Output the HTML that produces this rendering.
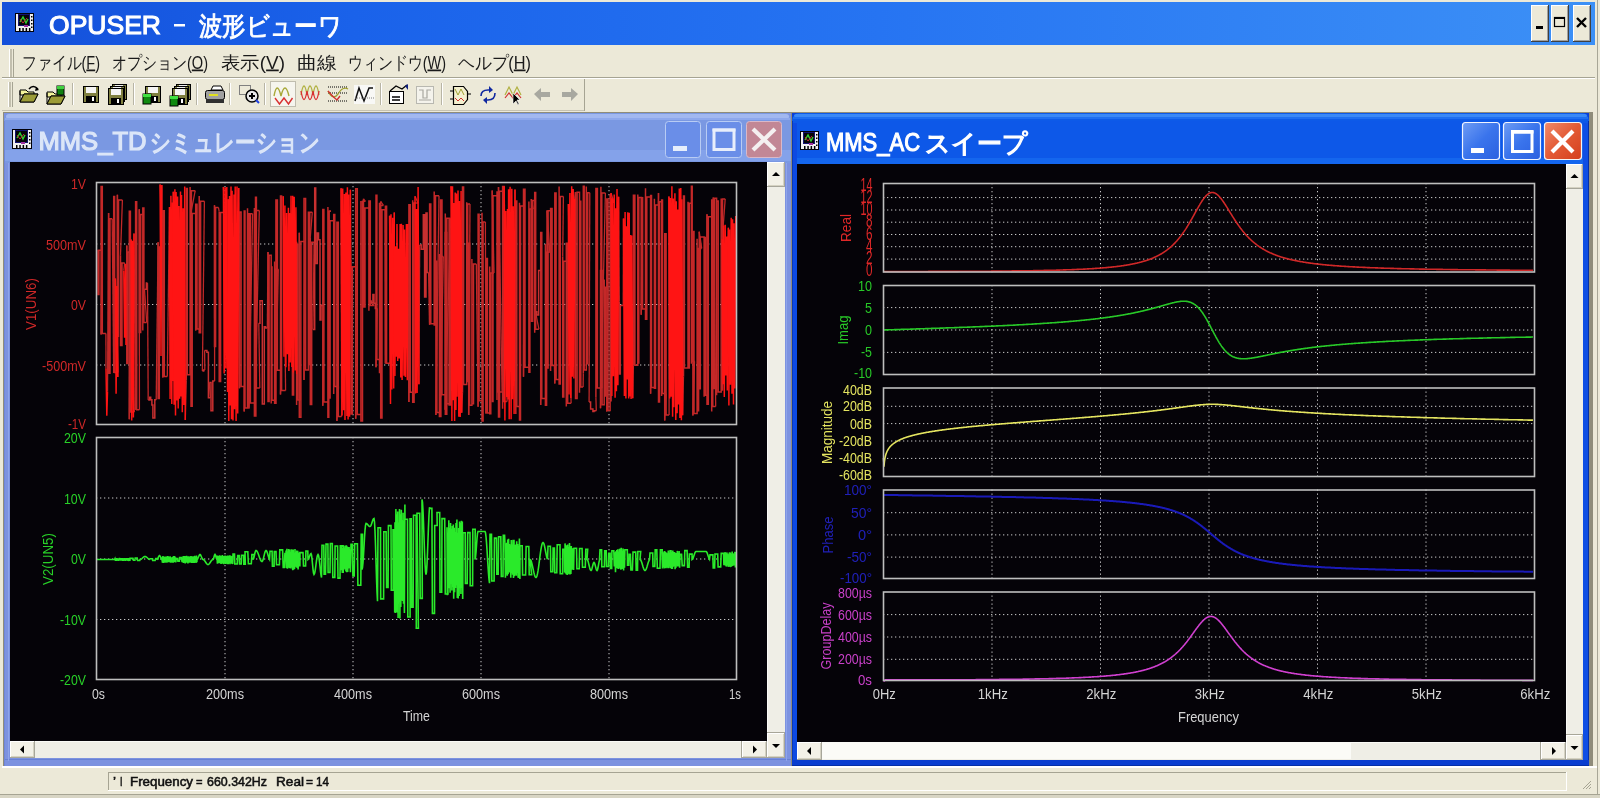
<!DOCTYPE html><html><head><meta charset="utf-8"><style>html,body{margin:0;padding:0;width:1600px;height:798px;overflow:hidden;background:#ECE9D8}svg{display:block;filter:blur(0.35px)}</style></head><body><svg width="1600" height="798" viewBox="0 0 1600 798" shape-rendering="auto"><defs>
<linearGradient id="gMain" x1="0" x2="1" y1="0" y2="0">
 <stop offset="0" stop-color="#1450DA"/><stop offset="0.22" stop-color="#1A62EA"/><stop offset="0.55" stop-color="#2674F2"/><stop offset="1" stop-color="#3C90F6"/>
</linearGradient>
<linearGradient id="gAct" x1="0" x2="0" y1="0" y2="1">
 <stop offset="0" stop-color="#3A84F6"/><stop offset="0.12" stop-color="#0A5CEC"/><stop offset="0.55" stop-color="#0058EE"/><stop offset="0.9" stop-color="#0A5FEA"/><stop offset="1" stop-color="#0845C8"/>
</linearGradient>
<linearGradient id="gInact" x1="0" x2="0" y1="0" y2="1">
 <stop offset="0" stop-color="#A8BDF0"/><stop offset="0.12" stop-color="#8DA6E8"/><stop offset="0.6" stop-color="#7C9AE4"/><stop offset="1" stop-color="#7593E0"/>
</linearGradient>
<linearGradient id="gClose" x1="0" x2="1" y1="0" y2="1">
 <stop offset="0" stop-color="#F08A6A"/><stop offset="0.5" stop-color="#E35A34"/><stop offset="1" stop-color="#D43F1E"/>
</linearGradient>
<linearGradient id="gBlueBtn" x1="0" x2="1" y1="0" y2="1">
 <stop offset="0" stop-color="#6E9CF4"/><stop offset="0.5" stop-color="#3A74EC"/><stop offset="1" stop-color="#2A60E0"/>
</linearGradient>
</defs><rect x="0" y="0" width="1600" height="798" fill="#ECE9D8" /><rect x="1597" y="0" width="1" height="798" fill="#A8A696" /><rect x="2" y="2" width="1593" height="43" fill="url(#gMain)" /><rect x="15" y="13" width="19" height="19" fill="#000008" /><rect x="16" y="14" width="2" height="17" fill="#F0F0F0" /><rect x="30" y="14" width="3" height="17" fill="#F0F0F0" /><rect x="16" y="26" width="17" height="5" fill="#F0F0F0" /><rect x="19.0" y="28" width="1.5" height="3" fill="#000" /><rect x="22.3" y="28" width="1.5" height="3" fill="#000" /><rect x="25.6" y="28" width="1.5" height="3" fill="#000" /><rect x="28.9" y="28" width="1.5" height="3" fill="#000" /><rect x="31" y="16.0" width="1.5" height="1.5" fill="#000" /><rect x="31" y="19.5" width="1.5" height="1.5" fill="#000" /><rect x="31" y="23.0" width="1.5" height="1.5" fill="#000" /><rect x="31" y="26.5" width="1.5" height="1.5" fill="#000" /><rect x="18" y="14" width="12" height="12" fill="#141470" /><rect x="19" y="15" width="10" height="10" fill="#050508" /><path d="M20,22 L23,17 L26,23 L28,19" stroke="#30D030" stroke-width="1.4" fill="none"/><path d="M20,19 L23,23 L27,18" stroke="#C03030" stroke-width="1" fill="none"/><rect x="24" y="25" width="4" height="2" fill="#A030A0" /><text x="49" y="34" font-family="'Liberation Sans',sans-serif" font-size="25" fill="#FFFFFF" text-anchor="start" font-weight="normal" textLength="112" lengthAdjust="spacingAndGlyphs" stroke="#FFFFFF" stroke-width="1.0">OPUSER</text><rect x="174" y="24" width="11" height="2.5" fill="#FFFFFF" /><text x="199" y="35" font-family="'Liberation Sans',sans-serif" font-size="26" fill="#FFFFFF" text-anchor="start" font-weight="normal" textLength="143" lengthAdjust="spacingAndGlyphs" stroke="#FFFFFF" stroke-width="0.9">波形ビューワ</text><rect x="1531" y="5" width="18" height="37" fill="#404040" /><rect x="1531" y="5" width="17" height="36" fill="#FFFFFF" /><rect x="1532" y="6" width="16" height="35" fill="#A0A0A0" /><rect x="1532" y="6" width="15" height="34" fill="#ECE9D8" /><rect x="1536" y="26" width="7" height="3" fill="#000" /><rect x="1551" y="5" width="18" height="37" fill="#404040" /><rect x="1551" y="5" width="17" height="36" fill="#FFFFFF" /><rect x="1552" y="6" width="16" height="35" fill="#A0A0A0" /><rect x="1552" y="6" width="15" height="34" fill="#ECE9D8" /><rect x="1554.5" y="17.5" width="10" height="9" fill="none" stroke="#000" stroke-width="1.2"/><rect x="1554" y="17" width="11" height="2" fill="#000" /><rect x="1573" y="5" width="18" height="37" fill="#404040" /><rect x="1573" y="5" width="17" height="36" fill="#FFFFFF" /><rect x="1574" y="6" width="16" height="35" fill="#A0A0A0" /><rect x="1574" y="6" width="15" height="34" fill="#ECE9D8" /><path d="M1577,18 L1586,27 M1586,18 L1577,27" stroke="#000" stroke-width="2.4"/><rect x="2" y="45" width="1593" height="33" fill="#ECE9D8" /><rect x="2" y="77" width="1593" height="1" fill="#A6A493" /><rect x="2" y="78" width="1593" height="1" fill="#FFFFFF" /><rect x="9" y="49" width="1" height="28" fill="#FFFFFF" /><rect x="10" y="49" width="2" height="28" fill="#C2BFAE" /><rect x="13" y="49" width="1" height="28" fill="#A6A493" /><text x="22" y="68.5" font-family="'Liberation Sans',sans-serif" font-size="17.5" fill="#1A1A1A" text-anchor="start" font-weight="normal" textLength="78" lengthAdjust="spacingAndGlyphs" >ファイル(<tspan text-decoration="underline">F</tspan>)</text><text x="112" y="68.5" font-family="'Liberation Sans',sans-serif" font-size="17.5" fill="#1A1A1A" text-anchor="start" font-weight="normal" textLength="96" lengthAdjust="spacingAndGlyphs" >オプション(<tspan text-decoration="underline">O</tspan>)</text><text x="221" y="68.5" font-family="'Liberation Sans',sans-serif" font-size="17.5" fill="#1A1A1A" text-anchor="start" font-weight="normal" textLength="64" lengthAdjust="spacingAndGlyphs" >表示(<tspan text-decoration="underline">V</tspan>)</text><text x="297" y="68.5" font-family="'Liberation Sans',sans-serif" font-size="17.5" fill="#1A1A1A" text-anchor="start" font-weight="normal" textLength="40" lengthAdjust="spacingAndGlyphs" >曲線</text><text x="348" y="68.5" font-family="'Liberation Sans',sans-serif" font-size="17.5" fill="#1A1A1A" text-anchor="start" font-weight="normal" textLength="98" lengthAdjust="spacingAndGlyphs" >ウィンドウ(<tspan text-decoration="underline">W</tspan>)</text><text x="458" y="68.5" font-family="'Liberation Sans',sans-serif" font-size="17.5" fill="#1A1A1A" text-anchor="start" font-weight="normal" textLength="73" lengthAdjust="spacingAndGlyphs" >ヘルプ(<tspan text-decoration="underline">H</tspan>)</text><rect x="2" y="110" width="582" height="1" fill="#C5C2B2" /><rect x="584" y="79" width="1" height="32" fill="#A6A493" /><rect x="8" y="82" width="1" height="25" fill="#FFFFFF" /><rect x="9" y="82" width="2" height="25" fill="#C2BFAE" /><rect x="12" y="82" width="1" height="25" fill="#A6A493" /><rect x="72" y="83" width="1" height="22" fill="#B8B5A5" /><rect x="73" y="83" width="1" height="22" fill="#FFFFFF" /><rect x="133" y="83" width="1" height="22" fill="#B8B5A5" /><rect x="134" y="83" width="1" height="22" fill="#FFFFFF" /><rect x="196" y="83" width="1" height="22" fill="#B8B5A5" /><rect x="197" y="83" width="1" height="22" fill="#FFFFFF" /><rect x="229" y="83" width="1" height="22" fill="#B8B5A5" /><rect x="230" y="83" width="1" height="22" fill="#FFFFFF" /><rect x="264" y="83" width="1" height="22" fill="#B8B5A5" /><rect x="265" y="83" width="1" height="22" fill="#FFFFFF" /><rect x="380" y="83" width="1" height="22" fill="#B8B5A5" /><rect x="381" y="83" width="1" height="22" fill="#FFFFFF" /><rect x="441" y="83" width="1" height="22" fill="#B8B5A5" /><rect x="442" y="83" width="1" height="22" fill="#FFFFFF" /><path d="M20,90 h6 l2,2 h6 v3 h-14 z" fill="#F4F49C" stroke="#000" stroke-width="1"/><path d="M20,91 v11 h14 l4,-8 h-14 l-4,8" fill="#E8E890" stroke="#000" stroke-width="1"/><path d="M24,94 h14 l-4,8 h-14 z" fill="#9C9C38" stroke="#000" stroke-width="1"/><path d="M29,89 q4,-5 9,0" stroke="#000" stroke-width="1.5" fill="none"/><path d="M36,87 l3,3 l-4,1 z" fill="#000"/><path d="M47,92 h6 l2,2 h6 v3 h-14 z" fill="#F4F49C" stroke="#000" stroke-width="1"/><path d="M47,93 v11 h14 l4,-8 h-14 l-4,8" fill="#E8E890" stroke="#000" stroke-width="1"/><path d="M51,96 h14 l-4,8 h-14 z" fill="#9C9C38" stroke="#000" stroke-width="1"/><rect x="57" y="86" width="7" height="9" fill="#108010" stroke="#000" stroke-width="1"/><rect x="57" y="86" width="7" height="3" fill="#40D040"/><rect x="83.5" y="86.5" width="15" height="16" fill="#808040" stroke="#000"/><rect x="86" y="87" width="10" height="6" fill="#F4F4F4" /><rect x="86" y="96" width="10" height="6" fill="#000" /><rect x="92" y="97" width="2" height="4" fill="#FFF" /><rect x="112.5" y="84.5" width="14" height="15" fill="#808040" stroke="#000"/><rect x="115" y="85" width="8" height="5" fill="#F0F0F0" /><rect x="110.5" y="86.5" width="14" height="15" fill="#808040" stroke="#000"/><rect x="113" y="87" width="8" height="5" fill="#F0F0F0" /><rect x="108.5" y="88.5" width="15" height="16" fill="#808040" stroke="#000"/><rect x="111" y="89" width="10" height="6" fill="#F4F4F4" /><rect x="111" y="98" width="10" height="6" fill="#000" /><rect x="117" y="99" width="2" height="4" fill="#FFF" /><rect x="145.5" y="86.5" width="15" height="16" fill="#808040" stroke="#000"/><rect x="148" y="87" width="10" height="6" fill="#F4F4F4" /><rect x="148" y="96" width="10" height="6" fill="#000" /><rect x="154" y="97" width="2" height="4" fill="#FFF" /><rect x="143" y="94" width="8" height="10" fill="#108A10" stroke="#000"/><rect x="143" y="94" width="8" height="3" fill="#40E040"/><rect x="176.5" y="84.5" width="14" height="15" fill="#808040" stroke="#000"/><rect x="179" y="85" width="8" height="5" fill="#F0F0F0" /><rect x="174.5" y="86.5" width="14" height="15" fill="#808040" stroke="#000"/><rect x="177" y="87" width="8" height="5" fill="#F0F0F0" /><rect x="172.5" y="88.5" width="15" height="16" fill="#808040" stroke="#000"/><rect x="175" y="89" width="10" height="6" fill="#F4F4F4" /><rect x="175" y="98" width="10" height="6" fill="#000" /><rect x="181" y="99" width="2" height="4" fill="#FFF" /><rect x="170" y="96" width="8" height="10" fill="#108A10" stroke="#000"/><rect x="170" y="96" width="8" height="3" fill="#40E040"/><path d="M213,86 h8 l2,4 h-12 z" fill="#fff" stroke="#000"/><rect x="205.5" y="90.5" width="19" height="9" rx="2" fill="#A0A0A0" stroke="#000"/><rect x="206" y="99" width="18" height="4" fill="#303030"/><rect x="209" y="94" width="9" height="2" fill="#E0E020"/><rect x="239.5" y="85.5" width="11" height="9" fill="none" stroke="#808080"/><circle cx="252" cy="96" r="6" fill="#E8E8E8" stroke="#000" stroke-width="1.5"/><path d="M249,96 h6 M252,93 v6" stroke="#000" stroke-width="2"/><path d="M256,100 l3,3" stroke="#2040E0" stroke-width="2"/><rect x="270.5" y="81.5" width="25" height="25" fill="#F6F5EE" stroke="#C0BDAE"/><path d="M274,96 Q277,80 281,96 Q285,80 289,96" stroke="#A8A838" stroke-width="1.4" fill="none"/><path d="M275,98 l4.5,6 l4.5,-6 l4.5,6 l4,-6" stroke="#D83030" stroke-width="1.4" fill="none"/><path d="M301,95 Q304,77 307,95 Q310,77 313,95 Q316,77 319,95" stroke="#B0B040" stroke-width="1.3" fill="none"/><path d="M301,91 Q304,108 307,91 Q310,108 313,91 Q316,108 319,91" stroke="#D83030" stroke-width="1.3" fill="none"/><path d="M328,87 h20 M328,93 h20 M328,101 h20" stroke="#000" stroke-width="1" stroke-dasharray="1,1"/><path d="M328,91 q5,10 10,3 q5,-8 10,-5" stroke="#A0A030" stroke-width="1.3" fill="none"/><path d="M328,91 q5,6 9,9 l3,-4" stroke="#D03030" stroke-width="1.3" fill="none"/><rect x="354" y="85" width="21" height="19" fill="#F8F8F6"/><path d="M355,101 l4,-13 l5,13 l5,-13 l4,0" stroke="#101010" stroke-width="1.5" fill="none"/><path d="M355,98 h20" stroke="#808080" stroke-dasharray="1,1"/><rect x="389.5" y="91.5" width="14" height="12" fill="#fff" stroke="#000"/><path d="M392,97 h8 M392,100 h8" stroke="#000" stroke-width="1.4"/><path d="M390,91 l6,-5 l6,3 l5,-4" stroke="#000" stroke-width="1.3" fill="none"/><path d="M405,86 l3,-2 v6 z" fill="#102080"/><rect x="416.5" y="86.5" width="17" height="17" fill="#F4F3EC" stroke="#B8B8B0"/><path d="M419,90 h4 v8 h4 v-8 h4 M419,100 h12" stroke="#A8A8A0" stroke-width="1.2" fill="none"/><path d="M453.5,86.5 h10 l4,5 v8 l-4,5 h-10 z" fill="#F4F0D0" stroke="#000" stroke-width="1.2"/><path d="M450,91 h4 M450,99 h4 M467,94 h4" stroke="#000"/><path d="M455,89 l3,6 l3,-6 l3,6" stroke="#A0A030" fill="none"/><path d="M455,98 l3,3 l3,-3 l3,3" stroke="#D03030" fill="none"/><path d="M481,96 q0,-6 7,-6 h3" stroke="#1028A0" stroke-width="1.6" fill="none"/><path d="M489,86 l4,4 l-4,3 z" fill="#1028A0"/><path d="M495,93 q0,7 -7,7 h-3" stroke="#1028A0" stroke-width="1.6" fill="none"/><path d="M487,97 l-4,3 l4,4 z" fill="#1028A0"/><path d="M505,95 l4,-8 l4,8 l4,-8 l4,8" stroke="#B0B040" stroke-width="1.2" fill="none"/><path d="M505,98 l4,-5 l4,5 l4,-5 l4,5" stroke="#D03030" stroke-width="1.2" fill="none"/><path d="M513,93 v11 l3,-3 l2,4 l1,-1 l-2,-4 h3 z" fill="#000" stroke="#fff" stroke-width="0.6"/><path d="M534,94 l7,-6 v4 h9 v5 h-9 v4 z" fill="#A8A8A0"/><path d="M578,94 l-7,-6 v4 h-9 v5 h9 v4 z" fill="#A8A8A0"/><rect x="3" y="112" width="1590" height="654" fill="#8F8C7A" /><rect x="4" y="113" width="787" height="653" fill="#7C92E0" /><rect x="4" y="759" width="787" height="1" fill="#6880D4" /><rect x="786" y="163" width="1" height="598" fill="#8EA4EA" /><rect x="8" y="163" width="1" height="598" fill="#8EA4EA" /><rect x="4" y="113" width="787" height="50" rx="7" fill="#7A98E2"/><rect x="4" y="121" width="787" height="42" fill="#7A98E2" /><rect x="6" y="114" width="783" height="5" rx="3" fill="#A2B8F0"/><rect x="5" y="118" width="785" height="2" fill="#8EA8EC" /><rect x="4" y="150" width="787" height="11" fill="#84A2EA" /><rect x="4" y="121" width="1" height="645" fill="#6F86D8" /><rect x="12" y="129" width="20" height="20" fill="#000008" /><rect x="13" y="130" width="2" height="18" fill="#F0F0F0" /><rect x="28" y="130" width="3" height="18" fill="#F0F0F0" /><rect x="13" y="143" width="18" height="5" fill="#F0F0F0" /><rect x="16.0" y="145" width="1.5" height="3" fill="#000" /><rect x="19.3" y="145" width="1.5" height="3" fill="#000" /><rect x="22.6" y="145" width="1.5" height="3" fill="#000" /><rect x="25.9" y="145" width="1.5" height="3" fill="#000" /><rect x="29" y="132.0" width="1.5" height="1.5" fill="#000" /><rect x="29" y="135.5" width="1.5" height="1.5" fill="#000" /><rect x="29" y="139.0" width="1.5" height="1.5" fill="#000" /><rect x="29" y="142.5" width="1.5" height="1.5" fill="#000" /><rect x="15" y="130" width="13" height="13" fill="#141470" /><rect x="16" y="131" width="11" height="11" fill="#050508" /><path d="M17,138 L20,133 L23,139 L25,135" stroke="#30D030" stroke-width="1.4" fill="none"/><path d="M17,135 L20,139 L24,134" stroke="#C03030" stroke-width="1" fill="none"/><rect x="21" y="142" width="4" height="2" fill="#A030A0" /><text x="38.5" y="150" font-family="'Liberation Sans',sans-serif" font-size="25" fill="#DCE6F8" text-anchor="start" font-weight="normal" textLength="108" lengthAdjust="spacingAndGlyphs" stroke="#DCE6F8" stroke-width="1.2">MMS_TD</text><text x="150" y="151" font-family="'Liberation Sans',sans-serif" font-size="25" fill="#DCE6F8" text-anchor="start" font-weight="normal" textLength="170" lengthAdjust="spacingAndGlyphs" stroke="#DCE6F8" stroke-width="1.3">シミュレーション</text><rect x="665.5" y="121.5" width="35" height="36" rx="3" fill="#6A8EE8" stroke="#B8CCF4"/><rect x="706.5" y="121.5" width="35" height="36" rx="3" fill="#6A8EE8" stroke="#B8CCF4"/><rect x="673" y="146" width="14" height="5" fill="#E6EEFB" /><rect x="714" y="130" width="20" height="19.5" fill="none" stroke="#E8EEFB" stroke-width="3"/><rect x="712.5" y="128.5" width="23" height="3" fill="#E8EEFB" /><rect x="746.5" y="121.5" width="35" height="36" rx="3" fill="#C28795" stroke="#D9B8C8"/><path d="M753,129 L775,150 M775,129 L753,150" stroke="#F4F0F0" stroke-width="4.2"/><rect x="10" y="162" width="757" height="579" fill="#050308" /><rect x="767" y="162" width="18" height="596" fill="#EFEEE6" /><rect x="767" y="162" width="1" height="596" fill="#FAFAF6" /><rect x="767" y="162" width="18" height="25" fill="#A7A69A" /><rect x="767" y="162" width="17" height="24" fill="#FFFFFF" /><rect x="768" y="163" width="16" height="23" fill="#D5D2C2" /><rect x="768" y="163" width="15" height="22" fill="#F3F1E7" /><polygon points="772.0,176.0 780.0,176.0 776.0,172.0" fill="#000"/><rect x="767" y="732" width="18" height="1" fill="#A8A698" /><rect x="767" y="733" width="18" height="25" fill="#A7A69A" /><rect x="767" y="733" width="17" height="24" fill="#FFFFFF" /><rect x="768" y="734" width="16" height="23" fill="#D5D2C2" /><rect x="768" y="734" width="15" height="22" fill="#F3F1E7" /><polygon points="772.0,744.0 780.0,744.0 776.0,748.0" fill="#000"/><rect x="10" y="741" width="757" height="17" fill="#EFEEE6" /><rect x="10" y="741" width="757" height="1" fill="#FAFAF6" /><rect x="10" y="741" width="25" height="17" fill="#A7A69A" /><rect x="10" y="741" width="24" height="16" fill="#FFFFFF" /><rect x="11" y="742" width="23" height="15" fill="#D5D2C2" /><rect x="11" y="742" width="22" height="14" fill="#F3F1E7" /><polygon points="24.0,745.5 24.0,753.5 20.0,749.5" fill="#000"/><rect x="741" y="741" width="1" height="17" fill="#A8A698" /><rect x="742" y="741" width="25" height="17" fill="#A7A69A" /><rect x="742" y="741" width="24" height="16" fill="#FFFFFF" /><rect x="743" y="742" width="23" height="15" fill="#D5D2C2" /><rect x="743" y="742" width="22" height="14" fill="#F3F1E7" /><polygon points="753.0,745.5 753.0,753.5 757.0,749.5" fill="#000"/><rect x="792" y="113" width="797" height="653" fill="#0A3ED8" /><rect x="792" y="113" width="797" height="51" rx="7" fill="#0D5AE8"/><rect x="792" y="121" width="797" height="43" fill="#0D58E8" /><rect x="794" y="114" width="793" height="3.5" rx="2" fill="#3A88F6"/><rect x="793" y="117" width="795" height="2" fill="#1E6EF0" /><rect x="792" y="158" width="797" height="6" fill="#1466EE" /><rect x="1583" y="123" width="6" height="643" fill="#0E4EE4" /><rect x="1588" y="121" width="1" height="645" fill="#0630A8" /><rect x="792" y="123" width="5" height="643" fill="#0D4AE2" /><rect x="792" y="121" width="1" height="645" fill="#0838B8" /><rect x="792" y="760" width="797" height="6" fill="#0A3ED0" /><rect x="792" y="765" width="797" height="1" fill="#0630A8" /><rect x="800" y="131" width="19" height="19" fill="#000008" /><rect x="801" y="132" width="2" height="17" fill="#F0F0F0" /><rect x="815" y="132" width="3" height="17" fill="#F0F0F0" /><rect x="801" y="144" width="17" height="5" fill="#F0F0F0" /><rect x="804.0" y="146" width="1.5" height="3" fill="#000" /><rect x="807.3" y="146" width="1.5" height="3" fill="#000" /><rect x="810.6" y="146" width="1.5" height="3" fill="#000" /><rect x="813.9" y="146" width="1.5" height="3" fill="#000" /><rect x="816" y="134.0" width="1.5" height="1.5" fill="#000" /><rect x="816" y="137.5" width="1.5" height="1.5" fill="#000" /><rect x="816" y="141.0" width="1.5" height="1.5" fill="#000" /><rect x="816" y="144.5" width="1.5" height="1.5" fill="#000" /><rect x="803" y="132" width="12" height="12" fill="#141470" /><rect x="804" y="133" width="10" height="10" fill="#050508" /><path d="M805,140 L808,135 L811,141 L813,137" stroke="#30D030" stroke-width="1.4" fill="none"/><path d="M805,137 L808,141 L812,136" stroke="#C03030" stroke-width="1" fill="none"/><rect x="809" y="143" width="4" height="2" fill="#A030A0" /><text x="826" y="151" font-family="'Liberation Sans',sans-serif" font-size="25" fill="#FFFFFF" text-anchor="start" font-weight="normal" textLength="94" lengthAdjust="spacingAndGlyphs" stroke="#FFFFFF" stroke-width="1.1">MMS_AC</text><text x="925" y="152" font-family="'Liberation Sans',sans-serif" font-size="25" fill="#FFFFFF" text-anchor="start" font-weight="normal" textLength="103" lengthAdjust="spacingAndGlyphs" stroke="#FFFFFF" stroke-width="1.3">スイープ</text><rect x="1462.5" y="122.5" width="37" height="37" rx="3" fill="url(#gBlueBtn)" stroke="#F0F4FF" stroke-width="1.2"/><rect x="1503.5" y="122.5" width="37" height="37" rx="3" fill="url(#gBlueBtn)" stroke="#F0F4FF" stroke-width="1.2"/><rect x="1471" y="148" width="13" height="5" fill="#FFFFFF" /><rect x="1512.5" y="132" width="19.5" height="19.5" fill="none" stroke="#FFFFFF" stroke-width="3"/><rect x="1511" y="130" width="22.5" height="3.5" fill="#FFFFFF" /><rect x="1544.5" y="122.5" width="37" height="37" rx="3" fill="url(#gClose)" stroke="#F4F4F4" stroke-width="1.2"/><path d="M1552,131 L1573,152 M1573,131 L1552,152" stroke="#FFFFFF" stroke-width="4.2"/><rect x="797" y="164" width="769" height="578" fill="#050308" /><rect x="1566" y="164" width="17" height="596" fill="#EFEEE6" /><rect x="1566" y="164" width="1" height="596" fill="#FAFAF6" /><rect x="1566" y="164" width="17" height="25" fill="#A7A69A" /><rect x="1566" y="164" width="16" height="24" fill="#FFFFFF" /><rect x="1567" y="165" width="15" height="23" fill="#D5D2C2" /><rect x="1567" y="165" width="14" height="22" fill="#F3F1E7" /><polygon points="1570.5,178.0 1578.5,178.0 1574.5,174.0" fill="#000"/><rect x="1566" y="734" width="17" height="1" fill="#A8A698" /><rect x="1566" y="735" width="17" height="25" fill="#A7A69A" /><rect x="1566" y="735" width="16" height="24" fill="#FFFFFF" /><rect x="1567" y="736" width="15" height="23" fill="#D5D2C2" /><rect x="1567" y="736" width="14" height="22" fill="#F3F1E7" /><polygon points="1570.5,746.0 1578.5,746.0 1574.5,750.0" fill="#000"/><rect x="797" y="742" width="769" height="18" fill="#EFEEE6" /><rect x="797" y="742" width="769" height="1" fill="#FAFAF6" /><rect x="797" y="742" width="25" height="18" fill="#A7A69A" /><rect x="797" y="742" width="24" height="17" fill="#FFFFFF" /><rect x="798" y="743" width="23" height="16" fill="#D5D2C2" /><rect x="798" y="743" width="22" height="15" fill="#F3F1E7" /><polygon points="811.0,747.0 811.0,755.0 807.0,751.0" fill="#000"/><rect x="1540" y="742" width="1" height="18" fill="#A8A698" /><rect x="1541" y="742" width="25" height="18" fill="#A7A69A" /><rect x="1541" y="742" width="24" height="17" fill="#FFFFFF" /><rect x="1542" y="743" width="23" height="16" fill="#D5D2C2" /><rect x="1542" y="743" width="22" height="15" fill="#F3F1E7" /><polygon points="1552.0,747.0 1552.0,755.0 1556.0,751.0" fill="#000"/><rect x="822" y="743" width="529" height="16" fill="#FBFBF7" /><rect x="2" y="766" width="1595" height="30" fill="#ECE9D8" /><rect x="2" y="766" width="1595" height="2" fill="#FFFFFF" /><rect x="108" y="772" width="1458" height="1" fill="#A6A493" /><rect x="108" y="772" width="1" height="19" fill="#A6A493" /><rect x="108" y="790" width="1458" height="1" fill="#FFFFFF" /><rect x="1566" y="772" width="1" height="19" fill="#FFFFFF" /><text x="113" y="785.5" font-family="'Liberation Sans',sans-serif" font-size="12" fill="#101010" text-anchor="start" font-weight="normal" textLength="3" lengthAdjust="spacingAndGlyphs" stroke="#101010" stroke-width="0.5">’</text><text x="120" y="785.5" font-family="'Liberation Sans',sans-serif" font-size="12" fill="#101010" text-anchor="start" font-weight="normal" textLength="2.5" lengthAdjust="spacingAndGlyphs" stroke="#101010" stroke-width="0.5">I</text><text x="130" y="785.5" font-family="'Liberation Sans',sans-serif" font-size="12" fill="#101010" text-anchor="start" font-weight="normal" textLength="63" lengthAdjust="spacingAndGlyphs" stroke="#101010" stroke-width="0.5">Frequency</text><text x="196" y="785.5" font-family="'Liberation Sans',sans-serif" font-size="12" fill="#101010" text-anchor="start" font-weight="normal" textLength="6.5" lengthAdjust="spacingAndGlyphs" stroke="#101010" stroke-width="0.5">=</text><text x="207" y="785.5" font-family="'Liberation Sans',sans-serif" font-size="12" fill="#101010" text-anchor="start" font-weight="normal" textLength="60" lengthAdjust="spacingAndGlyphs" stroke="#101010" stroke-width="0.5">660.342Hz</text><text x="276" y="785.5" font-family="'Liberation Sans',sans-serif" font-size="12" fill="#101010" text-anchor="start" font-weight="normal" textLength="28" lengthAdjust="spacingAndGlyphs" stroke="#101010" stroke-width="0.5">Real</text><text x="306" y="785.5" font-family="'Liberation Sans',sans-serif" font-size="12" fill="#101010" text-anchor="start" font-weight="normal" textLength="7" lengthAdjust="spacingAndGlyphs" stroke="#101010" stroke-width="0.5">=</text><text x="316" y="785.5" font-family="'Liberation Sans',sans-serif" font-size="12" fill="#101010" text-anchor="start" font-weight="normal" textLength="13" lengthAdjust="spacingAndGlyphs" stroke="#101010" stroke-width="0.5">14</text><rect x="0" y="794" width="1600" height="1" fill="#A6A493" /><rect x="0" y="795" width="1600" height="3" fill="#D8D5C4" /><path d="M1583,789 l8,-8 M1586,789 l5,-5 M1589,789 l2,-2" stroke="#A6A493" stroke-width="1"/><line x1="96" y1="244" x2="737" y2="244" stroke="#C8C8C8" stroke-width="1" stroke-dasharray="1.3,2.7"/><line x1="96" y1="304.5" x2="737" y2="304.5" stroke="#C8C8C8" stroke-width="1" stroke-dasharray="1.3,2.7"/><line x1="96" y1="365" x2="737" y2="365" stroke="#C8C8C8" stroke-width="1" stroke-dasharray="1.3,2.7"/><line x1="225" y1="182" x2="225" y2="425" stroke="#C8C8C8" stroke-width="1" stroke-dasharray="1.3,2.7"/><line x1="353" y1="182" x2="353" y2="425" stroke="#C8C8C8" stroke-width="1" stroke-dasharray="1.3,2.7"/><line x1="481" y1="182" x2="481" y2="425" stroke="#C8C8C8" stroke-width="1" stroke-dasharray="1.3,2.7"/><line x1="609" y1="182" x2="609" y2="425" stroke="#C8C8C8" stroke-width="1" stroke-dasharray="1.3,2.7"/><line x1="96" y1="498" x2="737" y2="498" stroke="#C8C8C8" stroke-width="1" stroke-dasharray="1.3,2.7"/><line x1="96" y1="559" x2="737" y2="559" stroke="#C8C8C8" stroke-width="1" stroke-dasharray="1.3,2.7"/><line x1="96" y1="619.5" x2="737" y2="619.5" stroke="#C8C8C8" stroke-width="1" stroke-dasharray="1.3,2.7"/><line x1="225" y1="437" x2="225" y2="680" stroke="#C8C8C8" stroke-width="1" stroke-dasharray="1.3,2.7"/><line x1="353" y1="437" x2="353" y2="680" stroke="#C8C8C8" stroke-width="1" stroke-dasharray="1.3,2.7"/><line x1="481" y1="437" x2="481" y2="680" stroke="#C8C8C8" stroke-width="1" stroke-dasharray="1.3,2.7"/><line x1="609" y1="437" x2="609" y2="680" stroke="#C8C8C8" stroke-width="1" stroke-dasharray="1.3,2.7"/><g><polyline fill="none" stroke="#C42828" stroke-width="1.5" points="98.0,249.8 98.0,294.5 98.9,294.5 98.9,250.3 102.0,250.3"/><polyline fill="none" stroke="#C42828" stroke-width="1.5" points="101.1,334.5 101.1,186.4 102.3,186.4 102.3,333.6 105.9,333.6"/><polyline fill="none" stroke="#C42828" stroke-width="1.5" points="108.6,213.1 108.6,373.2 110.0,373.2 110.0,218.8 112.2,218.8"/><polyline fill="none" stroke="#C42828" stroke-width="1.5" points="113.7,373.1 113.7,196.6 114.6,196.6 114.6,372.5 118.0,372.5"/><polyline fill="none" stroke="#C42828" stroke-width="1.5" points="117.4,194.8 117.4,336.2 118.5,336.2 118.5,199.9 122.4,199.9"/><polyline fill="none" stroke="#C42828" stroke-width="1.5" points="120.5,255.3 120.5,345.5 122.0,345.5 122.0,262.9 124.7,262.9"/><polyline fill="none" stroke="#C42828" stroke-width="1.5" points="126.8,245.4 126.8,363.5 128.0,363.5 128.0,252.0 130.3,252.0"/><polyline fill="none" stroke="#C42828" stroke-width="1.5" points="129.3,419.2 129.3,211.3 130.4,211.3 130.4,411.9 134.3,411.9"/><polyline fill="none" stroke="#C42828" stroke-width="1.5" points="135.6,409.8 135.6,201.7 136.7,201.7 136.7,409.8 139.4,409.8"/><polyline fill="none" stroke="#C42828" stroke-width="1.5" points="139.3,209.3 139.3,332.5 140.7,332.5 140.7,214.4 142.8,214.4 142.8,330.4 142.8,207.9 143.9,207.9 143.9,322.4 146.7,322.4"/><polyline fill="none" stroke="#C42828" stroke-width="1.5" points="158.1,242.2 158.1,398.5 159.3,398.5 159.3,247.1 161.9,247.1"/><polyline fill="none" stroke="#C42828" stroke-width="1.5" points="162.8,377.4 162.8,210.7 164.3,210.7 164.3,376.5 167.3,376.5"/><polyline fill="none" stroke="#C42828" stroke-width="1.5" points="186.3,380.7 186.3,188.5 187.3,188.5 187.3,374.8 190.1,374.8 190.1,187.1 190.1,367.9 191.4,367.9 191.4,190.7 195.2,190.7"/><polyline fill="none" stroke="#C42828" stroke-width="1.5" points="191.0,212.3 191.0,406.3 192.2,406.3 192.2,213.6 195.9,213.6"/><polyline fill="none" stroke="#C42828" stroke-width="1.5" points="195.7,330.5 195.7,204.2 197.0,204.2 197.0,329.1 199.2,329.1 199.2,195.9 199.2,332.7 200.6,332.7 200.6,201.2 204.4,201.2"/><polyline fill="none" stroke="#C42828" stroke-width="1.5" points="214.5,205.3 214.5,346.4 215.6,346.4 215.6,207.4 218.4,207.4"/><polyline fill="none" stroke="#C42828" stroke-width="1.5" points="219.2,211.7 219.2,381.4 220.6,381.4 220.6,212.4 224.4,212.4"/><polyline fill="none" stroke="#C42828" stroke-width="1.5" points="239.5,388.2 239.5,212.0 241.1,212.0 241.1,386.4 244.3,386.4"/><polyline fill="none" stroke="#C42828" stroke-width="1.5" points="244.2,411.6 244.2,211.0 245.0,211.0 245.0,408.1 247.5,408.1 247.5,208.2 247.5,406.6 248.7,406.6 248.7,213.7 252.6,213.7"/><polyline fill="none" stroke="#C42828" stroke-width="1.5" points="248.9,408.5 248.9,214.7 250.4,214.7 250.4,403.1 254.4,403.1 254.4,208.1 254.4,416.1 255.9,416.1 255.9,210.4 259.3,210.4"/><polyline fill="none" stroke="#C42828" stroke-width="1.5" points="255.5,389.2 255.5,197.2 256.4,197.2 256.4,387.9 259.8,387.9"/><polyline fill="none" stroke="#C42828" stroke-width="1.5" points="268.0,252.0 268.0,401.5 269.1,401.5 269.1,255.3 271.2,255.3 271.2,403.6 271.2,266.9 272.0,266.9 272.0,400.2 274.6,400.2 274.6,261.6 274.6,403.2 276.0,403.2 276.0,269.3 278.3,269.3"/><polyline fill="none" stroke="#C42828" stroke-width="1.5" points="275.9,371.2 275.9,200.1 277.4,200.1 277.4,370.3 281.1,370.3"/><polyline fill="none" stroke="#C42828" stroke-width="1.5" points="280.5,394.5 280.5,195.9 281.6,195.9 281.6,390.6 285.6,390.6"/><polyline fill="none" stroke="#C42828" stroke-width="1.5" points="292.4,236.4 292.4,395.0 293.6,395.0 293.6,242.6 296.6,242.6 296.6,404.9 296.6,244.2 298.0,244.2 298.0,400.0 300.5,400.0"/><polyline fill="none" stroke="#C42828" stroke-width="1.5" points="299.3,232.7 299.3,417.2 300.9,417.2 300.9,241.6 304.8,241.6"/><polyline fill="none" stroke="#C42828" stroke-width="1.5" points="304.0,380.0 304.0,198.5 305.6,198.5 305.6,370.0 308.4,370.0 308.4,211.4 308.4,364.2 309.8,364.2 309.8,212.2 312.3,212.2"/><polyline fill="none" stroke="#C42828" stroke-width="1.5" points="310.3,237.2 310.3,404.6 311.7,404.6 311.7,242.3 314.1,242.3"/><polyline fill="none" stroke="#C42828" stroke-width="1.5" points="322.8,405.7 322.8,209.6 323.9,209.6 323.9,401.9 327.9,401.9 327.9,206.9 327.9,417.2 328.8,417.2 328.8,211.2 331.0,211.2"/><polyline fill="none" stroke="#C42828" stroke-width="1.5" points="329.1,211.0 329.1,398.1 330.1,398.1 330.1,220.7 333.7,220.7 333.7,394.1 333.7,214.4 334.8,214.4 334.8,386.5 338.5,386.5"/><polyline fill="none" stroke="#C42828" stroke-width="1.5" points="336.9,420.9 336.9,222.3 338.3,222.3 338.3,416.4 341.6,416.4"/><polyline fill="none" stroke="#C42828" stroke-width="1.5" points="351.0,259.8 351.0,414.1 352.4,414.1 352.4,266.7 356.1,266.7"/><polyline fill="none" stroke="#C42828" stroke-width="1.5" points="355.7,418.8 355.7,188.8 357.3,188.8 357.3,414.4 360.9,414.4 360.9,200.9 360.9,421.0 362.5,421.0 362.5,201.3 365.4,201.3"/><polyline fill="none" stroke="#C42828" stroke-width="1.5" points="363.5,198.8 363.5,307.1 365.0,307.1 365.0,208.1 368.9,208.1 368.9,310.8 368.9,201.0 370.3,201.0 370.3,305.6 374.2,305.6"/><polyline fill="none" stroke="#C42828" stroke-width="1.5" points="376.0,367.2 376.0,195.2 376.9,195.2 376.9,359.6 379.5,359.6 379.5,202.8 379.5,372.6 380.3,372.6 380.3,205.4 383.4,205.4"/><polyline fill="none" stroke="#C42828" stroke-width="1.5" points="380.7,201.4 380.7,417.9 382.0,417.9 382.0,209.8 385.0,209.8"/><polyline fill="none" stroke="#C42828" stroke-width="1.5" points="385.4,363.5 385.4,206.3 386.6,206.3 386.6,363.2 390.0,363.2"/><polyline fill="none" stroke="#C42828" stroke-width="1.5" points="408.9,401.9 408.9,204.7 410.2,204.7 410.2,392.3 412.7,392.3 412.7,200.3 412.7,402.2 414.1,402.2 414.1,203.1 418.0,203.1"/><polyline fill="none" stroke="#C42828" stroke-width="1.5" points="429.6,324.7 429.6,203.9 430.8,203.9 430.8,323.7 434.2,323.7 434.2,191.6 434.2,325.1 435.5,325.1 435.5,195.8 439.0,195.8"/><polyline fill="none" stroke="#C42828" stroke-width="1.5" points="435.9,415.1 435.9,261.3 436.9,261.3 436.9,412.4 439.4,412.4 439.4,254.1 439.4,416.5 440.9,416.5 440.9,256.5 443.3,256.5"/><polyline fill="none" stroke="#C42828" stroke-width="1.5" points="440.5,397.0 440.5,200.1 442.0,200.1 442.0,394.7 445.3,394.7 445.3,213.4 445.3,414.2 446.8,414.2 446.8,218.2 450.6,218.2"/><polyline fill="none" stroke="#C42828" stroke-width="1.5" points="445.2,409.7 445.2,232.4 446.7,232.4 446.7,403.7 449.1,403.7 449.1,217.9 449.1,405.1 450.5,405.1 450.5,219.7 453.8,219.7"/><polyline fill="none" stroke="#C42828" stroke-width="1.5" points="462.5,392.7 462.5,187.1 463.6,187.1 463.6,384.6 466.7,384.6 466.7,202.3 466.7,381.5 467.7,381.5 467.7,204.0 470.0,204.0"/><polyline fill="none" stroke="#C42828" stroke-width="1.5" points="468.7,414.9 468.7,243.3 469.7,243.3 469.7,405.2 471.9,405.2 471.9,259.1 471.9,403.7 473.5,403.7 473.5,263.9 476.3,263.9"/><polyline fill="none" stroke="#C42828" stroke-width="1.5" points="478.1,406.8 478.1,214.3 479.1,214.3 479.1,400.7 482.0,400.7 482.0,212.7 482.0,420.9 483.1,420.9 483.1,222.1 485.4,222.1"/><polyline fill="none" stroke="#C42828" stroke-width="1.5" points="485.9,413.5 485.9,258.4 487.4,258.4 487.4,413.1 489.7,413.1 489.7,266.6 489.7,413.7 490.8,413.7 490.8,272.9 494.0,272.9"/><polyline fill="none" stroke="#C42828" stroke-width="1.5" points="492.2,190.6 492.2,401.4 493.0,401.4 493.0,195.7 497.0,195.7 497.0,400.0 497.0,192.0 498.5,192.0 498.5,391.9 502.1,391.9"/><polyline fill="none" stroke="#C42828" stroke-width="1.5" points="498.5,186.9 498.5,417.1 499.6,417.1 499.6,191.2 502.6,191.2 502.6,408.8 502.6,186.4 504.1,186.4 504.1,401.5 507.1,401.5"/><polyline fill="none" stroke="#C42828" stroke-width="1.5" points="515.7,414.0 515.7,201.1 516.8,201.1 516.8,406.6 519.5,406.6 519.5,202.8 519.5,420.1 520.5,420.1 520.5,206.1 523.8,206.1"/><polyline fill="none" stroke="#C42828" stroke-width="1.5" points="523.5,376.8 523.5,189.2 525.0,189.2 525.0,367.2 528.9,367.2 528.9,201.5 528.9,372.2 529.9,372.2 529.9,209.0 533.2,209.0"/><polyline fill="none" stroke="#C42828" stroke-width="1.5" points="531.3,199.1 531.3,321.3 532.7,321.3 532.7,200.5 534.7,200.5 534.7,332.7 534.7,192.5 535.7,192.5 535.7,329.2 538.9,329.2"/><polyline fill="none" stroke="#C42828" stroke-width="1.5" points="540.7,405.1 540.7,232.4 541.8,232.4 541.8,398.5 545.4,398.5 545.4,244.1 545.4,405.2 546.6,405.2 546.6,252.3 549.8,252.3"/><polyline fill="none" stroke="#C42828" stroke-width="1.5" points="547.0,210.4 547.0,368.0 548.1,368.0 548.1,210.8 550.6,210.8 550.6,371.1 550.6,208.4 552.1,208.4 552.1,365.6 554.4,365.6"/><polyline fill="none" stroke="#C42828" stroke-width="1.5" points="554.8,383.6 554.8,193.0 556.1,193.0 556.1,379.5 559.1,379.5 559.1,186.6 559.1,384.0 560.3,384.0 560.3,196.5 563.4,196.5"/><polyline fill="none" stroke="#C42828" stroke-width="1.5" points="562.7,256.6 562.7,397.0 563.8,397.0 563.8,261.2 566.3,261.2 566.3,406.5 566.3,243.2 567.7,243.2 567.7,403.2 571.1,403.2"/><polyline fill="none" stroke="#C42828" stroke-width="1.5" points="575.5,192.1 575.5,398.5 577.1,398.5 577.1,192.2 579.5,192.2 579.5,392.8 579.5,201.2 580.8,201.2 580.8,386.9 583.1,386.9"/><polyline fill="none" stroke="#C42828" stroke-width="1.5" points="583.3,373.5 583.3,186.3 584.2,186.3 584.2,370.0 586.3,370.0 586.3,186.4 586.3,363.7 587.7,363.7 587.7,192.8 589.8,192.8"/><polyline fill="none" stroke="#C42828" stroke-width="1.5" points="595.9,397.5 595.9,188.5 597.4,188.5 597.4,388.0 600.9,388.0 600.9,186.7 600.9,387.4 601.8,387.4 601.8,193.0 605.4,193.0"/><polyline fill="none" stroke="#C42828" stroke-width="1.5" points="600.5,408.2 600.5,270.5 602.1,270.5 602.1,404.7 604.2,404.7 604.2,279.6 604.2,396.1 605.4,396.1 605.4,287.3 607.9,287.3"/><polyline fill="none" stroke="#C42828" stroke-width="1.5" points="606.8,411.6 606.8,198.9 608.0,198.9 608.0,410.6 610.1,410.6 610.1,193.9 610.1,400.8 611.1,400.8 611.1,202.2 614.0,202.2"/><polyline fill="none" stroke="#C42828" stroke-width="1.5" points="619.3,301.8 619.3,374.0 620.3,374.0 620.3,305.6 623.2,305.6"/><polyline fill="none" stroke="#C42828" stroke-width="1.5" points="633.4,365.4 633.4,195.2 634.9,195.2 634.9,365.3 637.8,365.3 637.8,194.4 637.8,362.9 638.8,362.9 638.8,197.4 642.3,197.4"/><polyline fill="none" stroke="#C42828" stroke-width="1.5" points="641.2,314.7 641.2,197.7 642.6,197.7 642.6,309.0 645.5,309.0 645.5,188.2 645.5,319.2 646.8,319.2 646.8,197.0 650.6,197.0"/><polyline fill="none" stroke="#C42828" stroke-width="1.5" points="650.6,393.7 650.6,195.5 651.5,195.5 651.5,387.4 654.4,387.4 654.4,198.7 654.4,388.3 655.5,388.3 655.5,205.0 658.4,205.0"/><polyline fill="none" stroke="#C42828" stroke-width="1.5" points="658.5,193.0 658.5,402.0 659.5,402.0 659.5,201.7 661.6,201.7 661.6,396.1 661.6,199.9 662.5,199.9 662.5,393.6 666.0,393.6"/><polyline fill="none" stroke="#C42828" stroke-width="1.5" points="664.7,420.5 664.7,233.7 666.1,233.7 666.1,415.1 669.1,415.1"/><polyline fill="none" stroke="#C42828" stroke-width="1.5" points="683.5,376.4 683.5,195.9 684.4,195.9 684.4,367.9 688.0,367.9 688.0,201.8 688.0,367.9 689.3,367.9 689.3,203.2 691.4,203.2 691.4,363.7 691.4,186.3 692.2,186.3 692.2,361.2 694.5,361.2"/><polyline fill="none" stroke="#C42828" stroke-width="1.5" points="692.9,415.6 692.9,231.5 694.0,231.5 694.0,413.5 697.1,413.5 697.1,238.7 697.1,410.8 698.6,410.8 698.6,248.4 701.7,248.4"/><polyline fill="none" stroke="#C42828" stroke-width="1.5" points="699.2,231.7 699.2,388.8 700.3,388.8 700.3,237.0 704.1,237.0 704.1,396.7 704.1,237.5 705.3,237.5 705.3,395.3 707.4,395.3"/><polyline fill="none" stroke="#C42828" stroke-width="1.5" points="707.0,214.3 707.0,404.3 708.3,404.3 708.3,216.8 711.7,216.8 711.7,411.5 711.7,199.9 712.8,199.9 712.8,406.6 715.7,406.6"/><polyline fill="none" stroke="#C42828" stroke-width="1.5" points="713.3,197.4 713.3,388.5 714.6,388.5 714.6,198.2 716.6,198.2 716.6,395.3 716.6,201.1 718.2,201.1 718.2,392.0 721.2,392.0 721.2,198.6 721.2,390.1 722.5,390.1 722.5,198.9 725.2,198.9"/><polyline fill="none" stroke="#C02828" stroke-width="1.3" points="102.0,250.3 101.1,334.5"/><polyline fill="none" stroke="#C02828" stroke-width="1.3" points="105.9,333.6 106.0,368.2"/><polyline fill="none" stroke="#C02828" stroke-width="1.3" points="107.5,391.7 108.6,213.1"/><polyline fill="none" stroke="#C02828" stroke-width="1.3" points="112.2,218.8 113.7,373.1"/><polyline fill="none" stroke="#C02828" stroke-width="1.3" points="118.0,372.5 115.4,278.5"/><polyline fill="none" stroke="#C02828" stroke-width="1.3" points="117.8,376.9 117.4,194.8"/><polyline fill="none" stroke="#C02828" stroke-width="1.3" points="122.4,199.9 120.5,255.3"/><polyline fill="none" stroke="#C02828" stroke-width="1.3" points="124.7,262.9 123.8,270.4"/><polyline fill="none" stroke="#C02828" stroke-width="1.3" points="126.1,344.9 126.8,245.4"/><polyline fill="none" stroke="#C02828" stroke-width="1.3" points="130.3,252.0 129.3,419.2"/><polyline fill="none" stroke="#C02828" stroke-width="1.3" points="134.3,411.9 131.0,239.4"/><polyline fill="none" stroke="#C02828" stroke-width="1.3" points="134.0,233.4 135.6,409.8"/><polyline fill="none" stroke="#C02828" stroke-width="1.3" points="139.4,409.8 139.3,209.3"/><polyline fill="none" stroke="#C02828" stroke-width="1.3" points="146.7,322.4 144.5,289.2"/><polyline fill="none" stroke="#C83030" stroke-width="1.5" points="144.5,289.2 146.4,289.2 146.4,283.1 147.5,283.1"/><polyline fill="none" stroke="#C02828" stroke-width="1.3" points="147.5,283.1 148.2,400.1"/><polyline fill="none" stroke="#C83030" stroke-width="1.5" points="148.2,400.1 149.7,400.1 149.7,397.3 150.7,397.3 150.7,399.8 151.9,399.8 151.9,405.1 152.9,405.1 152.9,417.9 154.8,417.9 154.8,399.8 156.2,399.8"/><polyline fill="none" stroke="#C02828" stroke-width="1.3" points="156.2,399.8 158.1,242.2"/><polyline fill="none" stroke="#C02828" stroke-width="1.3" points="161.9,247.1 160.1,184.5"/><polyline fill="none" stroke="#C02828" stroke-width="1.3" points="161.8,185.1 162.8,377.4"/><polyline fill="none" stroke="#C02828" stroke-width="1.3" points="167.3,376.5 169.5,206.9"/><polyline fill="none" stroke="#C02828" stroke-width="1.3" points="173.3,380.9 173.3,191.8"/><polyline fill="none" stroke="#C02828" stroke-width="1.3" points="185.3,420.1 186.3,380.7"/><polyline fill="none" stroke="#C02828" stroke-width="1.3" points="195.2,190.7 191.0,212.3"/><polyline fill="none" stroke="#C02828" stroke-width="1.3" points="195.9,213.6 195.7,330.5"/><polyline fill="none" stroke="#C02828" stroke-width="1.3" points="204.4,201.2 202.4,370.9"/><polyline fill="none" stroke="#C83030" stroke-width="1.5" points="202.4,370.9 203.7,370.9 203.7,370.1 204.8,370.1"/><polyline fill="none" stroke="#C02828" stroke-width="1.3" points="204.8,370.1 204.6,350.5"/><polyline fill="none" stroke="#C83030" stroke-width="1.5" points="204.6,350.5 206.9,350.5 206.9,352.2 208.4,352.2 208.4,397.8 210.3,397.8"/><polyline fill="none" stroke="#C02828" stroke-width="1.3" points="210.3,397.8 209.3,382.6"/><polyline fill="none" stroke="#C83030" stroke-width="1.5" points="209.3,382.6 211.0,382.6 211.0,410.8 212.8,410.8 212.8,381.0 214.6,381.0"/><polyline fill="none" stroke="#C02828" stroke-width="1.3" points="214.6,381.0 214.5,205.3"/><polyline fill="none" stroke="#C02828" stroke-width="1.3" points="218.4,207.4 219.2,211.7"/><polyline fill="none" stroke="#C02828" stroke-width="1.3" points="224.4,212.4 223.4,186.9"/><polyline fill="none" stroke="#C02828" stroke-width="1.3" points="227.6,391.9 228.1,199.3"/><polyline fill="none" stroke="#C02828" stroke-width="1.3" points="238.7,188.1 239.5,388.2"/><polyline fill="none" stroke="#C02828" stroke-width="1.3" points="244.3,386.4 244.2,411.6"/><polyline fill="none" stroke="#C02828" stroke-width="1.3" points="252.6,213.7 248.9,408.5"/><polyline fill="none" stroke="#C02828" stroke-width="1.3" points="259.3,210.4 255.5,389.2"/><polyline fill="none" stroke="#C02828" stroke-width="1.3" points="259.8,387.9 258.8,323.2"/><polyline fill="none" stroke="#C83030" stroke-width="1.5" points="258.8,323.2 260.0,323.2 260.0,300.7 262.3,300.7 262.3,404.1 264.3,404.1 264.3,326.7 265.6,326.7 265.6,328.1 267.3,328.1"/><polyline fill="none" stroke="#C02828" stroke-width="1.3" points="267.3,328.1 268.0,252.0"/><polyline fill="none" stroke="#C02828" stroke-width="1.3" points="278.3,269.3 275.9,371.2"/><polyline fill="none" stroke="#C02828" stroke-width="1.3" points="281.1,370.3 280.5,394.5"/><polyline fill="none" stroke="#C02828" stroke-width="1.3" points="285.6,390.6 283.2,196.2"/><polyline fill="none" stroke="#C02828" stroke-width="1.3" points="296.7,374.0 292.4,236.4"/><polyline fill="none" stroke="#C02828" stroke-width="1.3" points="300.5,400.0 299.3,232.7"/><polyline fill="none" stroke="#C02828" stroke-width="1.3" points="304.8,241.6 304.0,380.0"/><polyline fill="none" stroke="#C02828" stroke-width="1.3" points="312.3,212.2 310.3,237.2"/><polyline fill="none" stroke="#C02828" stroke-width="1.3" points="314.1,242.3 312.9,329.4"/><polyline fill="none" stroke="#C83030" stroke-width="1.5" points="312.9,329.4 314.7,329.4 314.7,188.0 315.7,188.0 315.7,263.6 317.3,263.6 317.3,232.9 318.5,232.9 318.5,239.7 320.0,239.7 320.0,320.1 321.0,320.1 321.0,305.6 323.3,305.6"/><polyline fill="none" stroke="#C02828" stroke-width="1.3" points="323.3,305.6 322.8,405.7"/><polyline fill="none" stroke="#C02828" stroke-width="1.3" points="331.0,211.2 329.1,211.0"/><polyline fill="none" stroke="#C02828" stroke-width="1.3" points="338.5,386.5 336.9,420.9"/><polyline fill="none" stroke="#C02828" stroke-width="1.3" points="341.6,416.4 341.1,188.3"/><polyline fill="none" stroke="#C02828" stroke-width="1.3" points="350.4,189.8 351.0,259.8"/><polyline fill="none" stroke="#C02828" stroke-width="1.3" points="356.1,266.7 355.7,418.8"/><polyline fill="none" stroke="#C02828" stroke-width="1.3" points="365.4,201.3 363.5,198.8"/><polyline fill="none" stroke="#C02828" stroke-width="1.3" points="374.2,305.6 369.3,301.0"/><polyline fill="none" stroke="#C83030" stroke-width="1.5" points="369.3,301.0 371.2,301.0 371.2,302.7 372.9,302.7 372.9,294.6 374.0,294.6 374.0,303.3 375.3,303.3 375.3,308.5 377.3,308.5"/><polyline fill="none" stroke="#C02828" stroke-width="1.3" points="377.3,308.5 376.0,367.2"/><polyline fill="none" stroke="#C02828" stroke-width="1.3" points="383.4,205.4 380.7,201.4"/><polyline fill="none" stroke="#C02828" stroke-width="1.3" points="385.0,209.8 385.4,363.5"/><polyline fill="none" stroke="#C02828" stroke-width="1.3" points="390.0,363.2 389.6,215.7"/><polyline fill="none" stroke="#C02828" stroke-width="1.3" points="394.3,212.5 394.3,246.5"/><polyline fill="none" stroke="#C02828" stroke-width="1.3" points="407.8,223.9 408.9,401.9"/><polyline fill="none" stroke="#C02828" stroke-width="1.3" points="418.0,203.1 415.0,196.3"/><polyline fill="none" stroke="#C02828" stroke-width="1.3" points="418.9,384.2 419.7,245.1"/><polyline fill="none" stroke="#C83030" stroke-width="1.5" points="419.7,245.1 421.2,245.1 421.2,249.2 423.3,249.2 423.3,214.7 424.6,214.7 424.6,297.0 426.0,297.0 426.0,213.0 427.1,213.0 427.1,272.5 428.6,272.5"/><polyline fill="none" stroke="#C02828" stroke-width="1.3" points="428.6,272.5 429.6,324.7"/><polyline fill="none" stroke="#C02828" stroke-width="1.3" points="439.0,195.8 435.9,415.1"/><polyline fill="none" stroke="#C02828" stroke-width="1.3" points="443.3,256.5 440.5,397.0"/><polyline fill="none" stroke="#C02828" stroke-width="1.3" points="450.6,218.2 445.2,409.7"/><polyline fill="none" stroke="#C02828" stroke-width="1.3" points="453.8,219.7 451.0,186.3"/><polyline fill="none" stroke="#C02828" stroke-width="1.3" points="461.7,412.7 462.5,392.7"/><polyline fill="none" stroke="#C02828" stroke-width="1.3" points="470.0,204.0 468.7,414.9"/><polyline fill="none" stroke="#C02828" stroke-width="1.3" points="476.3,263.9 478.1,406.8"/><polyline fill="none" stroke="#C02828" stroke-width="1.3" points="485.4,222.1 485.9,413.5"/><polyline fill="none" stroke="#C02828" stroke-width="1.3" points="494.0,272.9 492.2,190.6"/><polyline fill="none" stroke="#C02828" stroke-width="1.3" points="502.1,391.9 498.5,186.9"/><polyline fill="none" stroke="#C02828" stroke-width="1.3" points="507.1,401.5 504.2,186.3"/><polyline fill="none" stroke="#C02828" stroke-width="1.3" points="515.0,189.5 515.7,414.0"/><polyline fill="none" stroke="#C02828" stroke-width="1.3" points="523.8,206.1 523.5,376.8"/><polyline fill="none" stroke="#C02828" stroke-width="1.3" points="533.2,209.0 531.3,199.1"/><polyline fill="none" stroke="#C02828" stroke-width="1.3" points="538.9,329.2 535.5,311.8"/><polyline fill="none" stroke="#C83030" stroke-width="1.5" points="535.5,311.8 536.8,311.8 536.8,314.9 538.6,314.9 538.6,270.5 541.0,270.5"/><polyline fill="none" stroke="#C02828" stroke-width="1.3" points="541.0,270.5 540.7,405.1"/><polyline fill="none" stroke="#C02828" stroke-width="1.3" points="549.8,252.3 547.0,210.4"/><polyline fill="none" stroke="#C02828" stroke-width="1.3" points="554.4,365.6 554.8,383.6"/><polyline fill="none" stroke="#C02828" stroke-width="1.3" points="563.4,196.5 562.7,256.6"/><polyline fill="none" stroke="#C02828" stroke-width="1.3" points="571.1,403.2 568.4,204.1"/><polyline fill="none" stroke="#C02828" stroke-width="1.3" points="574.7,198.3 575.5,192.1"/><polyline fill="none" stroke="#C02828" stroke-width="1.3" points="583.1,386.9 583.3,373.5"/><polyline fill="none" stroke="#C02828" stroke-width="1.3" points="589.8,192.8 589.1,402.0"/><polyline fill="none" stroke="#C83030" stroke-width="1.5" points="589.1,402.0 590.6,402.0 590.6,409.1 592.9,409.1 592.9,411.4 594.0,411.4 594.0,410.7 596.3,410.7"/><polyline fill="none" stroke="#C02828" stroke-width="1.3" points="596.3,410.7 595.9,397.5"/><polyline fill="none" stroke="#C02828" stroke-width="1.3" points="605.4,193.0 600.5,408.2"/><polyline fill="none" stroke="#C02828" stroke-width="1.3" points="607.9,287.3 606.8,411.6"/><polyline fill="none" stroke="#C02828" stroke-width="1.3" points="614.0,202.2 611.0,193.1"/><polyline fill="none" stroke="#C02828" stroke-width="1.3" points="618.6,196.7 619.3,301.8"/><polyline fill="none" stroke="#C02828" stroke-width="1.3" points="623.2,305.6 623.5,218.4"/><polyline fill="none" stroke="#C02828" stroke-width="1.3" points="632.7,398.2 633.4,365.4"/><polyline fill="none" stroke="#C02828" stroke-width="1.3" points="642.3,197.4 641.2,314.7"/><polyline fill="none" stroke="#C02828" stroke-width="1.3" points="650.6,197.0 650.6,393.7"/><polyline fill="none" stroke="#C02828" stroke-width="1.3" points="658.4,205.0 658.5,193.0"/><polyline fill="none" stroke="#C02828" stroke-width="1.3" points="666.0,393.6 664.7,420.5"/><polyline fill="none" stroke="#C02828" stroke-width="1.3" points="669.1,415.1 668.9,196.5"/><polyline fill="none" stroke="#C02828" stroke-width="1.3" points="682.6,415.3 683.5,376.4"/><polyline fill="none" stroke="#C02828" stroke-width="1.3" points="694.5,361.2 692.9,415.6"/><polyline fill="none" stroke="#C02828" stroke-width="1.3" points="701.7,248.4 699.2,231.7"/><polyline fill="none" stroke="#C02828" stroke-width="1.3" points="707.4,395.3 707.0,214.3"/><polyline fill="none" stroke="#C02828" stroke-width="1.3" points="715.7,406.6 713.3,197.4"/><polyline fill="none" stroke="#C02828" stroke-width="1.3" points="725.2,198.9 722.2,239.3"/><polyline fill="none" stroke="#C02828" stroke-width="1.3" points="728.1,236.1 728.4,227.8"/><polyline fill="none" stroke="#FF1414" stroke-width="1.5" points="106.0,368.2 106.8,415.7 107.5,391.7"/><polyline fill="none" stroke="#FF1414" stroke-width="1.5" points="115.4,278.5 116.1,393.8 117.0,286.1 117.8,376.9"/><polyline fill="none" stroke="#FF1414" stroke-width="1.5" points="123.8,270.4 124.6,337.7 125.6,263.9 126.1,344.9"/><polyline fill="none" stroke="#FF1414" stroke-width="1.5" points="131.0,239.4 131.7,420.6 132.4,240.8 133.4,417.5 134.0,233.4"/><polyline fill="none" stroke="#FF1414" stroke-width="1.5" points="160.1,184.5 161.0,355.9 161.8,185.1"/><polyline fill="none" stroke="#FF1414" stroke-width="1.5" points="169.5,206.9 170.1,399.1 170.9,195.7 171.8,404.0 172.5,202.4 173.3,380.9"/><polyline fill="none" stroke="#FF1414" stroke-width="1.5" points="173.3,191.8 174.1,404.7 174.9,189.3 175.5,415.6 176.1,192.1 177.0,400.4 177.6,196.6 178.2,408.4 178.8,206.0 179.6,398.7 180.5,191.6 181.0,396.4 181.5,195.0 182.3,412.2 183.1,208.2 183.9,405.1 184.7,186.5 185.3,420.1"/><polyline fill="none" stroke="#FF1414" stroke-width="1.5" points="223.4,186.9 224.2,373.4 225.2,187.5 225.9,368.4 226.8,186.9 227.6,391.9"/><polyline fill="none" stroke="#FF1414" stroke-width="1.5" points="228.1,199.3 228.8,421.1 229.5,196.0 230.0,405.5 231.0,186.5 231.5,419.2 232.1,190.7 233.0,420.5 234.0,194.4 234.5,409.2 235.2,186.4 236.1,420.9 237.0,186.4 237.7,413.4 238.7,188.1"/><polyline fill="none" stroke="#FF1414" stroke-width="1.5" points="283.2,196.2 284.0,356.7 284.9,205.5 285.9,367.3 286.6,213.1 287.5,354.2 288.4,207.7 288.9,370.9 289.4,213.1 290.2,362.5 291.0,195.7 291.9,367.0 292.7,195.8 293.3,372.4 294.2,196.7 295.2,370.5 295.9,207.3 296.7,374.0"/><polyline fill="none" stroke="#FF1414" stroke-width="1.5" points="341.1,188.3 342.1,415.5 342.7,188.5 343.7,410.3 344.4,194.0 345.0,420.0 345.9,192.4 346.9,416.0 347.4,187.2 348.1,419.6 348.7,194.4 349.6,416.8 350.4,189.8"/><polyline fill="none" stroke="#FF1414" stroke-width="1.5" points="389.6,215.7 390.5,404.1 391.0,214.2 391.8,389.5 392.7,217.7 393.7,388.6 394.3,212.5"/><polyline fill="none" stroke="#FF1414" stroke-width="1.5" points="394.3,246.5 394.9,376.0 395.8,246.3 396.4,356.7 397.0,223.9 397.7,360.9 398.6,248.7 399.2,358.5 400.1,223.9 400.8,377.6 401.4,223.8 402.1,380.0 403.1,224.9 404.0,375.7 404.5,229.4 405.4,377.1 406.4,223.9 407.3,380.3 407.8,223.9"/><polyline fill="none" stroke="#FF1414" stroke-width="1.5" points="415.0,196.3 415.5,393.5 416.5,209.0 417.1,393.1 418.1,187.1 418.9,384.2"/><polyline fill="none" stroke="#FF1414" stroke-width="1.5" points="451.0,186.3 451.9,421.0 452.5,186.3 453.0,400.2 454.0,203.0 454.6,420.9 455.2,192.4 455.9,410.1 456.4,193.4 457.1,396.7 458.0,190.6 458.8,416.8 459.4,201.0 460.2,417.0 461.1,191.0 461.7,412.7"/><polyline fill="none" stroke="#FF1414" stroke-width="1.5" points="504.2,186.3 504.9,420.6 505.8,211.1 506.8,397.0 507.5,209.1 508.1,399.4 508.6,189.3 509.2,419.2 510.1,186.8 511.1,419.3 511.8,188.8 512.4,399.2 513.2,206.3 514.1,414.0 515.0,189.5"/><polyline fill="none" stroke="#FF1414" stroke-width="1.5" points="568.4,204.1 569.0,394.4 569.9,193.1 570.8,398.0 571.7,186.3 572.3,376.8 573.2,188.9 573.9,378.6 574.7,198.3"/><polyline fill="none" stroke="#FF1414" stroke-width="1.5" points="611.0,193.1 611.9,396.1 612.4,198.3 613.4,376.3 614.2,194.6 615.1,397.8 615.7,208.3 616.4,391.3 617.0,188.9 617.9,385.3 618.6,196.7"/><polyline fill="none" stroke="#FF1414" stroke-width="1.5" points="623.5,218.4 624.4,396.1 625.1,211.9 625.9,398.4 626.6,226.3 627.2,379.6 627.8,212.2 628.7,398.6 629.2,212.8 630.0,396.5 630.6,235.1 631.1,398.9 631.8,235.5 632.7,398.2"/><polyline fill="none" stroke="#FF1414" stroke-width="1.5" points="668.9,196.5 669.7,398.6 670.3,198.0 671.2,396.8 671.9,186.3 672.6,416.7 673.3,198.5 673.9,407.3 674.9,193.2 675.8,420.0 676.3,201.3 677.1,413.2 677.8,209.5 678.6,404.4 679.3,188.4 679.9,417.9 680.8,188.0 681.4,420.2 681.9,199.3 682.6,415.3"/><polyline fill="none" stroke="#FF1414" stroke-width="1.5" points="722.2,239.3 722.9,384.3 723.5,225.4 724.3,397.0 725.2,224.8 725.8,375.4 726.6,236.4 727.3,390.6 728.1,236.1"/><polyline fill="none" stroke="#FF1414" stroke-width="1.5" points="728.4,227.8 728.9,405.4 729.5,229.4 730.4,384.7 731.2,217.7 732.0,393.8 732.6,219.3 733.5,404.6 734.0,223.2 734.8,388.5 735.7,216.1"/></g><polyline fill="none" stroke="#2AEA2A" stroke-width="1.6" points="96.0,559.5 96.5,559.5 97.0,559.5 97.5,559.5 98.0,559.5 98.5,559.5 99.0,559.5 99.5,559.5 100.0,559.5 100.5,559.5 101.0,559.5 101.5,559.5 102.0,559.5 102.5,559.5 103.0,559.5 103.5,559.5 104.0,559.5 104.5,559.5 105.0,559.5 105.5,559.5 106.0,559.5 106.5,559.5 107.0,559.5 107.5,559.5 108.0,559.5 108.5,559.5 109.0,559.5 109.5,559.5 110.0,559.5 110.5,559.5 111.0,559.5 111.5,559.5 112.0,559.5 112.5,559.5 113.0,559.5 113.5,559.5 114.0,559.5 114.5,559.5 115.0,558.5 115.5,560.7 115.9,558.4 116.4,560.8 116.8,558.2 117.3,560.4 117.7,558.6 118.2,560.9 118.6,558.4 119.1,560.5 119.5,558.0 120.0,560.7 120.4,558.1 120.9,560.7 121.3,558.2 121.8,560.5 122.2,558.2 122.7,560.9 123.1,558.3 123.6,560.8 124.0,558.2 124.5,560.4 124.9,558.1 125.4,560.8 125.8,558.4 126.3,560.4 126.7,558.1 127.2,560.7 127.6,558.2 128.1,560.9 128.5,558.2 129.0,561.0 129.4,558.4 129.9,560.9 130.0,558.4 132.9,558.4 133.4,560.3 134.9,560.3 135.2,558.0 137.2,558.0 137.6,560.5 139.7,560.5 140.0,559.5 140.5,559.4 141.0,559.2 141.5,558.9 142.0,558.5 142.5,558.0 143.0,557.5 143.5,557.1 144.0,556.8 144.5,556.6 145.0,556.5 145.5,556.6 146.0,556.8 146.5,557.1 147.0,557.5 147.5,558.0 148.0,558.5 148.5,558.9 149.0,559.2 149.5,559.4 150.0,558.8 152.3,558.8 152.7,560.5 155.1,560.5 155.7,558.6 158.7,558.6 157.0,559.5 157.5,559.1 158.0,558.1 158.5,556.9 159.0,555.9 159.5,555.5 160.0,555.9 160.5,556.9 161.0,558.1 161.5,559.1 162.0,557.2 162.4,562.8 162.9,556.0 163.3,562.9 163.8,556.6 164.2,562.6 164.7,557.1 165.1,562.8 165.6,556.6 166.0,562.0 166.5,557.3 166.9,562.8 167.4,556.0 167.8,561.7 168.3,556.3 168.7,562.2 169.2,557.2 169.6,562.0 170.1,556.3 170.5,562.8 171.0,557.3 171.4,562.5 171.9,557.3 172.3,562.6 172.8,556.9 173.2,562.8 173.7,556.0 174.1,562.3 174.6,556.0 175.0,562.0 175.5,557.3 175.9,562.4 176.0,558.5 177.6,558.5 177.9,561.1 179.4,561.1 179.6,557.6 181.4,557.6 182.0,561.4 183.8,561.4 183.0,556.3 183.4,562.9 183.9,556.1 184.3,562.8 184.8,556.1 185.2,563.4 185.7,556.3 186.1,562.6 186.6,555.9 187.0,562.3 187.5,556.6 187.9,563.5 188.4,556.3 188.8,562.8 189.3,557.1 189.7,562.6 190.2,556.2 190.6,561.9 191.1,556.1 191.5,562.9 192.0,557.0 192.4,562.9 192.9,556.4 193.3,563.0 193.8,556.5 194.2,563.0 194.7,555.9 195.1,561.9 195.6,557.0 196.0,563.0 196.5,555.6 196.9,562.3 197.0,559.5 197.5,559.2 198.0,558.2 198.5,557.0 199.0,555.8 199.5,554.8 200.0,554.5 200.5,554.8 201.0,555.8 201.5,557.0 202.0,558.2 202.5,559.2 203.0,559.5 203.5,559.6 204.0,560.0 204.5,560.5 205.0,561.2 205.5,562.0 206.0,562.8 206.5,563.5 207.0,564.0 207.5,564.4 208.0,564.5 208.5,564.4 209.0,564.0 209.5,563.5 210.0,562.8 210.5,562.0 211.0,561.2 211.5,560.5 212.0,560.0 212.5,559.6 213.0,559.5 213.5,558.8 214.0,557.0 214.5,555.2 215.0,554.5 215.5,555.2 216.0,557.0 216.5,558.8 217.0,555.6 217.4,563.7 217.9,555.9 218.3,563.2 218.8,555.9 219.2,563.2 219.7,555.3 220.1,563.1 220.6,555.7 221.0,564.0 221.5,556.4 221.9,563.6 222.4,555.0 222.8,563.1 223.3,556.1 223.7,564.1 224.2,556.0 224.6,562.9 225.1,555.6 225.5,563.9 226.0,556.3 226.4,563.1 226.9,555.8 227.3,564.2 227.8,555.6 228.2,564.2 228.7,556.2 229.1,563.2 229.6,555.2 230.0,564.3 230.5,555.6 230.9,563.0 231.4,556.3 231.8,563.6 232.3,556.1 232.7,564.1 233.0,554.0 234.5,554.0 234.8,564.0 237.2,564.0 237.7,555.5 239.2,555.5 239.5,564.0 241.2,564.0 241.5,555.2 243.5,555.2 243.8,564.3 245.3,564.3 245.0,551.7 247.8,551.7 248.4,563.8 251.3,563.8 251.9,554.6 254.4,554.6 253.0,559.5 253.5,558.9 254.0,557.2 254.5,555.0 255.0,552.8 255.5,551.1 256.0,550.5 256.5,550.7 257.0,551.2 257.5,552.1 258.0,553.2 258.5,554.6 259.0,556.0 259.5,557.4 260.0,558.8 260.5,559.9 261.0,560.8 261.5,561.3 262.0,561.5 262.5,561.1 263.0,559.9 263.5,558.1 264.0,556.0 264.5,553.9 265.0,552.1 265.5,550.9 266.0,550.5 266.5,550.8 267.0,551.8 267.5,553.3 268.0,555.0 268.5,556.7 269.0,558.2 269.5,559.2 270.0,551.2 272.1,551.2 272.4,566.2 274.1,566.2 274.3,551.6 276.0,551.6 276.5,564.7 279.4,564.7 279.8,549.9 282.6,549.9 283.2,567.4 284.4,567.4 284.9,553.6 286.7,553.6 286.0,550.6 286.4,567.9 286.9,548.8 287.3,568.8 287.8,551.4 288.2,567.2 288.7,549.1 289.1,568.2 289.6,549.5 290.0,567.6 290.5,552.0 290.9,568.5 291.4,549.3 291.8,566.9 292.3,549.4 292.7,570.2 293.2,549.4 293.6,569.7 294.1,552.9 294.5,568.9 295.0,549.1 295.4,566.3 295.9,551.7 296.3,567.3 296.8,550.6 297.2,568.0 297.7,550.8 298.1,569.5 298.6,552.9 299.0,566.3 299.5,552.3 299.9,566.6 300.0,552.6 303.0,552.6 303.5,566.0 305.6,566.0 305.9,551.0 307.8,551.0 308.0,559.5 308.5,559.1 309.0,558.0 309.5,556.5 310.0,555.0 310.5,553.9 311.0,553.5 311.5,554.9 312.0,558.8 312.5,564.0 313.0,569.2 313.5,573.1 314.0,574.5 314.5,573.7 315.0,571.6 315.5,568.3 316.0,564.5 316.5,560.7 317.0,557.4 317.5,555.3 318.0,554.5 318.5,555.4 319.0,558.0 319.5,561.9 320.0,566.5 320.5,571.1 321.0,575.0 321.5,577.6 322.0,545.2 323.8,545.2 324.1,574.1 325.5,574.1 326.0,544.1 327.9,544.1 328.1,572.5 330.0,572.5 330.4,543.5 332.3,543.5 332.8,577.4 334.8,577.4 335.1,546.0 337.6,546.0 338.0,578.1 340.0,578.1 340.3,545.7 342.7,545.7 341.0,548.0 341.4,570.3 341.9,545.2 342.3,573.1 342.8,548.3 343.2,572.9 343.7,545.8 344.1,569.4 344.6,547.7 345.0,568.6 345.5,545.6 345.9,571.6 346.4,545.2 346.8,572.3 347.3,546.5 347.7,572.0 348.2,547.1 348.6,568.5 349.1,547.0 349.5,567.9 350.0,549.6 350.4,572.2 350.9,550.2 351.0,544.2 352.4,544.2 352.9,576.0 354.2,576.0 354.7,543.8 357.4,543.8 357.9,585.2 360.8,585.2 361.2,534.3 362.5,534.3 362.0,569.5 362.5,567.7 363.0,562.8 363.5,555.3 364.0,546.5 364.5,537.7 365.0,530.2 365.5,525.3 366.0,523.5 366.5,523.6 367.0,523.9 367.5,524.4 368.0,525.0 368.5,525.6 369.0,526.1 369.5,526.4 370.0,526.5 370.5,526.2 371.0,525.3 371.5,524.0 372.0,522.5 372.5,521.0 373.0,519.7 373.5,518.8 374.0,518.5 374.5,521.8 375.0,531.1 375.5,545.0 376.0,561.5 376.5,578.0 377.0,591.9 377.5,601.2 378.0,527.8 380.5,527.8 380.7,598.9 383.6,598.9 383.8,531.7 386.1,531.7 386.6,587.4 388.1,587.4 388.4,525.6 391.0,525.6 391.3,590.3 393.2,590.3 393.0,529.7 394.3,529.7 394.7,611.8 396.7,611.8 395.0,522.3 395.4,613.0 395.9,509.0 396.3,612.5 396.8,514.3 397.2,607.9 397.7,511.5 398.1,618.0 398.6,522.6 399.0,598.4 399.5,509.1 399.9,618.5 400.4,514.3 400.8,606.9 401.3,509.8 401.7,600.6 402.2,519.9 402.6,601.0 403.1,512.8 403.5,603.8 404.0,520.7 404.4,613.0 404.9,504.5 405.0,519.3 407.5,519.3 407.8,617.0 410.1,617.0 410.0,518.7 411.2,518.7 411.6,607.2 413.1,607.2 413.5,515.2 416.1,515.2 416.3,628.2 418.4,628.2 417.0,513.3 419.7,513.3 420.2,598.4 422.3,598.4 422.0,499.5 422.5,502.4 423.0,510.5 423.5,522.6 424.0,537.0 424.5,551.4 425.0,563.5 425.5,571.6 426.0,574.5 426.5,571.8 427.0,564.2 427.5,552.9 428.0,539.5 428.5,526.1 429.0,514.8 429.5,507.2 430.0,508.4 431.9,508.4 432.4,613.4 434.5,613.4 434.7,525.5 437.2,525.5 437.0,512.5 439.7,512.5 440.0,592.2 441.7,592.2 442.0,518.6 444.7,518.6 445.3,594.0 448.0,594.0 447.0,527.2 447.4,595.2 447.9,532.9 448.3,585.0 448.8,520.3 449.2,588.2 449.7,528.3 450.1,592.8 450.6,523.0 451.0,583.6 451.5,528.7 451.9,590.5 452.4,526.1 452.8,586.9 453.3,524.5 453.7,598.8 454.2,527.7 454.6,592.2 455.1,532.3 455.5,587.9 456.0,523.1 456.4,585.3 456.9,519.4 457.3,598.0 457.8,532.7 458.2,598.6 458.7,528.0 459.1,595.9 459.6,521.6 460.0,588.2 460.5,522.9 460.9,594.0 461.4,520.8 461.8,587.7 462.3,521.6 462.7,598.9 463.0,532.7 465.2,532.7 465.4,583.4 467.2,583.4 467.7,532.6 470.0,532.6 470.2,585.8 472.6,585.8 472.8,529.3 475.2,529.3 475.0,559.5 475.5,557.6 476.0,552.5 476.5,545.5 477.0,538.5 477.5,533.4 478.0,531.5 478.5,531.5 479.0,531.5 479.5,531.5 480.0,531.5 480.5,531.5 481.0,531.5 481.5,531.5 482.0,531.5 482.5,531.5 483.0,531.5 483.5,531.5 484.0,531.5 484.5,531.5 485.0,531.5 485.5,532.8 486.0,536.6 486.5,542.4 487.0,549.8 487.5,558.0 488.0,566.2 488.5,573.6 489.0,579.4 489.5,583.2 490.0,534.4 491.5,534.4 491.8,581.0 494.1,581.0 494.5,538.1 496.5,538.1 496.8,574.2 498.2,574.2 498.6,536.7 500.8,536.7 501.3,576.5 503.0,576.5 503.3,535.2 504.6,535.2 505.0,544.1 505.4,577.7 505.9,543.2 506.3,574.2 506.8,542.8 507.2,575.8 507.7,539.5 508.1,574.3 508.6,538.8 509.0,572.4 509.5,543.9 509.9,572.3 510.4,545.3 510.8,577.7 511.3,539.9 511.7,573.0 512.2,544.6 512.6,574.8 513.1,539.8 513.5,578.0 514.0,539.7 514.5,576.2 514.9,545.0 515.4,574.7 515.8,544.6 516.3,575.7 516.7,541.3 517.2,573.1 517.6,544.1 518.1,577.8 518.5,546.0 519.0,577.9 519.4,538.5 519.9,579.1 520.0,545.7 522.2,545.7 522.6,575.0 525.6,575.0 526.1,546.5 528.8,546.5 529.2,574.7 531.7,574.7 530.0,559.5 530.5,559.8 531.0,560.7 531.5,562.1 532.0,564.0 532.5,566.2 533.0,568.5 533.5,570.8 534.0,573.0 534.5,574.9 535.0,576.3 535.5,577.2 536.0,577.5 536.5,577.1 537.0,575.8 537.5,573.7 538.0,570.9 538.5,567.6 539.0,563.9 539.5,560.0 540.0,556.1 540.5,552.4 541.0,549.1 541.5,546.3 542.0,544.2 542.5,542.9 543.0,542.5 543.5,542.9 544.0,544.1 544.5,546.0 545.0,548.4 545.5,551.0 546.0,553.6 546.5,556.0 547.0,557.9 547.5,559.1 548.0,546.2 550.4,546.2 550.8,571.7 552.8,571.7 553.1,548.0 554.4,548.0 554.8,572.7 556.8,572.7 557.2,544.8 560.0,544.8 560.2,573.8 562.6,573.8 562.8,549.3 564.4,549.3 564.6,571.8 567.5,571.8 565.0,543.4 565.5,573.5 565.9,548.4 566.4,574.6 566.8,545.2 567.3,575.0 567.7,544.4 568.2,573.8 568.6,547.0 569.1,574.3 569.5,543.0 570.0,574.6 570.4,546.3 570.9,573.9 571.3,546.0 571.8,569.8 572.2,549.0 572.7,569.6 573.1,547.9 573.6,570.1 574.0,548.3 576.5,548.3 576.9,568.7 579.2,568.7 579.6,548.5 582.1,548.5 582.5,567.2 585.3,567.2 585.8,549.2 587.7,549.2 587.0,559.5 587.5,559.9 588.0,561.1 588.5,562.9 589.0,565.0 589.5,567.1 590.0,568.9 590.5,570.1 591.0,570.5 591.5,570.0 592.0,568.5 592.5,566.5 593.0,564.5 593.5,563.0 594.0,562.5 594.5,563.0 595.0,564.5 595.5,566.5 596.0,568.5 596.5,570.0 597.0,570.5 597.5,569.8 598.0,567.8 598.5,565.0 599.0,562.2 599.5,560.2 600.0,549.9 601.6,549.9 601.8,566.8 604.4,566.8 604.7,550.7 606.2,550.7 606.5,566.5 608.4,566.5 608.7,553.3 610.1,553.3 610.4,568.4 611.7,568.4 611.9,550.8 613.8,550.8 614.3,565.8 616.2,565.8 615.0,552.2 615.5,572.3 615.9,551.2 616.4,567.8 616.8,550.0 617.3,568.2 617.7,549.3 618.2,569.1 618.6,551.7 619.1,567.6 619.5,548.8 620.0,568.7 620.4,548.5 620.9,569.7 621.3,547.8 621.8,568.9 622.2,551.1 622.7,568.7 623.1,548.4 623.6,570.6 624.0,550.6 624.5,567.8 624.9,549.0 625.0,549.7 627.3,549.7 627.5,565.2 628.8,565.2 629.1,554.3 630.4,554.3 630.9,570.0 632.4,570.0 633.0,552.1 635.7,552.1 636.2,570.2 637.5,570.2 637.8,551.5 640.7,551.5 640.0,559.5 640.5,559.8 641.0,560.6 641.5,561.8 642.0,563.3 642.5,565.0 643.0,566.7 643.5,568.2 644.0,569.4 644.5,570.2 645.0,570.5 645.5,570.2 646.0,569.4 646.5,568.2 647.0,566.7 647.5,565.0 648.0,563.3 648.5,561.8 649.0,560.6 649.5,559.8 650.0,553.0 652.7,553.0 653.0,566.4 654.8,566.4 655.2,549.9 656.8,549.9 657.3,568.2 660.0,568.2 660.4,549.9 662.2,549.9 662.0,552.6 662.5,568.6 662.9,551.6 663.4,566.6 663.8,552.8 664.3,568.4 664.7,551.1 665.2,568.3 665.6,552.0 666.1,567.4 666.5,552.9 667.0,568.3 667.4,553.4 667.9,567.4 668.3,550.5 668.8,568.2 669.2,553.1 669.7,566.4 670.1,550.1 670.6,568.1 671.0,550.0 671.5,569.0 671.9,551.7 672.4,569.1 672.8,550.6 673.3,566.8 673.7,552.0 674.2,565.8 674.6,551.9 675.1,569.3 675.5,553.1 676.0,567.8 676.4,553.1 676.9,565.8 677.3,550.9 677.8,566.5 678.2,553.3 678.7,566.1 679.1,550.9 679.6,567.8 680.0,554.4 681.6,554.4 682.2,565.6 684.4,565.6 684.8,550.6 687.1,550.6 687.6,567.2 689.1,567.2 689.4,554.1 692.1,554.1 692.0,559.5 692.5,559.2 693.0,558.3 693.5,557.0 694.0,555.5 694.5,554.0 695.0,552.7 695.5,551.8 696.0,551.5 696.5,551.5 697.0,551.5 697.5,551.5 698.0,551.5 698.5,551.5 699.0,551.5 699.5,551.5 700.0,551.5 700.5,551.5 701.0,551.5 701.5,551.5 702.0,551.5 702.5,551.5 703.0,551.5 703.5,551.5 704.0,551.5 704.5,551.5 705.0,551.5 705.5,551.5 706.0,551.5 706.5,551.8 707.0,552.7 707.5,554.0 708.0,555.5 708.5,557.0 709.0,558.3 709.5,559.2 710.0,554.9 712.9,554.9 713.2,568.0 714.6,568.0 715.0,554.0 717.7,554.0 718.1,566.9 720.7,566.9 721.2,553.4 723.5,553.4 723.9,564.5 726.6,564.5 725.0,552.1 725.5,565.6 725.9,553.0 726.4,566.6 726.8,552.4 727.3,565.2 727.7,553.6 728.2,566.6 728.6,554.5 729.1,566.9 729.5,552.3 730.0,566.4 730.4,552.6 730.9,567.1 731.3,554.0 731.8,566.2 732.2,551.5 732.7,566.1 733.1,553.3 733.6,565.2 734.0,554.0 734.5,565.5 734.9,551.7 735.4,567.5 735.8,551.9 736.0,559.5"/><rect x="96.5" y="182.5" width="640" height="242" fill="none" stroke="#BEBEBE" stroke-width="1.6"/><rect x="96.5" y="437.5" width="640" height="242" fill="none" stroke="#BEBEBE" stroke-width="1.6"/><text x="86" y="189" font-family="'Liberation Sans',sans-serif" font-size="15" fill="#D02828" text-anchor="end" font-weight="normal" textLength="15" lengthAdjust="spacingAndGlyphs" >1V</text><text x="86" y="249.5" font-family="'Liberation Sans',sans-serif" font-size="15" fill="#D02828" text-anchor="end" font-weight="normal" textLength="40" lengthAdjust="spacingAndGlyphs" >500mV</text><text x="86" y="310" font-family="'Liberation Sans',sans-serif" font-size="15" fill="#D02828" text-anchor="end" font-weight="normal" textLength="15" lengthAdjust="spacingAndGlyphs" >0V</text><text x="86" y="370.5" font-family="'Liberation Sans',sans-serif" font-size="15" fill="#D02828" text-anchor="end" font-weight="normal" textLength="44" lengthAdjust="spacingAndGlyphs" >-500mV</text><text x="86" y="429" font-family="'Liberation Sans',sans-serif" font-size="15" fill="#D02828" text-anchor="end" font-weight="normal" textLength="18" lengthAdjust="spacingAndGlyphs" >-1V</text><text x="86" y="443" font-family="'Liberation Sans',sans-serif" font-size="15" fill="#28D028" text-anchor="end" font-weight="normal" textLength="22" lengthAdjust="spacingAndGlyphs" >20V</text><text x="86" y="503.5" font-family="'Liberation Sans',sans-serif" font-size="15" fill="#28D028" text-anchor="end" font-weight="normal" textLength="22" lengthAdjust="spacingAndGlyphs" >10V</text><text x="86" y="564" font-family="'Liberation Sans',sans-serif" font-size="15" fill="#28D028" text-anchor="end" font-weight="normal" textLength="15" lengthAdjust="spacingAndGlyphs" >0V</text><text x="86" y="625" font-family="'Liberation Sans',sans-serif" font-size="15" fill="#28D028" text-anchor="end" font-weight="normal" textLength="26" lengthAdjust="spacingAndGlyphs" >-10V</text><text x="86" y="685" font-family="'Liberation Sans',sans-serif" font-size="15" fill="#28D028" text-anchor="end" font-weight="normal" textLength="26" lengthAdjust="spacingAndGlyphs" >-20V</text><text transform="translate(36,304) rotate(-90)" font-family="'Liberation Sans',sans-serif" font-size="15" fill="#D02828" text-anchor="middle" textLength="52" lengthAdjust="spacingAndGlyphs">V1(UN6)</text><text transform="translate(53,559) rotate(-90)" font-family="'Liberation Sans',sans-serif" font-size="15" fill="#28D028" text-anchor="middle" textLength="52" lengthAdjust="spacingAndGlyphs">V2(UN5)</text><text x="98.5" y="698.5" font-family="'Liberation Sans',sans-serif" font-size="14.5" fill="#D4D4D4" text-anchor="middle" font-weight="normal" textLength="13" lengthAdjust="spacingAndGlyphs" >0s</text><text x="225" y="698.5" font-family="'Liberation Sans',sans-serif" font-size="14.5" fill="#D4D4D4" text-anchor="middle" font-weight="normal" textLength="38" lengthAdjust="spacingAndGlyphs" >200ms</text><text x="353" y="698.5" font-family="'Liberation Sans',sans-serif" font-size="14.5" fill="#D4D4D4" text-anchor="middle" font-weight="normal" textLength="38" lengthAdjust="spacingAndGlyphs" >400ms</text><text x="481" y="698.5" font-family="'Liberation Sans',sans-serif" font-size="14.5" fill="#D4D4D4" text-anchor="middle" font-weight="normal" textLength="38" lengthAdjust="spacingAndGlyphs" >600ms</text><text x="609" y="698.5" font-family="'Liberation Sans',sans-serif" font-size="14.5" fill="#D4D4D4" text-anchor="middle" font-weight="normal" textLength="38" lengthAdjust="spacingAndGlyphs" >800ms</text><text x="735" y="698.5" font-family="'Liberation Sans',sans-serif" font-size="14.5" fill="#D4D4D4" text-anchor="middle" font-weight="normal" textLength="12" lengthAdjust="spacingAndGlyphs" >1s</text><text x="416.5" y="721" font-family="'Liberation Sans',sans-serif" font-size="15" fill="#D4D4D4" text-anchor="middle" font-weight="normal" textLength="27" lengthAdjust="spacingAndGlyphs" >Time</text><line x1="883" y1="197.6" x2="1535" y2="197.6" stroke="#C8C8C8" stroke-width="1" stroke-dasharray="1.3,2.7"/><line x1="883" y1="210" x2="1535" y2="210" stroke="#C8C8C8" stroke-width="1" stroke-dasharray="1.3,2.7"/><line x1="883" y1="222.2" x2="1535" y2="222.2" stroke="#C8C8C8" stroke-width="1" stroke-dasharray="1.3,2.7"/><line x1="883" y1="234.5" x2="1535" y2="234.5" stroke="#C8C8C8" stroke-width="1" stroke-dasharray="1.3,2.7"/><line x1="883" y1="246.7" x2="1535" y2="246.7" stroke="#C8C8C8" stroke-width="1" stroke-dasharray="1.3,2.7"/><line x1="883" y1="259.1" x2="1535" y2="259.1" stroke="#C8C8C8" stroke-width="1" stroke-dasharray="1.3,2.7"/><line x1="992" y1="183" x2="992" y2="272.5" stroke="#C8C8C8" stroke-width="1" stroke-dasharray="1.3,2.7"/><line x1="1100.5" y1="183" x2="1100.5" y2="272.5" stroke="#C8C8C8" stroke-width="1" stroke-dasharray="1.3,2.7"/><line x1="1209" y1="183" x2="1209" y2="272.5" stroke="#C8C8C8" stroke-width="1" stroke-dasharray="1.3,2.7"/><line x1="1317.5" y1="183" x2="1317.5" y2="272.5" stroke="#C8C8C8" stroke-width="1" stroke-dasharray="1.3,2.7"/><line x1="1426" y1="183" x2="1426" y2="272.5" stroke="#C8C8C8" stroke-width="1" stroke-dasharray="1.3,2.7"/><line x1="883" y1="307.6" x2="1535" y2="307.6" stroke="#C8C8C8" stroke-width="1" stroke-dasharray="1.3,2.7"/><line x1="883" y1="330" x2="1535" y2="330" stroke="#C8C8C8" stroke-width="1" stroke-dasharray="1.3,2.7"/><line x1="883" y1="352.4" x2="1535" y2="352.4" stroke="#C8C8C8" stroke-width="1" stroke-dasharray="1.3,2.7"/><line x1="992" y1="285" x2="992" y2="375" stroke="#C8C8C8" stroke-width="1" stroke-dasharray="1.3,2.7"/><line x1="1100.5" y1="285" x2="1100.5" y2="375" stroke="#C8C8C8" stroke-width="1" stroke-dasharray="1.3,2.7"/><line x1="1209" y1="285" x2="1209" y2="375" stroke="#C8C8C8" stroke-width="1" stroke-dasharray="1.3,2.7"/><line x1="1317.5" y1="285" x2="1317.5" y2="375" stroke="#C8C8C8" stroke-width="1" stroke-dasharray="1.3,2.7"/><line x1="1426" y1="285" x2="1426" y2="375" stroke="#C8C8C8" stroke-width="1" stroke-dasharray="1.3,2.7"/><line x1="883" y1="406.3" x2="1535" y2="406.3" stroke="#C8C8C8" stroke-width="1" stroke-dasharray="1.3,2.7"/><line x1="883" y1="423.6" x2="1535" y2="423.6" stroke="#C8C8C8" stroke-width="1" stroke-dasharray="1.3,2.7"/><line x1="883" y1="441" x2="1535" y2="441" stroke="#C8C8C8" stroke-width="1" stroke-dasharray="1.3,2.7"/><line x1="883" y1="458.4" x2="1535" y2="458.4" stroke="#C8C8C8" stroke-width="1" stroke-dasharray="1.3,2.7"/><line x1="992" y1="387.5" x2="992" y2="477" stroke="#C8C8C8" stroke-width="1" stroke-dasharray="1.3,2.7"/><line x1="1100.5" y1="387.5" x2="1100.5" y2="477" stroke="#C8C8C8" stroke-width="1" stroke-dasharray="1.3,2.7"/><line x1="1209" y1="387.5" x2="1209" y2="477" stroke="#C8C8C8" stroke-width="1" stroke-dasharray="1.3,2.7"/><line x1="1317.5" y1="387.5" x2="1317.5" y2="477" stroke="#C8C8C8" stroke-width="1" stroke-dasharray="1.3,2.7"/><line x1="1426" y1="387.5" x2="1426" y2="477" stroke="#C8C8C8" stroke-width="1" stroke-dasharray="1.3,2.7"/><line x1="883" y1="512.7" x2="1535" y2="512.7" stroke="#C8C8C8" stroke-width="1" stroke-dasharray="1.3,2.7"/><line x1="883" y1="534.9" x2="1535" y2="534.9" stroke="#C8C8C8" stroke-width="1" stroke-dasharray="1.3,2.7"/><line x1="883" y1="557.1" x2="1535" y2="557.1" stroke="#C8C8C8" stroke-width="1" stroke-dasharray="1.3,2.7"/><line x1="992" y1="489.5" x2="992" y2="579" stroke="#C8C8C8" stroke-width="1" stroke-dasharray="1.3,2.7"/><line x1="1100.5" y1="489.5" x2="1100.5" y2="579" stroke="#C8C8C8" stroke-width="1" stroke-dasharray="1.3,2.7"/><line x1="1209" y1="489.5" x2="1209" y2="579" stroke="#C8C8C8" stroke-width="1" stroke-dasharray="1.3,2.7"/><line x1="1317.5" y1="489.5" x2="1317.5" y2="579" stroke="#C8C8C8" stroke-width="1" stroke-dasharray="1.3,2.7"/><line x1="1426" y1="489.5" x2="1426" y2="579" stroke="#C8C8C8" stroke-width="1" stroke-dasharray="1.3,2.7"/><line x1="883" y1="614.6" x2="1535" y2="614.6" stroke="#C8C8C8" stroke-width="1" stroke-dasharray="1.3,2.7"/><line x1="883" y1="637" x2="1535" y2="637" stroke="#C8C8C8" stroke-width="1" stroke-dasharray="1.3,2.7"/><line x1="883" y1="659.3" x2="1535" y2="659.3" stroke="#C8C8C8" stroke-width="1" stroke-dasharray="1.3,2.7"/><line x1="992" y1="591.5" x2="992" y2="681" stroke="#C8C8C8" stroke-width="1" stroke-dasharray="1.3,2.7"/><line x1="1100.5" y1="591.5" x2="1100.5" y2="681" stroke="#C8C8C8" stroke-width="1" stroke-dasharray="1.3,2.7"/><line x1="1209" y1="591.5" x2="1209" y2="681" stroke="#C8C8C8" stroke-width="1" stroke-dasharray="1.3,2.7"/><line x1="1317.5" y1="591.5" x2="1317.5" y2="681" stroke="#C8C8C8" stroke-width="1" stroke-dasharray="1.3,2.7"/><line x1="1426" y1="591.5" x2="1426" y2="681" stroke="#C8C8C8" stroke-width="1" stroke-dasharray="1.3,2.7"/><polyline fill="none" stroke="#D02828" stroke-width="1.6" stroke-linejoin="round" points="883.5,271.5 884.0,271.5 884.5,271.5 885.0,271.5 885.5,271.5 886.0,271.5 886.5,271.5 887.0,271.5 887.5,271.5 888.0,271.5 888.5,271.5 889.0,271.5 889.5,271.5 890.0,271.5 890.5,271.5 891.0,271.5 891.5,271.5 892.0,271.5 892.5,271.5 893.0,271.5 893.5,271.5 894.0,271.5 894.5,271.5 895.0,271.5 895.5,271.5 896.0,271.5 896.5,271.5 897.0,271.5 897.5,271.5 898.0,271.5 898.5,271.5 899.0,271.5 899.5,271.5 900.0,271.5 900.5,271.5 901.0,271.5 901.5,271.5 902.0,271.5 902.5,271.5 903.0,271.5 903.5,271.5 904.0,271.5 904.5,271.5 905.0,271.5 905.5,271.5 906.0,271.5 906.5,271.5 907.0,271.5 907.5,271.5 908.0,271.5 908.5,271.5 909.0,271.5 909.5,271.5 910.0,271.5 910.5,271.5 911.0,271.5 911.5,271.5 912.0,271.5 912.5,271.5 913.0,271.5 913.5,271.5 914.0,271.5 914.5,271.5 915.0,271.5 915.5,271.5 916.0,271.5 916.5,271.5 917.0,271.5 917.5,271.5 918.0,271.5 918.5,271.5 919.0,271.5 919.5,271.5 920.0,271.5 920.5,271.5 921.0,271.5 921.5,271.5 922.0,271.5 922.5,271.5 923.0,271.5 923.5,271.5 924.0,271.5 924.5,271.5 925.0,271.5 925.5,271.5 926.0,271.5 926.5,271.5 927.0,271.5 927.5,271.5 928.0,271.5 928.5,271.4 929.0,271.4 929.5,271.4 930.0,271.4 930.5,271.4 931.0,271.4 931.5,271.4 932.0,271.4 932.5,271.4 933.0,271.4 933.5,271.4 934.0,271.4 934.5,271.4 935.0,271.4 935.5,271.4 936.0,271.4 936.5,271.4 937.0,271.4 937.5,271.4 938.0,271.4 938.5,271.4 939.0,271.4 939.5,271.4 940.0,271.4 940.5,271.4 941.0,271.4 941.5,271.4 942.0,271.4 942.5,271.4 943.0,271.4 943.5,271.4 944.0,271.4 944.5,271.4 945.0,271.4 945.5,271.4 946.0,271.4 946.5,271.4 947.0,271.4 947.5,271.4 948.0,271.4 948.5,271.4 949.0,271.4 949.5,271.4 950.0,271.4 950.5,271.4 951.0,271.4 951.5,271.4 952.0,271.4 952.5,271.4 953.0,271.4 953.5,271.4 954.0,271.4 954.5,271.4 955.0,271.4 955.5,271.4 956.0,271.4 956.5,271.4 957.0,271.4 957.5,271.4 958.0,271.4 958.5,271.3 959.0,271.3 959.5,271.3 960.0,271.3 960.5,271.3 961.0,271.3 961.5,271.3 962.0,271.3 962.5,271.3 963.0,271.3 963.5,271.3 964.0,271.3 964.5,271.3 965.0,271.3 965.5,271.3 966.0,271.3 966.5,271.3 967.0,271.3 967.5,271.3 968.0,271.3 968.5,271.3 969.0,271.3 969.5,271.3 970.0,271.3 970.5,271.3 971.0,271.3 971.5,271.3 972.0,271.3 972.5,271.3 973.0,271.3 973.5,271.3 974.0,271.3 974.5,271.3 975.0,271.3 975.5,271.3 976.0,271.3 976.5,271.3 977.0,271.3 977.5,271.2 978.0,271.2 978.5,271.2 979.0,271.2 979.5,271.2 980.0,271.2 980.5,271.2 981.0,271.2 981.5,271.2 982.0,271.2 982.5,271.2 983.0,271.2 983.5,271.2 984.0,271.2 984.5,271.2 985.0,271.2 985.5,271.2 986.0,271.2 986.5,271.2 987.0,271.2 987.5,271.2 988.0,271.2 988.5,271.2 989.0,271.2 989.5,271.2 990.0,271.2 990.5,271.2 991.0,271.2 991.5,271.1 992.0,271.1 992.5,271.1 993.0,271.1 993.5,271.1 994.0,271.1 994.5,271.1 995.0,271.1 995.5,271.1 996.0,271.1 996.5,271.1 997.0,271.1 997.5,271.1 998.0,271.1 998.5,271.1 999.0,271.1 999.5,271.1 1000.0,271.1 1000.5,271.1 1001.0,271.1 1001.5,271.1 1002.0,271.1 1002.5,271.0 1003.0,271.0 1003.5,271.0 1004.0,271.0 1004.5,271.0 1005.0,271.0 1005.5,271.0 1006.0,271.0 1006.5,271.0 1007.0,271.0 1007.5,271.0 1008.0,271.0 1008.5,271.0 1009.0,271.0 1009.5,271.0 1010.0,271.0 1010.5,271.0 1011.0,271.0 1011.5,271.0 1012.0,270.9 1012.5,270.9 1013.0,270.9 1013.5,270.9 1014.0,270.9 1014.5,270.9 1015.0,270.9 1015.5,270.9 1016.0,270.9 1016.5,270.9 1017.0,270.9 1017.5,270.9 1018.0,270.9 1018.5,270.9 1019.0,270.9 1019.5,270.9 1020.0,270.8 1020.5,270.8 1021.0,270.8 1021.5,270.8 1022.0,270.8 1022.5,270.8 1023.0,270.8 1023.5,270.8 1024.0,270.8 1024.5,270.8 1025.0,270.8 1025.5,270.8 1026.0,270.8 1026.5,270.8 1027.0,270.7 1027.5,270.7 1028.0,270.7 1028.5,270.7 1029.0,270.7 1029.5,270.7 1030.0,270.7 1030.5,270.7 1031.0,270.7 1031.5,270.7 1032.0,270.7 1032.5,270.7 1033.0,270.7 1033.5,270.6 1034.0,270.6 1034.5,270.6 1035.0,270.6 1035.5,270.6 1036.0,270.6 1036.5,270.6 1037.0,270.6 1037.5,270.6 1038.0,270.6 1038.5,270.6 1039.0,270.5 1039.5,270.5 1040.0,270.5 1040.5,270.5 1041.0,270.5 1041.5,270.5 1042.0,270.5 1042.5,270.5 1043.0,270.5 1043.5,270.5 1044.0,270.4 1044.5,270.4 1045.0,270.4 1045.5,270.4 1046.0,270.4 1046.5,270.4 1047.0,270.4 1047.5,270.4 1048.0,270.4 1048.5,270.3 1049.0,270.3 1049.5,270.3 1050.0,270.3 1050.5,270.3 1051.0,270.3 1051.5,270.3 1052.0,270.3 1052.5,270.2 1053.0,270.2 1053.5,270.2 1054.0,270.2 1054.5,270.2 1055.0,270.2 1055.5,270.2 1056.0,270.2 1056.5,270.1 1057.0,270.1 1057.5,270.1 1058.0,270.1 1058.5,270.1 1059.0,270.1 1059.5,270.1 1060.0,270.0 1060.5,270.0 1061.0,270.0 1061.5,270.0 1062.0,270.0 1062.5,270.0 1063.0,270.0 1063.5,269.9 1064.0,269.9 1064.5,269.9 1065.0,269.9 1065.5,269.9 1066.0,269.9 1066.5,269.8 1067.0,269.8 1067.5,269.8 1068.0,269.8 1068.5,269.8 1069.0,269.7 1069.5,269.7 1070.0,269.7 1070.5,269.7 1071.0,269.7 1071.5,269.7 1072.0,269.6 1072.5,269.6 1073.0,269.6 1073.5,269.6 1074.0,269.6 1074.5,269.5 1075.0,269.5 1075.5,269.5 1076.0,269.5 1076.5,269.5 1077.0,269.4 1077.5,269.4 1078.0,269.4 1078.5,269.4 1079.0,269.3 1079.5,269.3 1080.0,269.3 1080.5,269.3 1081.0,269.3 1081.5,269.2 1082.0,269.2 1082.5,269.2 1083.0,269.2 1083.5,269.1 1084.0,269.1 1084.5,269.1 1085.0,269.1 1085.5,269.0 1086.0,269.0 1086.5,269.0 1087.0,269.0 1087.5,268.9 1088.0,268.9 1088.5,268.9 1089.0,268.8 1089.5,268.8 1090.0,268.8 1090.5,268.8 1091.0,268.7 1091.5,268.7 1092.0,268.7 1092.5,268.6 1093.0,268.6 1093.5,268.6 1094.0,268.5 1094.5,268.5 1095.0,268.5 1095.5,268.4 1096.0,268.4 1096.5,268.4 1097.0,268.3 1097.5,268.3 1098.0,268.3 1098.5,268.2 1099.0,268.2 1099.5,268.2 1100.0,268.1 1100.5,268.1 1101.0,268.0 1101.5,268.0 1102.0,268.0 1102.5,267.9 1103.0,267.9 1103.5,267.8 1104.0,267.8 1104.5,267.8 1105.0,267.7 1105.5,267.7 1106.0,267.6 1106.5,267.6 1107.0,267.5 1107.5,267.5 1108.0,267.4 1108.5,267.4 1109.0,267.3 1109.5,267.3 1110.0,267.2 1110.5,267.2 1111.0,267.1 1111.5,267.1 1112.0,267.0 1112.5,267.0 1113.0,266.9 1113.5,266.9 1114.0,266.8 1114.5,266.8 1115.0,266.7 1115.5,266.7 1116.0,266.6 1116.5,266.5 1117.0,266.5 1117.5,266.4 1118.0,266.4 1118.5,266.3 1119.0,266.2 1119.5,266.2 1120.0,266.1 1120.5,266.0 1121.0,266.0 1121.5,265.9 1122.0,265.8 1122.5,265.7 1123.0,265.7 1123.5,265.6 1124.0,265.5 1124.5,265.4 1125.0,265.4 1125.5,265.3 1126.0,265.2 1126.5,265.1 1127.0,265.0 1127.5,265.0 1128.0,264.9 1128.5,264.8 1129.0,264.7 1129.5,264.6 1130.0,264.5 1130.5,264.4 1131.0,264.3 1131.5,264.2 1132.0,264.1 1132.5,264.0 1133.0,263.9 1133.5,263.8 1134.0,263.7 1134.5,263.6 1135.0,263.5 1135.5,263.4 1136.0,263.3 1136.5,263.2 1137.0,263.1 1137.5,262.9 1138.0,262.8 1138.5,262.7 1139.0,262.6 1139.5,262.4 1140.0,262.3 1140.5,262.2 1141.0,262.1 1141.5,261.9 1142.0,261.8 1142.5,261.6 1143.0,261.5 1143.5,261.3 1144.0,261.2 1144.5,261.0 1145.0,260.9 1145.5,260.7 1146.0,260.6 1146.5,260.4 1147.0,260.2 1147.5,260.1 1148.0,259.9 1148.5,259.7 1149.0,259.5 1149.5,259.4 1150.0,259.2 1150.5,259.0 1151.0,258.8 1151.5,258.6 1152.0,258.4 1152.5,258.2 1153.0,258.0 1153.5,257.8 1154.0,257.5 1154.5,257.3 1155.0,257.1 1155.5,256.9 1156.0,256.6 1156.5,256.4 1157.0,256.1 1157.5,255.9 1158.0,255.6 1158.5,255.4 1159.0,255.1 1159.5,254.8 1160.0,254.5 1160.5,254.3 1161.0,254.0 1161.5,253.7 1162.0,253.4 1162.5,253.1 1163.0,252.8 1163.5,252.4 1164.0,252.1 1164.5,251.8 1165.0,251.4 1165.5,251.1 1166.0,250.7 1166.5,250.4 1167.0,250.0 1167.5,249.6 1168.0,249.2 1168.5,248.8 1169.0,248.4 1169.5,248.0 1170.0,247.6 1170.5,247.2 1171.0,246.7 1171.5,246.3 1172.0,245.8 1172.5,245.3 1173.0,244.9 1173.5,244.4 1174.0,243.9 1174.5,243.4 1175.0,242.9 1175.5,242.3 1176.0,241.8 1176.5,241.2 1177.0,240.7 1177.5,240.1 1178.0,239.5 1178.5,238.9 1179.0,238.3 1179.5,237.7 1180.0,237.1 1180.5,236.4 1181.0,235.8 1181.5,235.1 1182.0,234.4 1182.5,233.7 1183.0,233.0 1183.5,232.3 1184.0,231.6 1184.5,230.8 1185.0,230.1 1185.5,229.3 1186.0,228.6 1186.5,227.8 1187.0,227.0 1187.5,226.2 1188.0,225.3 1188.5,224.5 1189.0,223.7 1189.5,222.8 1190.0,222.0 1190.5,221.1 1191.0,220.2 1191.5,219.3 1192.0,218.5 1192.5,217.6 1193.0,216.7 1193.5,215.8 1194.0,214.9 1194.5,214.0 1195.0,213.0 1195.5,212.1 1196.0,211.2 1196.5,210.3 1197.0,209.4 1197.5,208.5 1198.0,207.7 1198.5,206.8 1199.0,205.9 1199.5,205.1 1200.0,204.2 1200.5,203.4 1201.0,202.6 1201.5,201.8 1202.0,201.0 1202.5,200.3 1203.0,199.6 1203.5,198.9 1204.0,198.2 1204.5,197.6 1205.0,197.0 1205.5,196.4 1206.0,195.9 1206.5,195.3 1207.0,194.9 1207.5,194.5 1208.0,194.1 1208.5,193.7 1209.0,193.4 1209.5,193.1 1210.0,192.9 1210.5,192.7 1211.0,192.6 1211.5,192.5 1212.0,192.5 1212.5,192.5 1213.0,192.5 1213.5,192.6 1214.0,192.7 1214.5,192.9 1215.0,193.1 1215.5,193.4 1216.0,193.7 1216.5,194.0 1217.0,194.4 1217.5,194.8 1218.0,195.2 1218.5,195.7 1219.0,196.2 1219.5,196.8 1220.0,197.3 1220.5,197.9 1221.0,198.6 1221.5,199.2 1222.0,199.9 1222.5,200.6 1223.0,201.3 1223.5,202.0 1224.0,202.7 1224.5,203.5 1225.0,204.2 1225.5,205.0 1226.0,205.8 1226.5,206.6 1227.0,207.4 1227.5,208.2 1228.0,209.0 1228.5,209.8 1229.0,210.7 1229.5,211.5 1230.0,212.3 1230.5,213.1 1231.0,213.9 1231.5,214.7 1232.0,215.5 1232.5,216.3 1233.0,217.1 1233.5,217.9 1234.0,218.7 1234.5,219.5 1235.0,220.3 1235.5,221.0 1236.0,221.8 1236.5,222.5 1237.0,223.3 1237.5,224.0 1238.0,224.7 1238.5,225.4 1239.0,226.1 1239.5,226.8 1240.0,227.5 1240.5,228.2 1241.0,228.8 1241.5,229.5 1242.0,230.1 1242.5,230.8 1243.0,231.4 1243.5,232.0 1244.0,232.6 1244.5,233.2 1245.0,233.8 1245.5,234.3 1246.0,234.9 1246.5,235.4 1247.0,236.0 1247.5,236.5 1248.0,237.0 1248.5,237.6 1249.0,238.1 1249.5,238.6 1250.0,239.0 1250.5,239.5 1251.0,240.0 1251.5,240.5 1252.0,240.9 1252.5,241.3 1253.0,241.8 1253.5,242.2 1254.0,242.6 1254.5,243.0 1255.0,243.4 1255.5,243.8 1256.0,244.2 1256.5,244.6 1257.0,245.0 1257.5,245.4 1258.0,245.7 1258.5,246.1 1259.0,246.4 1259.5,246.8 1260.0,247.1 1260.5,247.4 1261.0,247.8 1261.5,248.1 1262.0,248.4 1262.5,248.7 1263.0,249.0 1263.5,249.3 1264.0,249.6 1264.5,249.9 1265.0,250.1 1265.5,250.4 1266.0,250.7 1266.5,250.9 1267.0,251.2 1267.5,251.5 1268.0,251.7 1268.5,252.0 1269.0,252.2 1269.5,252.4 1270.0,252.7 1270.5,252.9 1271.0,253.1 1271.5,253.3 1272.0,253.6 1272.5,253.8 1273.0,254.0 1273.5,254.2 1274.0,254.4 1274.5,254.6 1275.0,254.8 1275.5,255.0 1276.0,255.2 1276.5,255.4 1277.0,255.5 1277.5,255.7 1278.0,255.9 1278.5,256.1 1279.0,256.2 1279.5,256.4 1280.0,256.6 1280.5,256.7 1281.0,256.9 1281.5,257.1 1282.0,257.2 1282.5,257.4 1283.0,257.5 1283.5,257.7 1284.0,257.8 1284.5,258.0 1285.0,258.1 1285.5,258.2 1286.0,258.4 1286.5,258.5 1287.0,258.6 1287.5,258.8 1288.0,258.9 1288.5,259.0 1289.0,259.2 1289.5,259.3 1290.0,259.4 1290.5,259.5 1291.0,259.6 1291.5,259.8 1292.0,259.9 1292.5,260.0 1293.0,260.1 1293.5,260.2 1294.0,260.3 1294.5,260.4 1295.0,260.5 1295.5,260.6 1296.0,260.7 1296.5,260.8 1297.0,260.9 1297.5,261.0 1298.0,261.1 1298.5,261.2 1299.0,261.3 1299.5,261.4 1300.0,261.5 1300.5,261.6 1301.0,261.7 1301.5,261.8 1302.0,261.8 1302.5,261.9 1303.0,262.0 1303.5,262.1 1304.0,262.2 1304.5,262.3 1305.0,262.3 1305.5,262.4 1306.0,262.5 1306.5,262.6 1307.0,262.6 1307.5,262.7 1308.0,262.8 1308.5,262.9 1309.0,262.9 1309.5,263.0 1310.0,263.1 1310.5,263.1 1311.0,263.2 1311.5,263.3 1312.0,263.3 1312.5,263.4 1313.0,263.5 1313.5,263.5 1314.0,263.6 1314.5,263.7 1315.0,263.7 1315.5,263.8 1316.0,263.9 1316.5,263.9 1317.0,264.0 1317.5,264.0 1318.0,264.1 1318.5,264.1 1319.0,264.2 1319.5,264.3 1320.0,264.3 1320.5,264.4 1321.0,264.4 1321.5,264.5 1322.0,264.5 1322.5,264.6 1323.0,264.6 1323.5,264.7 1324.0,264.7 1324.5,264.8 1325.0,264.8 1325.5,264.9 1326.0,264.9 1326.5,265.0 1327.0,265.0 1327.5,265.1 1328.0,265.1 1328.5,265.1 1329.0,265.2 1329.5,265.2 1330.0,265.3 1330.5,265.3 1331.0,265.4 1331.5,265.4 1332.0,265.4 1332.5,265.5 1333.0,265.5 1333.5,265.6 1334.0,265.6 1334.5,265.6 1335.0,265.7 1335.5,265.7 1336.0,265.8 1336.5,265.8 1337.0,265.8 1337.5,265.9 1338.0,265.9 1338.5,265.9 1339.0,266.0 1339.5,266.0 1340.0,266.1 1340.5,266.1 1341.0,266.1 1341.5,266.2 1342.0,266.2 1342.5,266.2 1343.0,266.3 1343.5,266.3 1344.0,266.3 1344.5,266.4 1345.0,266.4 1345.5,266.4 1346.0,266.5 1346.5,266.5 1347.0,266.5 1347.5,266.5 1348.0,266.6 1348.5,266.6 1349.0,266.6 1349.5,266.7 1350.0,266.7 1350.5,266.7 1351.0,266.7 1351.5,266.8 1352.0,266.8 1352.5,266.8 1353.0,266.9 1353.5,266.9 1354.0,266.9 1354.5,266.9 1355.0,267.0 1355.5,267.0 1356.0,267.0 1356.5,267.0 1357.0,267.1 1357.5,267.1 1358.0,267.1 1358.5,267.1 1359.0,267.2 1359.5,267.2 1360.0,267.2 1360.5,267.2 1361.0,267.3 1361.5,267.3 1362.0,267.3 1362.5,267.3 1363.0,267.4 1363.5,267.4 1364.0,267.4 1364.5,267.4 1365.0,267.4 1365.5,267.5 1366.0,267.5 1366.5,267.5 1367.0,267.5 1367.5,267.6 1368.0,267.6 1368.5,267.6 1369.0,267.6 1369.5,267.6 1370.0,267.7 1370.5,267.7 1371.0,267.7 1371.5,267.7 1372.0,267.7 1372.5,267.8 1373.0,267.8 1373.5,267.8 1374.0,267.8 1374.5,267.8 1375.0,267.8 1375.5,267.9 1376.0,267.9 1376.5,267.9 1377.0,267.9 1377.5,267.9 1378.0,268.0 1378.5,268.0 1379.0,268.0 1379.5,268.0 1380.0,268.0 1380.5,268.0 1381.0,268.1 1381.5,268.1 1382.0,268.1 1382.5,268.1 1383.0,268.1 1383.5,268.1 1384.0,268.2 1384.5,268.2 1385.0,268.2 1385.5,268.2 1386.0,268.2 1386.5,268.2 1387.0,268.3 1387.5,268.3 1388.0,268.3 1388.5,268.3 1389.0,268.3 1389.5,268.3 1390.0,268.3 1390.5,268.4 1391.0,268.4 1391.5,268.4 1392.0,268.4 1392.5,268.4 1393.0,268.4 1393.5,268.4 1394.0,268.5 1394.5,268.5 1395.0,268.5 1395.5,268.5 1396.0,268.5 1396.5,268.5 1397.0,268.5 1397.5,268.6 1398.0,268.6 1398.5,268.6 1399.0,268.6 1399.5,268.6 1400.0,268.6 1400.5,268.6 1401.0,268.6 1401.5,268.7 1402.0,268.7 1402.5,268.7 1403.0,268.7 1403.5,268.7 1404.0,268.7 1404.5,268.7 1405.0,268.7 1405.5,268.8 1406.0,268.8 1406.5,268.8 1407.0,268.8 1407.5,268.8 1408.0,268.8 1408.5,268.8 1409.0,268.8 1409.5,268.8 1410.0,268.9 1410.5,268.9 1411.0,268.9 1411.5,268.9 1412.0,268.9 1412.5,268.9 1413.0,268.9 1413.5,268.9 1414.0,268.9 1414.5,269.0 1415.0,269.0 1415.5,269.0 1416.0,269.0 1416.5,269.0 1417.0,269.0 1417.5,269.0 1418.0,269.0 1418.5,269.0 1419.0,269.0 1419.5,269.1 1420.0,269.1 1420.5,269.1 1421.0,269.1 1421.5,269.1 1422.0,269.1 1422.5,269.1 1423.0,269.1 1423.5,269.1 1424.0,269.1 1424.5,269.1 1425.0,269.2 1425.5,269.2 1426.0,269.2 1426.5,269.2 1427.0,269.2 1427.5,269.2 1428.0,269.2 1428.5,269.2 1429.0,269.2 1429.5,269.2 1430.0,269.2 1430.5,269.3 1431.0,269.3 1431.5,269.3 1432.0,269.3 1432.5,269.3 1433.0,269.3 1433.5,269.3 1434.0,269.3 1434.5,269.3 1435.0,269.3 1435.5,269.3 1436.0,269.3 1436.5,269.4 1437.0,269.4 1437.5,269.4 1438.0,269.4 1438.5,269.4 1439.0,269.4 1439.5,269.4 1440.0,269.4 1440.5,269.4 1441.0,269.4 1441.5,269.4 1442.0,269.4 1442.5,269.4 1443.0,269.5 1443.5,269.5 1444.0,269.5 1444.5,269.5 1445.0,269.5 1445.5,269.5 1446.0,269.5 1446.5,269.5 1447.0,269.5 1447.5,269.5 1448.0,269.5 1448.5,269.5 1449.0,269.5 1449.5,269.5 1450.0,269.5 1450.5,269.6 1451.0,269.6 1451.5,269.6 1452.0,269.6 1452.5,269.6 1453.0,269.6 1453.5,269.6 1454.0,269.6 1454.5,269.6 1455.0,269.6 1455.5,269.6 1456.0,269.6 1456.5,269.6 1457.0,269.6 1457.5,269.6 1458.0,269.7 1458.5,269.7 1459.0,269.7 1459.5,269.7 1460.0,269.7 1460.5,269.7 1461.0,269.7 1461.5,269.7 1462.0,269.7 1462.5,269.7 1463.0,269.7 1463.5,269.7 1464.0,269.7 1464.5,269.7 1465.0,269.7 1465.5,269.7 1466.0,269.7 1466.5,269.8 1467.0,269.8 1467.5,269.8 1468.0,269.8 1468.5,269.8 1469.0,269.8 1469.5,269.8 1470.0,269.8 1470.5,269.8 1471.0,269.8 1471.5,269.8 1472.0,269.8 1472.5,269.8 1473.0,269.8 1473.5,269.8 1474.0,269.8 1474.5,269.8 1475.0,269.8 1475.5,269.9 1476.0,269.9 1476.5,269.9 1477.0,269.9 1477.5,269.9 1478.0,269.9 1478.5,269.9 1479.0,269.9 1479.5,269.9 1480.0,269.9 1480.5,269.9 1481.0,269.9 1481.5,269.9 1482.0,269.9 1482.5,269.9 1483.0,269.9 1483.5,269.9 1484.0,269.9 1484.5,269.9 1485.0,269.9 1485.5,269.9 1486.0,270.0 1486.5,270.0 1487.0,270.0 1487.5,270.0 1488.0,270.0 1488.5,270.0 1489.0,270.0 1489.5,270.0 1490.0,270.0 1490.5,270.0 1491.0,270.0 1491.5,270.0 1492.0,270.0 1492.5,270.0 1493.0,270.0 1493.5,270.0 1494.0,270.0 1494.5,270.0 1495.0,270.0 1495.5,270.0 1496.0,270.0 1496.5,270.0 1497.0,270.1 1497.5,270.1 1498.0,270.1 1498.5,270.1 1499.0,270.1 1499.5,270.1 1500.0,270.1 1500.5,270.1 1501.0,270.1 1501.5,270.1 1502.0,270.1 1502.5,270.1 1503.0,270.1 1503.5,270.1 1504.0,270.1 1504.5,270.1 1505.0,270.1 1505.5,270.1 1506.0,270.1 1506.5,270.1 1507.0,270.1 1507.5,270.1 1508.0,270.1 1508.5,270.1 1509.0,270.1 1509.5,270.1 1510.0,270.2 1510.5,270.2 1511.0,270.2 1511.5,270.2 1512.0,270.2 1512.5,270.2 1513.0,270.2 1513.5,270.2 1514.0,270.2 1514.5,270.2 1515.0,270.2 1515.5,270.2 1516.0,270.2 1516.5,270.2 1517.0,270.2 1517.5,270.2 1518.0,270.2 1518.5,270.2 1519.0,270.2 1519.5,270.2 1520.0,270.2 1520.5,270.2 1521.0,270.2 1521.5,270.2 1522.0,270.2 1522.5,270.2 1523.0,270.2 1523.5,270.2 1524.0,270.3 1524.5,270.3 1525.0,270.3 1525.5,270.3 1526.0,270.3 1526.5,270.3 1527.0,270.3 1527.5,270.3 1528.0,270.3 1528.5,270.3 1529.0,270.3 1529.5,270.3 1530.0,270.3 1530.5,270.3 1531.0,270.3 1531.5,270.3 1532.0,270.3 1532.5,270.3 1533.0,270.3"/><polyline fill="none" stroke="#28C828" stroke-width="1.6" stroke-linejoin="round" points="883.5,330.0 884.0,330.0 884.5,330.0 885.0,330.0 885.5,329.9 886.0,329.9 886.5,329.9 887.0,329.9 887.5,329.9 888.0,329.9 888.5,329.8 889.0,329.8 889.5,329.8 890.0,329.8 890.5,329.8 891.0,329.8 891.5,329.7 892.0,329.7 892.5,329.7 893.0,329.7 893.5,329.7 894.0,329.7 894.5,329.6 895.0,329.6 895.5,329.6 896.0,329.6 896.5,329.6 897.0,329.6 897.5,329.6 898.0,329.5 898.5,329.5 899.0,329.5 899.5,329.5 900.0,329.5 900.5,329.5 901.0,329.4 901.5,329.4 902.0,329.4 902.5,329.4 903.0,329.4 903.5,329.4 904.0,329.3 904.5,329.3 905.0,329.3 905.5,329.3 906.0,329.3 906.5,329.3 907.0,329.2 907.5,329.2 908.0,329.2 908.5,329.2 909.0,329.2 909.5,329.2 910.0,329.2 910.5,329.1 911.0,329.1 911.5,329.1 912.0,329.1 912.5,329.1 913.0,329.1 913.5,329.0 914.0,329.0 914.5,329.0 915.0,329.0 915.5,329.0 916.0,329.0 916.5,328.9 917.0,328.9 917.5,328.9 918.0,328.9 918.5,328.9 919.0,328.9 919.5,328.8 920.0,328.8 920.5,328.8 921.0,328.8 921.5,328.8 922.0,328.8 922.5,328.7 923.0,328.7 923.5,328.7 924.0,328.7 924.5,328.7 925.0,328.7 925.5,328.6 926.0,328.6 926.5,328.6 927.0,328.6 927.5,328.6 928.0,328.6 928.5,328.5 929.0,328.5 929.5,328.5 930.0,328.5 930.5,328.5 931.0,328.5 931.5,328.4 932.0,328.4 932.5,328.4 933.0,328.4 933.5,328.4 934.0,328.4 934.5,328.3 935.0,328.3 935.5,328.3 936.0,328.3 936.5,328.3 937.0,328.3 937.5,328.2 938.0,328.2 938.5,328.2 939.0,328.2 939.5,328.2 940.0,328.1 940.5,328.1 941.0,328.1 941.5,328.1 942.0,328.1 942.5,328.1 943.0,328.0 943.5,328.0 944.0,328.0 944.5,328.0 945.0,328.0 945.5,328.0 946.0,327.9 946.5,327.9 947.0,327.9 947.5,327.9 948.0,327.9 948.5,327.8 949.0,327.8 949.5,327.8 950.0,327.8 950.5,327.8 951.0,327.8 951.5,327.7 952.0,327.7 952.5,327.7 953.0,327.7 953.5,327.7 954.0,327.7 954.5,327.6 955.0,327.6 955.5,327.6 956.0,327.6 956.5,327.6 957.0,327.5 957.5,327.5 958.0,327.5 958.5,327.5 959.0,327.5 959.5,327.4 960.0,327.4 960.5,327.4 961.0,327.4 961.5,327.4 962.0,327.4 962.5,327.3 963.0,327.3 963.5,327.3 964.0,327.3 964.5,327.3 965.0,327.2 965.5,327.2 966.0,327.2 966.5,327.2 967.0,327.2 967.5,327.1 968.0,327.1 968.5,327.1 969.0,327.1 969.5,327.1 970.0,327.0 970.5,327.0 971.0,327.0 971.5,327.0 972.0,327.0 972.5,327.0 973.0,326.9 973.5,326.9 974.0,326.9 974.5,326.9 975.0,326.9 975.5,326.8 976.0,326.8 976.5,326.8 977.0,326.8 977.5,326.8 978.0,326.7 978.5,326.7 979.0,326.7 979.5,326.7 980.0,326.6 980.5,326.6 981.0,326.6 981.5,326.6 982.0,326.6 982.5,326.5 983.0,326.5 983.5,326.5 984.0,326.5 984.5,326.5 985.0,326.4 985.5,326.4 986.0,326.4 986.5,326.4 987.0,326.4 987.5,326.3 988.0,326.3 988.5,326.3 989.0,326.3 989.5,326.2 990.0,326.2 990.5,326.2 991.0,326.2 991.5,326.2 992.0,326.1 992.5,326.1 993.0,326.1 993.5,326.1 994.0,326.1 994.5,326.0 995.0,326.0 995.5,326.0 996.0,326.0 996.5,325.9 997.0,325.9 997.5,325.9 998.0,325.9 998.5,325.8 999.0,325.8 999.5,325.8 1000.0,325.8 1000.5,325.8 1001.0,325.7 1001.5,325.7 1002.0,325.7 1002.5,325.7 1003.0,325.6 1003.5,325.6 1004.0,325.6 1004.5,325.6 1005.0,325.5 1005.5,325.5 1006.0,325.5 1006.5,325.5 1007.0,325.5 1007.5,325.4 1008.0,325.4 1008.5,325.4 1009.0,325.4 1009.5,325.3 1010.0,325.3 1010.5,325.3 1011.0,325.3 1011.5,325.2 1012.0,325.2 1012.5,325.2 1013.0,325.2 1013.5,325.1 1014.0,325.1 1014.5,325.1 1015.0,325.1 1015.5,325.0 1016.0,325.0 1016.5,325.0 1017.0,324.9 1017.5,324.9 1018.0,324.9 1018.5,324.9 1019.0,324.8 1019.5,324.8 1020.0,324.8 1020.5,324.8 1021.0,324.7 1021.5,324.7 1022.0,324.7 1022.5,324.7 1023.0,324.6 1023.5,324.6 1024.0,324.6 1024.5,324.5 1025.0,324.5 1025.5,324.5 1026.0,324.5 1026.5,324.4 1027.0,324.4 1027.5,324.4 1028.0,324.4 1028.5,324.3 1029.0,324.3 1029.5,324.3 1030.0,324.2 1030.5,324.2 1031.0,324.2 1031.5,324.2 1032.0,324.1 1032.5,324.1 1033.0,324.1 1033.5,324.0 1034.0,324.0 1034.5,324.0 1035.0,323.9 1035.5,323.9 1036.0,323.9 1036.5,323.9 1037.0,323.8 1037.5,323.8 1038.0,323.8 1038.5,323.7 1039.0,323.7 1039.5,323.7 1040.0,323.6 1040.5,323.6 1041.0,323.6 1041.5,323.5 1042.0,323.5 1042.5,323.5 1043.0,323.4 1043.5,323.4 1044.0,323.4 1044.5,323.3 1045.0,323.3 1045.5,323.3 1046.0,323.2 1046.5,323.2 1047.0,323.2 1047.5,323.1 1048.0,323.1 1048.5,323.1 1049.0,323.0 1049.5,323.0 1050.0,323.0 1050.5,322.9 1051.0,322.9 1051.5,322.9 1052.0,322.8 1052.5,322.8 1053.0,322.8 1053.5,322.7 1054.0,322.7 1054.5,322.7 1055.0,322.6 1055.5,322.6 1056.0,322.6 1056.5,322.5 1057.0,322.5 1057.5,322.4 1058.0,322.4 1058.5,322.4 1059.0,322.3 1059.5,322.3 1060.0,322.3 1060.5,322.2 1061.0,322.2 1061.5,322.1 1062.0,322.1 1062.5,322.1 1063.0,322.0 1063.5,322.0 1064.0,321.9 1064.5,321.9 1065.0,321.9 1065.5,321.8 1066.0,321.8 1066.5,321.7 1067.0,321.7 1067.5,321.7 1068.0,321.6 1068.5,321.6 1069.0,321.5 1069.5,321.5 1070.0,321.4 1070.5,321.4 1071.0,321.4 1071.5,321.3 1072.0,321.3 1072.5,321.2 1073.0,321.2 1073.5,321.1 1074.0,321.1 1074.5,321.0 1075.0,321.0 1075.5,321.0 1076.0,320.9 1076.5,320.9 1077.0,320.8 1077.5,320.8 1078.0,320.7 1078.5,320.7 1079.0,320.6 1079.5,320.6 1080.0,320.5 1080.5,320.5 1081.0,320.4 1081.5,320.4 1082.0,320.3 1082.5,320.3 1083.0,320.2 1083.5,320.2 1084.0,320.1 1084.5,320.1 1085.0,320.0 1085.5,320.0 1086.0,319.9 1086.5,319.9 1087.0,319.8 1087.5,319.8 1088.0,319.7 1088.5,319.7 1089.0,319.6 1089.5,319.6 1090.0,319.5 1090.5,319.5 1091.0,319.4 1091.5,319.3 1092.0,319.3 1092.5,319.2 1093.0,319.2 1093.5,319.1 1094.0,319.1 1094.5,319.0 1095.0,319.0 1095.5,318.9 1096.0,318.8 1096.5,318.8 1097.0,318.7 1097.5,318.7 1098.0,318.6 1098.5,318.5 1099.0,318.5 1099.5,318.4 1100.0,318.3 1100.5,318.3 1101.0,318.2 1101.5,318.2 1102.0,318.1 1102.5,318.0 1103.0,318.0 1103.5,317.9 1104.0,317.8 1104.5,317.8 1105.0,317.7 1105.5,317.6 1106.0,317.6 1106.5,317.5 1107.0,317.4 1107.5,317.4 1108.0,317.3 1108.5,317.2 1109.0,317.2 1109.5,317.1 1110.0,317.0 1110.5,316.9 1111.0,316.9 1111.5,316.8 1112.0,316.7 1112.5,316.6 1113.0,316.6 1113.5,316.5 1114.0,316.4 1114.5,316.3 1115.0,316.3 1115.5,316.2 1116.0,316.1 1116.5,316.0 1117.0,316.0 1117.5,315.9 1118.0,315.8 1118.5,315.7 1119.0,315.6 1119.5,315.5 1120.0,315.5 1120.5,315.4 1121.0,315.3 1121.5,315.2 1122.0,315.1 1122.5,315.0 1123.0,315.0 1123.5,314.9 1124.0,314.8 1124.5,314.7 1125.0,314.6 1125.5,314.5 1126.0,314.4 1126.5,314.3 1127.0,314.2 1127.5,314.1 1128.0,314.0 1128.5,313.9 1129.0,313.9 1129.5,313.8 1130.0,313.7 1130.5,313.6 1131.0,313.5 1131.5,313.4 1132.0,313.3 1132.5,313.2 1133.0,313.1 1133.5,313.0 1134.0,312.9 1134.5,312.8 1135.0,312.6 1135.5,312.5 1136.0,312.4 1136.5,312.3 1137.0,312.2 1137.5,312.1 1138.0,312.0 1138.5,311.9 1139.0,311.8 1139.5,311.7 1140.0,311.6 1140.5,311.4 1141.0,311.3 1141.5,311.2 1142.0,311.1 1142.5,311.0 1143.0,310.9 1143.5,310.7 1144.0,310.6 1144.5,310.5 1145.0,310.4 1145.5,310.3 1146.0,310.1 1146.5,310.0 1147.0,309.9 1147.5,309.8 1148.0,309.6 1148.5,309.5 1149.0,309.4 1149.5,309.2 1150.0,309.1 1150.5,309.0 1151.0,308.9 1151.5,308.7 1152.0,308.6 1152.5,308.5 1153.0,308.3 1153.5,308.2 1154.0,308.0 1154.5,307.9 1155.0,307.8 1155.5,307.6 1156.0,307.5 1156.5,307.4 1157.0,307.2 1157.5,307.1 1158.0,306.9 1158.5,306.8 1159.0,306.7 1159.5,306.5 1160.0,306.4 1160.5,306.2 1161.0,306.1 1161.5,305.9 1162.0,305.8 1162.5,305.7 1163.0,305.5 1163.5,305.4 1164.0,305.2 1164.5,305.1 1165.0,304.9 1165.5,304.8 1166.0,304.7 1166.5,304.5 1167.0,304.4 1167.5,304.2 1168.0,304.1 1168.5,304.0 1169.0,303.8 1169.5,303.7 1170.0,303.6 1170.5,303.4 1171.0,303.3 1171.5,303.2 1172.0,303.0 1172.5,302.9 1173.0,302.8 1173.5,302.7 1174.0,302.6 1174.5,302.4 1175.0,302.3 1175.5,302.2 1176.0,302.1 1176.5,302.0 1177.0,301.9 1177.5,301.8 1178.0,301.7 1178.5,301.7 1179.0,301.6 1179.5,301.5 1180.0,301.5 1180.5,301.4 1181.0,301.3 1181.5,301.3 1182.0,301.3 1182.5,301.2 1183.0,301.2 1183.5,301.2 1184.0,301.2 1184.5,301.2 1185.0,301.2 1185.5,301.3 1186.0,301.3 1186.5,301.4 1187.0,301.4 1187.5,301.5 1188.0,301.6 1188.5,301.7 1189.0,301.9 1189.5,302.0 1190.0,302.2 1190.5,302.3 1191.0,302.5 1191.5,302.7 1192.0,303.0 1192.5,303.2 1193.0,303.5 1193.5,303.8 1194.0,304.1 1194.5,304.4 1195.0,304.7 1195.5,305.1 1196.0,305.5 1196.5,305.9 1197.0,306.4 1197.5,306.8 1198.0,307.3 1198.5,307.8 1199.0,308.4 1199.5,308.9 1200.0,309.5 1200.5,310.1 1201.0,310.8 1201.5,311.4 1202.0,312.1 1202.5,312.8 1203.0,313.5 1203.5,314.3 1204.0,315.1 1204.5,315.9 1205.0,316.7 1205.5,317.5 1206.0,318.4 1206.5,319.2 1207.0,320.1 1207.5,321.0 1208.0,321.9 1208.5,322.8 1209.0,323.8 1209.5,324.7 1210.0,325.7 1210.5,326.6 1211.0,327.6 1211.5,328.5 1212.0,329.5 1212.5,330.5 1213.0,331.4 1213.5,332.4 1214.0,333.3 1214.5,334.3 1215.0,335.2 1215.5,336.1 1216.0,337.1 1216.5,338.0 1217.0,338.9 1217.5,339.7 1218.0,340.6 1218.5,341.4 1219.0,342.3 1219.5,343.1 1220.0,343.8 1220.5,344.6 1221.0,345.3 1221.5,346.1 1222.0,346.8 1222.5,347.4 1223.0,348.1 1223.5,348.7 1224.0,349.3 1224.5,349.9 1225.0,350.5 1225.5,351.0 1226.0,351.6 1226.5,352.1 1227.0,352.5 1227.5,353.0 1228.0,353.4 1228.5,353.8 1229.0,354.2 1229.5,354.6 1230.0,355.0 1230.5,355.3 1231.0,355.6 1231.5,355.9 1232.0,356.2 1232.5,356.4 1233.0,356.7 1233.5,356.9 1234.0,357.1 1234.5,357.3 1235.0,357.5 1235.5,357.7 1236.0,357.8 1236.5,357.9 1237.0,358.1 1237.5,358.2 1238.0,358.3 1238.5,358.4 1239.0,358.5 1239.5,358.5 1240.0,358.6 1240.5,358.6 1241.0,358.7 1241.5,358.7 1242.0,358.8 1242.5,358.8 1243.0,358.8 1243.5,358.8 1244.0,358.8 1244.5,358.8 1245.0,358.8 1245.5,358.7 1246.0,358.7 1246.5,358.7 1247.0,358.6 1247.5,358.6 1248.0,358.5 1248.5,358.5 1249.0,358.4 1249.5,358.4 1250.0,358.3 1250.5,358.3 1251.0,358.2 1251.5,358.1 1252.0,358.0 1252.5,358.0 1253.0,357.9 1253.5,357.8 1254.0,357.7 1254.5,357.6 1255.0,357.5 1255.5,357.5 1256.0,357.4 1256.5,357.3 1257.0,357.2 1257.5,357.1 1258.0,357.0 1258.5,356.9 1259.0,356.8 1259.5,356.7 1260.0,356.6 1260.5,356.5 1261.0,356.4 1261.5,356.3 1262.0,356.2 1262.5,356.1 1263.0,356.0 1263.5,355.9 1264.0,355.8 1264.5,355.7 1265.0,355.6 1265.5,355.5 1266.0,355.4 1266.5,355.3 1267.0,355.2 1267.5,355.0 1268.0,354.9 1268.5,354.8 1269.0,354.7 1269.5,354.6 1270.0,354.5 1270.5,354.4 1271.0,354.3 1271.5,354.2 1272.0,354.1 1272.5,354.0 1273.0,353.9 1273.5,353.8 1274.0,353.7 1274.5,353.6 1275.0,353.5 1275.5,353.4 1276.0,353.3 1276.5,353.2 1277.0,353.1 1277.5,353.0 1278.0,352.9 1278.5,352.8 1279.0,352.7 1279.5,352.6 1280.0,352.5 1280.5,352.4 1281.0,352.3 1281.5,352.2 1282.0,352.1 1282.5,352.1 1283.0,352.0 1283.5,351.9 1284.0,351.8 1284.5,351.7 1285.0,351.6 1285.5,351.5 1286.0,351.4 1286.5,351.3 1287.0,351.2 1287.5,351.2 1288.0,351.1 1288.5,351.0 1289.0,350.9 1289.5,350.8 1290.0,350.7 1290.5,350.6 1291.0,350.6 1291.5,350.5 1292.0,350.4 1292.5,350.3 1293.0,350.2 1293.5,350.1 1294.0,350.1 1294.5,350.0 1295.0,349.9 1295.5,349.8 1296.0,349.8 1296.5,349.7 1297.0,349.6 1297.5,349.5 1298.0,349.4 1298.5,349.4 1299.0,349.3 1299.5,349.2 1300.0,349.1 1300.5,349.1 1301.0,349.0 1301.5,348.9 1302.0,348.9 1302.5,348.8 1303.0,348.7 1303.5,348.6 1304.0,348.6 1304.5,348.5 1305.0,348.4 1305.5,348.4 1306.0,348.3 1306.5,348.2 1307.0,348.2 1307.5,348.1 1308.0,348.0 1308.5,348.0 1309.0,347.9 1309.5,347.8 1310.0,347.8 1310.5,347.7 1311.0,347.6 1311.5,347.6 1312.0,347.5 1312.5,347.4 1313.0,347.4 1313.5,347.3 1314.0,347.3 1314.5,347.2 1315.0,347.1 1315.5,347.1 1316.0,347.0 1316.5,347.0 1317.0,346.9 1317.5,346.8 1318.0,346.8 1318.5,346.7 1319.0,346.7 1319.5,346.6 1320.0,346.6 1320.5,346.5 1321.0,346.4 1321.5,346.4 1322.0,346.3 1322.5,346.3 1323.0,346.2 1323.5,346.2 1324.0,346.1 1324.5,346.1 1325.0,346.0 1325.5,346.0 1326.0,345.9 1326.5,345.9 1327.0,345.8 1327.5,345.8 1328.0,345.7 1328.5,345.7 1329.0,345.6 1329.5,345.6 1330.0,345.5 1330.5,345.5 1331.0,345.4 1331.5,345.4 1332.0,345.3 1332.5,345.3 1333.0,345.2 1333.5,345.2 1334.0,345.1 1334.5,345.1 1335.0,345.0 1335.5,345.0 1336.0,344.9 1336.5,344.9 1337.0,344.8 1337.5,344.8 1338.0,344.8 1338.5,344.7 1339.0,344.7 1339.5,344.6 1340.0,344.6 1340.5,344.5 1341.0,344.5 1341.5,344.5 1342.0,344.4 1342.5,344.4 1343.0,344.3 1343.5,344.3 1344.0,344.2 1344.5,344.2 1345.0,344.2 1345.5,344.1 1346.0,344.1 1346.5,344.0 1347.0,344.0 1347.5,344.0 1348.0,343.9 1348.5,343.9 1349.0,343.8 1349.5,343.8 1350.0,343.8 1350.5,343.7 1351.0,343.7 1351.5,343.6 1352.0,343.6 1352.5,343.6 1353.0,343.5 1353.5,343.5 1354.0,343.5 1354.5,343.4 1355.0,343.4 1355.5,343.4 1356.0,343.3 1356.5,343.3 1357.0,343.2 1357.5,343.2 1358.0,343.2 1358.5,343.1 1359.0,343.1 1359.5,343.1 1360.0,343.0 1360.5,343.0 1361.0,343.0 1361.5,342.9 1362.0,342.9 1362.5,342.9 1363.0,342.8 1363.5,342.8 1364.0,342.8 1364.5,342.7 1365.0,342.7 1365.5,342.7 1366.0,342.6 1366.5,342.6 1367.0,342.6 1367.5,342.5 1368.0,342.5 1368.5,342.5 1369.0,342.4 1369.5,342.4 1370.0,342.4 1370.5,342.4 1371.0,342.3 1371.5,342.3 1372.0,342.3 1372.5,342.2 1373.0,342.2 1373.5,342.2 1374.0,342.1 1374.5,342.1 1375.0,342.1 1375.5,342.1 1376.0,342.0 1376.5,342.0 1377.0,342.0 1377.5,341.9 1378.0,341.9 1378.5,341.9 1379.0,341.9 1379.5,341.8 1380.0,341.8 1380.5,341.8 1381.0,341.7 1381.5,341.7 1382.0,341.7 1382.5,341.7 1383.0,341.6 1383.5,341.6 1384.0,341.6 1384.5,341.6 1385.0,341.5 1385.5,341.5 1386.0,341.5 1386.5,341.4 1387.0,341.4 1387.5,341.4 1388.0,341.4 1388.5,341.3 1389.0,341.3 1389.5,341.3 1390.0,341.3 1390.5,341.2 1391.0,341.2 1391.5,341.2 1392.0,341.2 1392.5,341.1 1393.0,341.1 1393.5,341.1 1394.0,341.1 1394.5,341.0 1395.0,341.0 1395.5,341.0 1396.0,341.0 1396.5,341.0 1397.0,340.9 1397.5,340.9 1398.0,340.9 1398.5,340.9 1399.0,340.8 1399.5,340.8 1400.0,340.8 1400.5,340.8 1401.0,340.7 1401.5,340.7 1402.0,340.7 1402.5,340.7 1403.0,340.7 1403.5,340.6 1404.0,340.6 1404.5,340.6 1405.0,340.6 1405.5,340.5 1406.0,340.5 1406.5,340.5 1407.0,340.5 1407.5,340.5 1408.0,340.4 1408.5,340.4 1409.0,340.4 1409.5,340.4 1410.0,340.4 1410.5,340.3 1411.0,340.3 1411.5,340.3 1412.0,340.3 1412.5,340.3 1413.0,340.2 1413.5,340.2 1414.0,340.2 1414.5,340.2 1415.0,340.1 1415.5,340.1 1416.0,340.1 1416.5,340.1 1417.0,340.1 1417.5,340.1 1418.0,340.0 1418.5,340.0 1419.0,340.0 1419.5,340.0 1420.0,340.0 1420.5,339.9 1421.0,339.9 1421.5,339.9 1422.0,339.9 1422.5,339.9 1423.0,339.8 1423.5,339.8 1424.0,339.8 1424.5,339.8 1425.0,339.8 1425.5,339.7 1426.0,339.7 1426.5,339.7 1427.0,339.7 1427.5,339.7 1428.0,339.7 1428.5,339.6 1429.0,339.6 1429.5,339.6 1430.0,339.6 1430.5,339.6 1431.0,339.6 1431.5,339.5 1432.0,339.5 1432.5,339.5 1433.0,339.5 1433.5,339.5 1434.0,339.4 1434.5,339.4 1435.0,339.4 1435.5,339.4 1436.0,339.4 1436.5,339.4 1437.0,339.3 1437.5,339.3 1438.0,339.3 1438.5,339.3 1439.0,339.3 1439.5,339.3 1440.0,339.2 1440.5,339.2 1441.0,339.2 1441.5,339.2 1442.0,339.2 1442.5,339.2 1443.0,339.1 1443.5,339.1 1444.0,339.1 1444.5,339.1 1445.0,339.1 1445.5,339.1 1446.0,339.1 1446.5,339.0 1447.0,339.0 1447.5,339.0 1448.0,339.0 1448.5,339.0 1449.0,339.0 1449.5,338.9 1450.0,338.9 1450.5,338.9 1451.0,338.9 1451.5,338.9 1452.0,338.9 1452.5,338.9 1453.0,338.8 1453.5,338.8 1454.0,338.8 1454.5,338.8 1455.0,338.8 1455.5,338.8 1456.0,338.8 1456.5,338.7 1457.0,338.7 1457.5,338.7 1458.0,338.7 1458.5,338.7 1459.0,338.7 1459.5,338.7 1460.0,338.6 1460.5,338.6 1461.0,338.6 1461.5,338.6 1462.0,338.6 1462.5,338.6 1463.0,338.6 1463.5,338.5 1464.0,338.5 1464.5,338.5 1465.0,338.5 1465.5,338.5 1466.0,338.5 1466.5,338.5 1467.0,338.4 1467.5,338.4 1468.0,338.4 1468.5,338.4 1469.0,338.4 1469.5,338.4 1470.0,338.4 1470.5,338.4 1471.0,338.3 1471.5,338.3 1472.0,338.3 1472.5,338.3 1473.0,338.3 1473.5,338.3 1474.0,338.3 1474.5,338.3 1475.0,338.2 1475.5,338.2 1476.0,338.2 1476.5,338.2 1477.0,338.2 1477.5,338.2 1478.0,338.2 1478.5,338.2 1479.0,338.1 1479.5,338.1 1480.0,338.1 1480.5,338.1 1481.0,338.1 1481.5,338.1 1482.0,338.1 1482.5,338.1 1483.0,338.0 1483.5,338.0 1484.0,338.0 1484.5,338.0 1485.0,338.0 1485.5,338.0 1486.0,338.0 1486.5,338.0 1487.0,338.0 1487.5,337.9 1488.0,337.9 1488.5,337.9 1489.0,337.9 1489.5,337.9 1490.0,337.9 1490.5,337.9 1491.0,337.9 1491.5,337.8 1492.0,337.8 1492.5,337.8 1493.0,337.8 1493.5,337.8 1494.0,337.8 1494.5,337.8 1495.0,337.8 1495.5,337.8 1496.0,337.7 1496.5,337.7 1497.0,337.7 1497.5,337.7 1498.0,337.7 1498.5,337.7 1499.0,337.7 1499.5,337.7 1500.0,337.7 1500.5,337.6 1501.0,337.6 1501.5,337.6 1502.0,337.6 1502.5,337.6 1503.0,337.6 1503.5,337.6 1504.0,337.6 1504.5,337.6 1505.0,337.6 1505.5,337.5 1506.0,337.5 1506.5,337.5 1507.0,337.5 1507.5,337.5 1508.0,337.5 1508.5,337.5 1509.0,337.5 1509.5,337.5 1510.0,337.5 1510.5,337.4 1511.0,337.4 1511.5,337.4 1512.0,337.4 1512.5,337.4 1513.0,337.4 1513.5,337.4 1514.0,337.4 1514.5,337.4 1515.0,337.4 1515.5,337.3 1516.0,337.3 1516.5,337.3 1517.0,337.3 1517.5,337.3 1518.0,337.3 1518.5,337.3 1519.0,337.3 1519.5,337.3 1520.0,337.3 1520.5,337.2 1521.0,337.2 1521.5,337.2 1522.0,337.2 1522.5,337.2 1523.0,337.2 1523.5,337.2 1524.0,337.2 1524.5,337.2 1525.0,337.2 1525.5,337.2 1526.0,337.1 1526.5,337.1 1527.0,337.1 1527.5,337.1 1528.0,337.1 1528.5,337.1 1529.0,337.1 1529.5,337.1 1530.0,337.1 1530.5,337.1 1531.0,337.1 1531.5,337.0 1532.0,337.0 1532.5,337.0 1533.0,337.0"/><polyline fill="none" stroke="#E4E460" stroke-width="1.6" stroke-linejoin="round" points="883.5,458.0 884.0,466.2 884.5,461.0 885.0,457.9 885.5,455.7 886.0,454.1 886.5,452.7 887.0,451.5 887.5,450.5 888.0,449.6 888.5,448.8 889.0,448.1 889.5,447.4 890.0,446.8 890.5,446.3 891.0,445.8 891.5,445.3 892.0,444.8 892.5,444.4 893.0,444.0 893.5,443.6 894.0,443.2 894.5,442.9 895.0,442.5 895.5,442.2 896.0,441.9 896.5,441.6 897.0,441.3 897.5,441.0 898.0,440.8 898.5,440.5 899.0,440.3 899.5,440.0 900.0,439.8 900.5,439.6 901.0,439.3 901.5,439.1 902.0,438.9 902.5,438.7 903.0,438.5 903.5,438.3 904.0,438.1 904.5,437.9 905.0,437.8 905.5,437.6 906.0,437.4 906.5,437.3 907.0,437.1 907.5,436.9 908.0,436.8 908.5,436.6 909.0,436.5 909.5,436.3 910.0,436.2 910.5,436.0 911.0,435.9 911.5,435.7 912.0,435.6 912.5,435.5 913.0,435.3 913.5,435.2 914.0,435.1 914.5,435.0 915.0,434.8 915.5,434.7 916.0,434.6 916.5,434.5 917.0,434.4 917.5,434.3 918.0,434.1 918.5,434.0 919.0,433.9 919.5,433.8 920.0,433.7 920.5,433.6 921.0,433.5 921.5,433.4 922.0,433.3 922.5,433.2 923.0,433.1 923.5,433.0 924.0,432.9 924.5,432.8 925.0,432.7 925.5,432.6 926.0,432.5 926.5,432.4 927.0,432.3 927.5,432.3 928.0,432.2 928.5,432.1 929.0,432.0 929.5,431.9 930.0,431.8 930.5,431.7 931.0,431.6 931.5,431.6 932.0,431.5 932.5,431.4 933.0,431.3 933.5,431.2 934.0,431.2 934.5,431.1 935.0,431.0 935.5,430.9 936.0,430.9 936.5,430.8 937.0,430.7 937.5,430.6 938.0,430.6 938.5,430.5 939.0,430.4 939.5,430.3 940.0,430.3 940.5,430.2 941.0,430.1 941.5,430.1 942.0,430.0 942.5,429.9 943.0,429.9 943.5,429.8 944.0,429.7 944.5,429.7 945.0,429.6 945.5,429.5 946.0,429.5 946.5,429.4 947.0,429.3 947.5,429.3 948.0,429.2 948.5,429.1 949.0,429.1 949.5,429.0 950.0,429.0 950.5,428.9 951.0,428.8 951.5,428.8 952.0,428.7 952.5,428.7 953.0,428.6 953.5,428.5 954.0,428.5 954.5,428.4 955.0,428.4 955.5,428.3 956.0,428.2 956.5,428.2 957.0,428.1 957.5,428.1 958.0,428.0 958.5,428.0 959.0,427.9 959.5,427.8 960.0,427.8 960.5,427.7 961.0,427.7 961.5,427.6 962.0,427.6 962.5,427.5 963.0,427.5 963.5,427.4 964.0,427.4 964.5,427.3 965.0,427.3 965.5,427.2 966.0,427.2 966.5,427.1 967.0,427.0 967.5,427.0 968.0,426.9 968.5,426.9 969.0,426.8 969.5,426.8 970.0,426.7 970.5,426.7 971.0,426.6 971.5,426.6 972.0,426.5 972.5,426.5 973.0,426.4 973.5,426.4 974.0,426.4 974.5,426.3 975.0,426.3 975.5,426.2 976.0,426.2 976.5,426.1 977.0,426.1 977.5,426.0 978.0,426.0 978.5,425.9 979.0,425.9 979.5,425.8 980.0,425.8 980.5,425.7 981.0,425.7 981.5,425.6 982.0,425.6 982.5,425.6 983.0,425.5 983.5,425.5 984.0,425.4 984.5,425.4 985.0,425.3 985.5,425.3 986.0,425.2 986.5,425.2 987.0,425.1 987.5,425.1 988.0,425.1 988.5,425.0 989.0,425.0 989.5,424.9 990.0,424.9 990.5,424.8 991.0,424.8 991.5,424.8 992.0,424.7 992.5,424.7 993.0,424.6 993.5,424.6 994.0,424.5 994.5,424.5 995.0,424.5 995.5,424.4 996.0,424.4 996.5,424.3 997.0,424.3 997.5,424.2 998.0,424.2 998.5,424.2 999.0,424.1 999.5,424.1 1000.0,424.0 1000.5,424.0 1001.0,424.0 1001.5,423.9 1002.0,423.9 1002.5,423.8 1003.0,423.8 1003.5,423.7 1004.0,423.7 1004.5,423.7 1005.0,423.6 1005.5,423.6 1006.0,423.5 1006.5,423.5 1007.0,423.5 1007.5,423.4 1008.0,423.4 1008.5,423.3 1009.0,423.3 1009.5,423.3 1010.0,423.2 1010.5,423.2 1011.0,423.1 1011.5,423.1 1012.0,423.1 1012.5,423.0 1013.0,423.0 1013.5,422.9 1014.0,422.9 1014.5,422.9 1015.0,422.8 1015.5,422.8 1016.0,422.7 1016.5,422.7 1017.0,422.7 1017.5,422.6 1018.0,422.6 1018.5,422.5 1019.0,422.5 1019.5,422.5 1020.0,422.4 1020.5,422.4 1021.0,422.4 1021.5,422.3 1022.0,422.3 1022.5,422.2 1023.0,422.2 1023.5,422.2 1024.0,422.1 1024.5,422.1 1025.0,422.0 1025.5,422.0 1026.0,422.0 1026.5,421.9 1027.0,421.9 1027.5,421.9 1028.0,421.8 1028.5,421.8 1029.0,421.7 1029.5,421.7 1030.0,421.7 1030.5,421.6 1031.0,421.6 1031.5,421.5 1032.0,421.5 1032.5,421.5 1033.0,421.4 1033.5,421.4 1034.0,421.4 1034.5,421.3 1035.0,421.3 1035.5,421.2 1036.0,421.2 1036.5,421.2 1037.0,421.1 1037.5,421.1 1038.0,421.1 1038.5,421.0 1039.0,421.0 1039.5,420.9 1040.0,420.9 1040.5,420.9 1041.0,420.8 1041.5,420.8 1042.0,420.8 1042.5,420.7 1043.0,420.7 1043.5,420.6 1044.0,420.6 1044.5,420.6 1045.0,420.5 1045.5,420.5 1046.0,420.4 1046.5,420.4 1047.0,420.4 1047.5,420.3 1048.0,420.3 1048.5,420.3 1049.0,420.2 1049.5,420.2 1050.0,420.1 1050.5,420.1 1051.0,420.1 1051.5,420.0 1052.0,420.0 1052.5,420.0 1053.0,419.9 1053.5,419.9 1054.0,419.8 1054.5,419.8 1055.0,419.8 1055.5,419.7 1056.0,419.7 1056.5,419.7 1057.0,419.6 1057.5,419.6 1058.0,419.5 1058.5,419.5 1059.0,419.5 1059.5,419.4 1060.0,419.4 1060.5,419.4 1061.0,419.3 1061.5,419.3 1062.0,419.2 1062.5,419.2 1063.0,419.2 1063.5,419.1 1064.0,419.1 1064.5,419.0 1065.0,419.0 1065.5,419.0 1066.0,418.9 1066.5,418.9 1067.0,418.9 1067.5,418.8 1068.0,418.8 1068.5,418.7 1069.0,418.7 1069.5,418.7 1070.0,418.6 1070.5,418.6 1071.0,418.5 1071.5,418.5 1072.0,418.5 1072.5,418.4 1073.0,418.4 1073.5,418.4 1074.0,418.3 1074.5,418.3 1075.0,418.2 1075.5,418.2 1076.0,418.2 1076.5,418.1 1077.0,418.1 1077.5,418.0 1078.0,418.0 1078.5,418.0 1079.0,417.9 1079.5,417.9 1080.0,417.8 1080.5,417.8 1081.0,417.8 1081.5,417.7 1082.0,417.7 1082.5,417.6 1083.0,417.6 1083.5,417.6 1084.0,417.5 1084.5,417.5 1085.0,417.4 1085.5,417.4 1086.0,417.4 1086.5,417.3 1087.0,417.3 1087.5,417.2 1088.0,417.2 1088.5,417.2 1089.0,417.1 1089.5,417.1 1090.0,417.0 1090.5,417.0 1091.0,417.0 1091.5,416.9 1092.0,416.9 1092.5,416.8 1093.0,416.8 1093.5,416.8 1094.0,416.7 1094.5,416.7 1095.0,416.6 1095.5,416.6 1096.0,416.5 1096.5,416.5 1097.0,416.5 1097.5,416.4 1098.0,416.4 1098.5,416.3 1099.0,416.3 1099.5,416.3 1100.0,416.2 1100.5,416.2 1101.0,416.1 1101.5,416.1 1102.0,416.0 1102.5,416.0 1103.0,416.0 1103.5,415.9 1104.0,415.9 1104.5,415.8 1105.0,415.8 1105.5,415.7 1106.0,415.7 1106.5,415.7 1107.0,415.6 1107.5,415.6 1108.0,415.5 1108.5,415.5 1109.0,415.4 1109.5,415.4 1110.0,415.3 1110.5,415.3 1111.0,415.3 1111.5,415.2 1112.0,415.2 1112.5,415.1 1113.0,415.1 1113.5,415.0 1114.0,415.0 1114.5,414.9 1115.0,414.9 1115.5,414.9 1116.0,414.8 1116.5,414.8 1117.0,414.7 1117.5,414.7 1118.0,414.6 1118.5,414.6 1119.0,414.5 1119.5,414.5 1120.0,414.4 1120.5,414.4 1121.0,414.3 1121.5,414.3 1122.0,414.2 1122.5,414.2 1123.0,414.2 1123.5,414.1 1124.0,414.1 1124.5,414.0 1125.0,414.0 1125.5,413.9 1126.0,413.9 1126.5,413.8 1127.0,413.8 1127.5,413.7 1128.0,413.7 1128.5,413.6 1129.0,413.6 1129.5,413.5 1130.0,413.5 1130.5,413.4 1131.0,413.4 1131.5,413.3 1132.0,413.3 1132.5,413.2 1133.0,413.2 1133.5,413.1 1134.0,413.1 1134.5,413.0 1135.0,413.0 1135.5,412.9 1136.0,412.9 1136.5,412.8 1137.0,412.8 1137.5,412.7 1138.0,412.7 1138.5,412.6 1139.0,412.5 1139.5,412.5 1140.0,412.4 1140.5,412.4 1141.0,412.3 1141.5,412.3 1142.0,412.2 1142.5,412.2 1143.0,412.1 1143.5,412.1 1144.0,412.0 1144.5,411.9 1145.0,411.9 1145.5,411.8 1146.0,411.8 1146.5,411.7 1147.0,411.7 1147.5,411.6 1148.0,411.6 1148.5,411.5 1149.0,411.4 1149.5,411.4 1150.0,411.3 1150.5,411.3 1151.0,411.2 1151.5,411.2 1152.0,411.1 1152.5,411.0 1153.0,411.0 1153.5,410.9 1154.0,410.9 1154.5,410.8 1155.0,410.7 1155.5,410.7 1156.0,410.6 1156.5,410.6 1157.0,410.5 1157.5,410.4 1158.0,410.4 1158.5,410.3 1159.0,410.2 1159.5,410.2 1160.0,410.1 1160.5,410.1 1161.0,410.0 1161.5,409.9 1162.0,409.9 1162.5,409.8 1163.0,409.7 1163.5,409.7 1164.0,409.6 1164.5,409.5 1165.0,409.5 1165.5,409.4 1166.0,409.4 1166.5,409.3 1167.0,409.2 1167.5,409.2 1168.0,409.1 1168.5,409.0 1169.0,409.0 1169.5,408.9 1170.0,408.8 1170.5,408.8 1171.0,408.7 1171.5,408.6 1172.0,408.6 1172.5,408.5 1173.0,408.4 1173.5,408.3 1174.0,408.3 1174.5,408.2 1175.0,408.1 1175.5,408.1 1176.0,408.0 1176.5,407.9 1177.0,407.9 1177.5,407.8 1178.0,407.7 1178.5,407.7 1179.0,407.6 1179.5,407.5 1180.0,407.4 1180.5,407.4 1181.0,407.3 1181.5,407.2 1182.0,407.2 1182.5,407.1 1183.0,407.0 1183.5,407.0 1184.0,406.9 1184.5,406.8 1185.0,406.7 1185.5,406.7 1186.0,406.6 1186.5,406.5 1187.0,406.5 1187.5,406.4 1188.0,406.3 1188.5,406.3 1189.0,406.2 1189.5,406.1 1190.0,406.1 1190.5,406.0 1191.0,405.9 1191.5,405.9 1192.0,405.8 1192.5,405.7 1193.0,405.7 1193.5,405.6 1194.0,405.6 1194.5,405.5 1195.0,405.4 1195.5,405.4 1196.0,405.3 1196.5,405.3 1197.0,405.2 1197.5,405.2 1198.0,405.1 1198.5,405.1 1199.0,405.0 1199.5,405.0 1200.0,404.9 1200.5,404.9 1201.0,404.8 1201.5,404.8 1202.0,404.7 1202.5,404.7 1203.0,404.7 1203.5,404.6 1204.0,404.6 1204.5,404.6 1205.0,404.5 1205.5,404.5 1206.0,404.5 1206.5,404.4 1207.0,404.4 1207.5,404.4 1208.0,404.4 1208.5,404.4 1209.0,404.4 1209.5,404.3 1210.0,404.3 1210.5,404.3 1211.0,404.3 1211.5,404.3 1212.0,404.3 1212.5,404.3 1213.0,404.3 1213.5,404.3 1214.0,404.3 1214.5,404.3 1215.0,404.3 1215.5,404.3 1216.0,404.4 1216.5,404.4 1217.0,404.4 1217.5,404.4 1218.0,404.4 1218.5,404.5 1219.0,404.5 1219.5,404.5 1220.0,404.5 1220.5,404.6 1221.0,404.6 1221.5,404.6 1222.0,404.7 1222.5,404.7 1223.0,404.8 1223.5,404.8 1224.0,404.8 1224.5,404.9 1225.0,404.9 1225.5,405.0 1226.0,405.0 1226.5,405.0 1227.0,405.1 1227.5,405.1 1228.0,405.2 1228.5,405.2 1229.0,405.3 1229.5,405.3 1230.0,405.4 1230.5,405.4 1231.0,405.5 1231.5,405.6 1232.0,405.6 1232.5,405.7 1233.0,405.7 1233.5,405.8 1234.0,405.8 1234.5,405.9 1235.0,405.9 1235.5,406.0 1236.0,406.1 1236.5,406.1 1237.0,406.2 1237.5,406.2 1238.0,406.3 1238.5,406.3 1239.0,406.4 1239.5,406.5 1240.0,406.5 1240.5,406.6 1241.0,406.6 1241.5,406.7 1242.0,406.8 1242.5,406.8 1243.0,406.9 1243.5,406.9 1244.0,407.0 1244.5,407.0 1245.0,407.1 1245.5,407.2 1246.0,407.2 1246.5,407.3 1247.0,407.3 1247.5,407.4 1248.0,407.4 1248.5,407.5 1249.0,407.6 1249.5,407.6 1250.0,407.7 1250.5,407.7 1251.0,407.8 1251.5,407.8 1252.0,407.9 1252.5,407.9 1253.0,408.0 1253.5,408.1 1254.0,408.1 1254.5,408.2 1255.0,408.2 1255.5,408.3 1256.0,408.3 1256.5,408.4 1257.0,408.4 1257.5,408.5 1258.0,408.5 1258.5,408.6 1259.0,408.6 1259.5,408.7 1260.0,408.7 1260.5,408.8 1261.0,408.8 1261.5,408.9 1262.0,408.9 1262.5,409.0 1263.0,409.0 1263.5,409.1 1264.0,409.1 1264.5,409.2 1265.0,409.2 1265.5,409.3 1266.0,409.3 1266.5,409.4 1267.0,409.4 1267.5,409.5 1268.0,409.5 1268.5,409.6 1269.0,409.6 1269.5,409.7 1270.0,409.7 1270.5,409.8 1271.0,409.8 1271.5,409.9 1272.0,409.9 1272.5,410.0 1273.0,410.0 1273.5,410.0 1274.0,410.1 1274.5,410.1 1275.0,410.2 1275.5,410.2 1276.0,410.3 1276.5,410.3 1277.0,410.4 1277.5,410.4 1278.0,410.4 1278.5,410.5 1279.0,410.5 1279.5,410.6 1280.0,410.6 1280.5,410.6 1281.0,410.7 1281.5,410.7 1282.0,410.8 1282.5,410.8 1283.0,410.9 1283.5,410.9 1284.0,410.9 1284.5,411.0 1285.0,411.0 1285.5,411.1 1286.0,411.1 1286.5,411.1 1287.0,411.2 1287.5,411.2 1288.0,411.2 1288.5,411.3 1289.0,411.3 1289.5,411.4 1290.0,411.4 1290.5,411.4 1291.0,411.5 1291.5,411.5 1292.0,411.5 1292.5,411.6 1293.0,411.6 1293.5,411.7 1294.0,411.7 1294.5,411.7 1295.0,411.8 1295.5,411.8 1296.0,411.8 1296.5,411.9 1297.0,411.9 1297.5,411.9 1298.0,412.0 1298.5,412.0 1299.0,412.0 1299.5,412.1 1300.0,412.1 1300.5,412.1 1301.0,412.2 1301.5,412.2 1302.0,412.2 1302.5,412.3 1303.0,412.3 1303.5,412.3 1304.0,412.4 1304.5,412.4 1305.0,412.4 1305.5,412.5 1306.0,412.5 1306.5,412.5 1307.0,412.6 1307.5,412.6 1308.0,412.6 1308.5,412.7 1309.0,412.7 1309.5,412.7 1310.0,412.8 1310.5,412.8 1311.0,412.8 1311.5,412.9 1312.0,412.9 1312.5,412.9 1313.0,412.9 1313.5,413.0 1314.0,413.0 1314.5,413.0 1315.0,413.1 1315.5,413.1 1316.0,413.1 1316.5,413.2 1317.0,413.2 1317.5,413.2 1318.0,413.2 1318.5,413.3 1319.0,413.3 1319.5,413.3 1320.0,413.4 1320.5,413.4 1321.0,413.4 1321.5,413.4 1322.0,413.5 1322.5,413.5 1323.0,413.5 1323.5,413.6 1324.0,413.6 1324.5,413.6 1325.0,413.6 1325.5,413.7 1326.0,413.7 1326.5,413.7 1327.0,413.7 1327.5,413.8 1328.0,413.8 1328.5,413.8 1329.0,413.9 1329.5,413.9 1330.0,413.9 1330.5,413.9 1331.0,414.0 1331.5,414.0 1332.0,414.0 1332.5,414.0 1333.0,414.1 1333.5,414.1 1334.0,414.1 1334.5,414.1 1335.0,414.2 1335.5,414.2 1336.0,414.2 1336.5,414.2 1337.0,414.3 1337.5,414.3 1338.0,414.3 1338.5,414.3 1339.0,414.4 1339.5,414.4 1340.0,414.4 1340.5,414.4 1341.0,414.5 1341.5,414.5 1342.0,414.5 1342.5,414.5 1343.0,414.6 1343.5,414.6 1344.0,414.6 1344.5,414.6 1345.0,414.7 1345.5,414.7 1346.0,414.7 1346.5,414.7 1347.0,414.7 1347.5,414.8 1348.0,414.8 1348.5,414.8 1349.0,414.8 1349.5,414.9 1350.0,414.9 1350.5,414.9 1351.0,414.9 1351.5,414.9 1352.0,415.0 1352.5,415.0 1353.0,415.0 1353.5,415.0 1354.0,415.1 1354.5,415.1 1355.0,415.1 1355.5,415.1 1356.0,415.1 1356.5,415.2 1357.0,415.2 1357.5,415.2 1358.0,415.2 1358.5,415.3 1359.0,415.3 1359.5,415.3 1360.0,415.3 1360.5,415.3 1361.0,415.4 1361.5,415.4 1362.0,415.4 1362.5,415.4 1363.0,415.4 1363.5,415.5 1364.0,415.5 1364.5,415.5 1365.0,415.5 1365.5,415.5 1366.0,415.6 1366.5,415.6 1367.0,415.6 1367.5,415.6 1368.0,415.6 1368.5,415.7 1369.0,415.7 1369.5,415.7 1370.0,415.7 1370.5,415.7 1371.0,415.8 1371.5,415.8 1372.0,415.8 1372.5,415.8 1373.0,415.8 1373.5,415.9 1374.0,415.9 1374.5,415.9 1375.0,415.9 1375.5,415.9 1376.0,416.0 1376.5,416.0 1377.0,416.0 1377.5,416.0 1378.0,416.0 1378.5,416.1 1379.0,416.1 1379.5,416.1 1380.0,416.1 1380.5,416.1 1381.0,416.1 1381.5,416.2 1382.0,416.2 1382.5,416.2 1383.0,416.2 1383.5,416.2 1384.0,416.3 1384.5,416.3 1385.0,416.3 1385.5,416.3 1386.0,416.3 1386.5,416.3 1387.0,416.4 1387.5,416.4 1388.0,416.4 1388.5,416.4 1389.0,416.4 1389.5,416.5 1390.0,416.5 1390.5,416.5 1391.0,416.5 1391.5,416.5 1392.0,416.5 1392.5,416.6 1393.0,416.6 1393.5,416.6 1394.0,416.6 1394.5,416.6 1395.0,416.6 1395.5,416.7 1396.0,416.7 1396.5,416.7 1397.0,416.7 1397.5,416.7 1398.0,416.7 1398.5,416.8 1399.0,416.8 1399.5,416.8 1400.0,416.8 1400.5,416.8 1401.0,416.8 1401.5,416.9 1402.0,416.9 1402.5,416.9 1403.0,416.9 1403.5,416.9 1404.0,416.9 1404.5,417.0 1405.0,417.0 1405.5,417.0 1406.0,417.0 1406.5,417.0 1407.0,417.0 1407.5,417.1 1408.0,417.1 1408.5,417.1 1409.0,417.1 1409.5,417.1 1410.0,417.1 1410.5,417.2 1411.0,417.2 1411.5,417.2 1412.0,417.2 1412.5,417.2 1413.0,417.2 1413.5,417.3 1414.0,417.3 1414.5,417.3 1415.0,417.3 1415.5,417.3 1416.0,417.3 1416.5,417.3 1417.0,417.4 1417.5,417.4 1418.0,417.4 1418.5,417.4 1419.0,417.4 1419.5,417.4 1420.0,417.4 1420.5,417.5 1421.0,417.5 1421.5,417.5 1422.0,417.5 1422.5,417.5 1423.0,417.5 1423.5,417.6 1424.0,417.6 1424.5,417.6 1425.0,417.6 1425.5,417.6 1426.0,417.6 1426.5,417.6 1427.0,417.7 1427.5,417.7 1428.0,417.7 1428.5,417.7 1429.0,417.7 1429.5,417.7 1430.0,417.7 1430.5,417.8 1431.0,417.8 1431.5,417.8 1432.0,417.8 1432.5,417.8 1433.0,417.8 1433.5,417.8 1434.0,417.9 1434.5,417.9 1435.0,417.9 1435.5,417.9 1436.0,417.9 1436.5,417.9 1437.0,417.9 1437.5,418.0 1438.0,418.0 1438.5,418.0 1439.0,418.0 1439.5,418.0 1440.0,418.0 1440.5,418.0 1441.0,418.1 1441.5,418.1 1442.0,418.1 1442.5,418.1 1443.0,418.1 1443.5,418.1 1444.0,418.1 1444.5,418.1 1445.0,418.2 1445.5,418.2 1446.0,418.2 1446.5,418.2 1447.0,418.2 1447.5,418.2 1448.0,418.2 1448.5,418.3 1449.0,418.3 1449.5,418.3 1450.0,418.3 1450.5,418.3 1451.0,418.3 1451.5,418.3 1452.0,418.3 1452.5,418.4 1453.0,418.4 1453.5,418.4 1454.0,418.4 1454.5,418.4 1455.0,418.4 1455.5,418.4 1456.0,418.4 1456.5,418.5 1457.0,418.5 1457.5,418.5 1458.0,418.5 1458.5,418.5 1459.0,418.5 1459.5,418.5 1460.0,418.5 1460.5,418.6 1461.0,418.6 1461.5,418.6 1462.0,418.6 1462.5,418.6 1463.0,418.6 1463.5,418.6 1464.0,418.6 1464.5,418.7 1465.0,418.7 1465.5,418.7 1466.0,418.7 1466.5,418.7 1467.0,418.7 1467.5,418.7 1468.0,418.7 1468.5,418.8 1469.0,418.8 1469.5,418.8 1470.0,418.8 1470.5,418.8 1471.0,418.8 1471.5,418.8 1472.0,418.8 1472.5,418.9 1473.0,418.9 1473.5,418.9 1474.0,418.9 1474.5,418.9 1475.0,418.9 1475.5,418.9 1476.0,418.9 1476.5,418.9 1477.0,419.0 1477.5,419.0 1478.0,419.0 1478.5,419.0 1479.0,419.0 1479.5,419.0 1480.0,419.0 1480.5,419.0 1481.0,419.1 1481.5,419.1 1482.0,419.1 1482.5,419.1 1483.0,419.1 1483.5,419.1 1484.0,419.1 1484.5,419.1 1485.0,419.1 1485.5,419.2 1486.0,419.2 1486.5,419.2 1487.0,419.2 1487.5,419.2 1488.0,419.2 1488.5,419.2 1489.0,419.2 1489.5,419.2 1490.0,419.3 1490.5,419.3 1491.0,419.3 1491.5,419.3 1492.0,419.3 1492.5,419.3 1493.0,419.3 1493.5,419.3 1494.0,419.3 1494.5,419.4 1495.0,419.4 1495.5,419.4 1496.0,419.4 1496.5,419.4 1497.0,419.4 1497.5,419.4 1498.0,419.4 1498.5,419.4 1499.0,419.5 1499.5,419.5 1500.0,419.5 1500.5,419.5 1501.0,419.5 1501.5,419.5 1502.0,419.5 1502.5,419.5 1503.0,419.5 1503.5,419.6 1504.0,419.6 1504.5,419.6 1505.0,419.6 1505.5,419.6 1506.0,419.6 1506.5,419.6 1507.0,419.6 1507.5,419.6 1508.0,419.6 1508.5,419.7 1509.0,419.7 1509.5,419.7 1510.0,419.7 1510.5,419.7 1511.0,419.7 1511.5,419.7 1512.0,419.7 1512.5,419.7 1513.0,419.8 1513.5,419.8 1514.0,419.8 1514.5,419.8 1515.0,419.8 1515.5,419.8 1516.0,419.8 1516.5,419.8 1517.0,419.8 1517.5,419.8 1518.0,419.9 1518.5,419.9 1519.0,419.9 1519.5,419.9 1520.0,419.9 1520.5,419.9 1521.0,419.9 1521.5,419.9 1522.0,419.9 1522.5,419.9 1523.0,420.0 1523.5,420.0 1524.0,420.0 1524.5,420.0 1525.0,420.0 1525.5,420.0 1526.0,420.0 1526.5,420.0 1527.0,420.0 1527.5,420.0 1528.0,420.1 1528.5,420.1 1529.0,420.1 1529.5,420.1 1530.0,420.1 1530.5,420.1 1531.0,420.1 1531.5,420.1 1532.0,420.1 1532.5,420.1 1533.0,420.2"/><polyline fill="none" stroke="#1A1AB8" stroke-width="2" stroke-linejoin="round" points="883.5,494.9 884.0,494.9 884.5,495.0 885.0,495.0 885.5,495.0 886.0,495.0 886.5,495.0 887.0,495.0 887.5,495.0 888.0,495.0 888.5,495.0 889.0,495.0 889.5,495.0 890.0,495.0 890.5,495.0 891.0,495.0 891.5,495.1 892.0,495.1 892.5,495.1 893.0,495.1 893.5,495.1 894.0,495.1 894.5,495.1 895.0,495.1 895.5,495.1 896.0,495.1 896.5,495.1 897.0,495.1 897.5,495.1 898.0,495.1 898.5,495.2 899.0,495.2 899.5,495.2 900.0,495.2 900.5,495.2 901.0,495.2 901.5,495.2 902.0,495.2 902.5,495.2 903.0,495.2 903.5,495.2 904.0,495.2 904.5,495.2 905.0,495.2 905.5,495.3 906.0,495.3 906.5,495.3 907.0,495.3 907.5,495.3 908.0,495.3 908.5,495.3 909.0,495.3 909.5,495.3 910.0,495.3 910.5,495.3 911.0,495.3 911.5,495.3 912.0,495.3 912.5,495.4 913.0,495.4 913.5,495.4 914.0,495.4 914.5,495.4 915.0,495.4 915.5,495.4 916.0,495.4 916.5,495.4 917.0,495.4 917.5,495.4 918.0,495.4 918.5,495.4 919.0,495.4 919.5,495.5 920.0,495.5 920.5,495.5 921.0,495.5 921.5,495.5 922.0,495.5 922.5,495.5 923.0,495.5 923.5,495.5 924.0,495.5 924.5,495.5 925.0,495.5 925.5,495.5 926.0,495.5 926.5,495.6 927.0,495.6 927.5,495.6 928.0,495.6 928.5,495.6 929.0,495.6 929.5,495.6 930.0,495.6 930.5,495.6 931.0,495.6 931.5,495.6 932.0,495.6 932.5,495.6 933.0,495.7 933.5,495.7 934.0,495.7 934.5,495.7 935.0,495.7 935.5,495.7 936.0,495.7 936.5,495.7 937.0,495.7 937.5,495.7 938.0,495.7 938.5,495.7 939.0,495.7 939.5,495.8 940.0,495.8 940.5,495.8 941.0,495.8 941.5,495.8 942.0,495.8 942.5,495.8 943.0,495.8 943.5,495.8 944.0,495.8 944.5,495.8 945.0,495.8 945.5,495.8 946.0,495.9 946.5,495.9 947.0,495.9 947.5,495.9 948.0,495.9 948.5,495.9 949.0,495.9 949.5,495.9 950.0,495.9 950.5,495.9 951.0,495.9 951.5,495.9 952.0,495.9 952.5,496.0 953.0,496.0 953.5,496.0 954.0,496.0 954.5,496.0 955.0,496.0 955.5,496.0 956.0,496.0 956.5,496.0 957.0,496.0 957.5,496.0 958.0,496.0 958.5,496.1 959.0,496.1 959.5,496.1 960.0,496.1 960.5,496.1 961.0,496.1 961.5,496.1 962.0,496.1 962.5,496.1 963.0,496.1 963.5,496.1 964.0,496.1 964.5,496.2 965.0,496.2 965.5,496.2 966.0,496.2 966.5,496.2 967.0,496.2 967.5,496.2 968.0,496.2 968.5,496.2 969.0,496.2 969.5,496.2 970.0,496.2 970.5,496.3 971.0,496.3 971.5,496.3 972.0,496.3 972.5,496.3 973.0,496.3 973.5,496.3 974.0,496.3 974.5,496.3 975.0,496.3 975.5,496.3 976.0,496.4 976.5,496.4 977.0,496.4 977.5,496.4 978.0,496.4 978.5,496.4 979.0,496.4 979.5,496.4 980.0,496.4 980.5,496.4 981.0,496.4 981.5,496.5 982.0,496.5 982.5,496.5 983.0,496.5 983.5,496.5 984.0,496.5 984.5,496.5 985.0,496.5 985.5,496.5 986.0,496.5 986.5,496.5 987.0,496.6 987.5,496.6 988.0,496.6 988.5,496.6 989.0,496.6 989.5,496.6 990.0,496.6 990.5,496.6 991.0,496.6 991.5,496.6 992.0,496.7 992.5,496.7 993.0,496.7 993.5,496.7 994.0,496.7 994.5,496.7 995.0,496.7 995.5,496.7 996.0,496.7 996.5,496.7 997.0,496.7 997.5,496.8 998.0,496.8 998.5,496.8 999.0,496.8 999.5,496.8 1000.0,496.8 1000.5,496.8 1001.0,496.8 1001.5,496.8 1002.0,496.9 1002.5,496.9 1003.0,496.9 1003.5,496.9 1004.0,496.9 1004.5,496.9 1005.0,496.9 1005.5,496.9 1006.0,496.9 1006.5,496.9 1007.0,497.0 1007.5,497.0 1008.0,497.0 1008.5,497.0 1009.0,497.0 1009.5,497.0 1010.0,497.0 1010.5,497.0 1011.0,497.0 1011.5,497.1 1012.0,497.1 1012.5,497.1 1013.0,497.1 1013.5,497.1 1014.0,497.1 1014.5,497.1 1015.0,497.1 1015.5,497.1 1016.0,497.2 1016.5,497.2 1017.0,497.2 1017.5,497.2 1018.0,497.2 1018.5,497.2 1019.0,497.2 1019.5,497.2 1020.0,497.3 1020.5,497.3 1021.0,497.3 1021.5,497.3 1022.0,497.3 1022.5,497.3 1023.0,497.3 1023.5,497.3 1024.0,497.4 1024.5,497.4 1025.0,497.4 1025.5,497.4 1026.0,497.4 1026.5,497.4 1027.0,497.4 1027.5,497.4 1028.0,497.5 1028.5,497.5 1029.0,497.5 1029.5,497.5 1030.0,497.5 1030.5,497.5 1031.0,497.5 1031.5,497.5 1032.0,497.6 1032.5,497.6 1033.0,497.6 1033.5,497.6 1034.0,497.6 1034.5,497.6 1035.0,497.6 1035.5,497.6 1036.0,497.7 1036.5,497.7 1037.0,497.7 1037.5,497.7 1038.0,497.7 1038.5,497.7 1039.0,497.7 1039.5,497.8 1040.0,497.8 1040.5,497.8 1041.0,497.8 1041.5,497.8 1042.0,497.8 1042.5,497.8 1043.0,497.9 1043.5,497.9 1044.0,497.9 1044.5,497.9 1045.0,497.9 1045.5,497.9 1046.0,498.0 1046.5,498.0 1047.0,498.0 1047.5,498.0 1048.0,498.0 1048.5,498.0 1049.0,498.0 1049.5,498.1 1050.0,498.1 1050.5,498.1 1051.0,498.1 1051.5,498.1 1052.0,498.1 1052.5,498.2 1053.0,498.2 1053.5,498.2 1054.0,498.2 1054.5,498.2 1055.0,498.2 1055.5,498.3 1056.0,498.3 1056.5,498.3 1057.0,498.3 1057.5,498.3 1058.0,498.3 1058.5,498.4 1059.0,498.4 1059.5,498.4 1060.0,498.4 1060.5,498.4 1061.0,498.4 1061.5,498.5 1062.0,498.5 1062.5,498.5 1063.0,498.5 1063.5,498.5 1064.0,498.6 1064.5,498.6 1065.0,498.6 1065.5,498.6 1066.0,498.6 1066.5,498.6 1067.0,498.7 1067.5,498.7 1068.0,498.7 1068.5,498.7 1069.0,498.7 1069.5,498.8 1070.0,498.8 1070.5,498.8 1071.0,498.8 1071.5,498.8 1072.0,498.9 1072.5,498.9 1073.0,498.9 1073.5,498.9 1074.0,498.9 1074.5,499.0 1075.0,499.0 1075.5,499.0 1076.0,499.0 1076.5,499.0 1077.0,499.1 1077.5,499.1 1078.0,499.1 1078.5,499.1 1079.0,499.2 1079.5,499.2 1080.0,499.2 1080.5,499.2 1081.0,499.2 1081.5,499.3 1082.0,499.3 1082.5,499.3 1083.0,499.3 1083.5,499.4 1084.0,499.4 1084.5,499.4 1085.0,499.4 1085.5,499.5 1086.0,499.5 1086.5,499.5 1087.0,499.5 1087.5,499.6 1088.0,499.6 1088.5,499.6 1089.0,499.6 1089.5,499.7 1090.0,499.7 1090.5,499.7 1091.0,499.7 1091.5,499.8 1092.0,499.8 1092.5,499.8 1093.0,499.8 1093.5,499.9 1094.0,499.9 1094.5,499.9 1095.0,500.0 1095.5,500.0 1096.0,500.0 1096.5,500.0 1097.0,500.1 1097.5,500.1 1098.0,500.1 1098.5,500.2 1099.0,500.2 1099.5,500.2 1100.0,500.2 1100.5,500.3 1101.0,500.3 1101.5,500.3 1102.0,500.4 1102.5,500.4 1103.0,500.4 1103.5,500.5 1104.0,500.5 1104.5,500.5 1105.0,500.6 1105.5,500.6 1106.0,500.6 1106.5,500.7 1107.0,500.7 1107.5,500.7 1108.0,500.8 1108.5,500.8 1109.0,500.8 1109.5,500.9 1110.0,500.9 1110.5,500.9 1111.0,501.0 1111.5,501.0 1112.0,501.0 1112.5,501.1 1113.0,501.1 1113.5,501.2 1114.0,501.2 1114.5,501.2 1115.0,501.3 1115.5,501.3 1116.0,501.3 1116.5,501.4 1117.0,501.4 1117.5,501.5 1118.0,501.5 1118.5,501.5 1119.0,501.6 1119.5,501.6 1120.0,501.7 1120.5,501.7 1121.0,501.8 1121.5,501.8 1122.0,501.8 1122.5,501.9 1123.0,501.9 1123.5,502.0 1124.0,502.0 1124.5,502.1 1125.0,502.1 1125.5,502.2 1126.0,502.2 1126.5,502.3 1127.0,502.3 1127.5,502.4 1128.0,502.4 1128.5,502.5 1129.0,502.5 1129.5,502.6 1130.0,502.6 1130.5,502.7 1131.0,502.7 1131.5,502.8 1132.0,502.8 1132.5,502.9 1133.0,502.9 1133.5,503.0 1134.0,503.1 1134.5,503.1 1135.0,503.2 1135.5,503.2 1136.0,503.3 1136.5,503.3 1137.0,503.4 1137.5,503.5 1138.0,503.5 1138.5,503.6 1139.0,503.7 1139.5,503.7 1140.0,503.8 1140.5,503.9 1141.0,503.9 1141.5,504.0 1142.0,504.1 1142.5,504.1 1143.0,504.2 1143.5,504.3 1144.0,504.3 1144.5,504.4 1145.0,504.5 1145.5,504.6 1146.0,504.6 1146.5,504.7 1147.0,504.8 1147.5,504.9 1148.0,504.9 1148.5,505.0 1149.0,505.1 1149.5,505.2 1150.0,505.3 1150.5,505.4 1151.0,505.4 1151.5,505.5 1152.0,505.6 1152.5,505.7 1153.0,505.8 1153.5,505.9 1154.0,506.0 1154.5,506.1 1155.0,506.2 1155.5,506.3 1156.0,506.4 1156.5,506.5 1157.0,506.6 1157.5,506.7 1158.0,506.8 1158.5,506.9 1159.0,507.0 1159.5,507.1 1160.0,507.2 1160.5,507.3 1161.0,507.4 1161.5,507.5 1162.0,507.6 1162.5,507.8 1163.0,507.9 1163.5,508.0 1164.0,508.1 1164.5,508.2 1165.0,508.4 1165.5,508.5 1166.0,508.6 1166.5,508.8 1167.0,508.9 1167.5,509.0 1168.0,509.2 1168.5,509.3 1169.0,509.5 1169.5,509.6 1170.0,509.8 1170.5,509.9 1171.0,510.1 1171.5,510.2 1172.0,510.4 1172.5,510.5 1173.0,510.7 1173.5,510.9 1174.0,511.0 1174.5,511.2 1175.0,511.4 1175.5,511.6 1176.0,511.7 1176.5,511.9 1177.0,512.1 1177.5,512.3 1178.0,512.5 1178.5,512.7 1179.0,512.9 1179.5,513.1 1180.0,513.3 1180.5,513.5 1181.0,513.7 1181.5,513.9 1182.0,514.1 1182.5,514.4 1183.0,514.6 1183.5,514.8 1184.0,515.0 1184.5,515.3 1185.0,515.5 1185.5,515.8 1186.0,516.0 1186.5,516.3 1187.0,516.5 1187.5,516.8 1188.0,517.1 1188.5,517.3 1189.0,517.6 1189.5,517.9 1190.0,518.2 1190.5,518.5 1191.0,518.8 1191.5,519.1 1192.0,519.4 1192.5,519.7 1193.0,520.0 1193.5,520.3 1194.0,520.6 1194.5,520.9 1195.0,521.3 1195.5,521.6 1196.0,522.0 1196.5,522.3 1197.0,522.6 1197.5,523.0 1198.0,523.4 1198.5,523.7 1199.0,524.1 1199.5,524.5 1200.0,524.8 1200.5,525.2 1201.0,525.6 1201.5,526.0 1202.0,526.4 1202.5,526.8 1203.0,527.2 1203.5,527.6 1204.0,528.0 1204.5,528.4 1205.0,528.8 1205.5,529.2 1206.0,529.6 1206.5,530.0 1207.0,530.4 1207.5,530.9 1208.0,531.3 1208.5,531.7 1209.0,532.1 1209.5,532.6 1210.0,533.0 1210.5,533.4 1211.0,533.8 1211.5,534.3 1212.0,534.7 1212.5,535.1 1213.0,535.5 1213.5,536.0 1214.0,536.4 1214.5,536.8 1215.0,537.2 1215.5,537.6 1216.0,538.1 1216.5,538.5 1217.0,538.9 1217.5,539.3 1218.0,539.7 1218.5,540.1 1219.0,540.5 1219.5,540.9 1220.0,541.3 1220.5,541.7 1221.0,542.1 1221.5,542.4 1222.0,542.8 1222.5,543.2 1223.0,543.6 1223.5,543.9 1224.0,544.3 1224.5,544.6 1225.0,545.0 1225.5,545.3 1226.0,545.7 1226.5,546.0 1227.0,546.3 1227.5,546.7 1228.0,547.0 1228.5,547.3 1229.0,547.6 1229.5,547.9 1230.0,548.2 1230.5,548.5 1231.0,548.8 1231.5,549.1 1232.0,549.4 1232.5,549.7 1233.0,550.0 1233.5,550.3 1234.0,550.5 1234.5,550.8 1235.0,551.0 1235.5,551.3 1236.0,551.6 1236.5,551.8 1237.0,552.0 1237.5,552.3 1238.0,552.5 1238.5,552.8 1239.0,553.0 1239.5,553.2 1240.0,553.4 1240.5,553.6 1241.0,553.9 1241.5,554.1 1242.0,554.3 1242.5,554.5 1243.0,554.7 1243.5,554.9 1244.0,555.1 1244.5,555.3 1245.0,555.5 1245.5,555.6 1246.0,555.8 1246.5,556.0 1247.0,556.2 1247.5,556.3 1248.0,556.5 1248.5,556.7 1249.0,556.8 1249.5,557.0 1250.0,557.2 1250.5,557.3 1251.0,557.5 1251.5,557.6 1252.0,557.8 1252.5,557.9 1253.0,558.1 1253.5,558.2 1254.0,558.3 1254.5,558.5 1255.0,558.6 1255.5,558.8 1256.0,558.9 1256.5,559.0 1257.0,559.1 1257.5,559.3 1258.0,559.4 1258.5,559.5 1259.0,559.6 1259.5,559.8 1260.0,559.9 1260.5,560.0 1261.0,560.1 1261.5,560.2 1262.0,560.3 1262.5,560.4 1263.0,560.5 1263.5,560.6 1264.0,560.7 1264.5,560.8 1265.0,560.9 1265.5,561.0 1266.0,561.1 1266.5,561.2 1267.0,561.3 1267.5,561.4 1268.0,561.5 1268.5,561.6 1269.0,561.7 1269.5,561.8 1270.0,561.9 1270.5,562.0 1271.0,562.1 1271.5,562.1 1272.0,562.2 1272.5,562.3 1273.0,562.4 1273.5,562.5 1274.0,562.5 1274.5,562.6 1275.0,562.7 1275.5,562.8 1276.0,562.9 1276.5,562.9 1277.0,563.0 1277.5,563.1 1278.0,563.1 1278.5,563.2 1279.0,563.3 1279.5,563.4 1280.0,563.4 1280.5,563.5 1281.0,563.6 1281.5,563.6 1282.0,563.7 1282.5,563.8 1283.0,563.8 1283.5,563.9 1284.0,563.9 1284.5,564.0 1285.0,564.1 1285.5,564.1 1286.0,564.2 1286.5,564.2 1287.0,564.3 1287.5,564.4 1288.0,564.4 1288.5,564.5 1289.0,564.5 1289.5,564.6 1290.0,564.6 1290.5,564.7 1291.0,564.7 1291.5,564.8 1292.0,564.8 1292.5,564.9 1293.0,564.9 1293.5,565.0 1294.0,565.0 1294.5,565.1 1295.0,565.1 1295.5,565.2 1296.0,565.2 1296.5,565.3 1297.0,565.3 1297.5,565.4 1298.0,565.4 1298.5,565.5 1299.0,565.5 1299.5,565.6 1300.0,565.6 1300.5,565.6 1301.0,565.7 1301.5,565.7 1302.0,565.8 1302.5,565.8 1303.0,565.9 1303.5,565.9 1304.0,565.9 1304.5,566.0 1305.0,566.0 1305.5,566.1 1306.0,566.1 1306.5,566.1 1307.0,566.2 1307.5,566.2 1308.0,566.3 1308.5,566.3 1309.0,566.3 1309.5,566.4 1310.0,566.4 1310.5,566.4 1311.0,566.5 1311.5,566.5 1312.0,566.5 1312.5,566.6 1313.0,566.6 1313.5,566.6 1314.0,566.7 1314.5,566.7 1315.0,566.7 1315.5,566.8 1316.0,566.8 1316.5,566.8 1317.0,566.9 1317.5,566.9 1318.0,566.9 1318.5,567.0 1319.0,567.0 1319.5,567.0 1320.0,567.1 1320.5,567.1 1321.0,567.1 1321.5,567.2 1322.0,567.2 1322.5,567.2 1323.0,567.2 1323.5,567.3 1324.0,567.3 1324.5,567.3 1325.0,567.4 1325.5,567.4 1326.0,567.4 1326.5,567.4 1327.0,567.5 1327.5,567.5 1328.0,567.5 1328.5,567.5 1329.0,567.6 1329.5,567.6 1330.0,567.6 1330.5,567.6 1331.0,567.7 1331.5,567.7 1332.0,567.7 1332.5,567.8 1333.0,567.8 1333.5,567.8 1334.0,567.8 1334.5,567.8 1335.0,567.9 1335.5,567.9 1336.0,567.9 1336.5,567.9 1337.0,568.0 1337.5,568.0 1338.0,568.0 1338.5,568.0 1339.0,568.1 1339.5,568.1 1340.0,568.1 1340.5,568.1 1341.0,568.1 1341.5,568.2 1342.0,568.2 1342.5,568.2 1343.0,568.2 1343.5,568.3 1344.0,568.3 1344.5,568.3 1345.0,568.3 1345.5,568.3 1346.0,568.4 1346.5,568.4 1347.0,568.4 1347.5,568.4 1348.0,568.4 1348.5,568.5 1349.0,568.5 1349.5,568.5 1350.0,568.5 1350.5,568.5 1351.0,568.6 1351.5,568.6 1352.0,568.6 1352.5,568.6 1353.0,568.6 1353.5,568.7 1354.0,568.7 1354.5,568.7 1355.0,568.7 1355.5,568.7 1356.0,568.7 1356.5,568.8 1357.0,568.8 1357.5,568.8 1358.0,568.8 1358.5,568.8 1359.0,568.8 1359.5,568.9 1360.0,568.9 1360.5,568.9 1361.0,568.9 1361.5,568.9 1362.0,568.9 1362.5,569.0 1363.0,569.0 1363.5,569.0 1364.0,569.0 1364.5,569.0 1365.0,569.0 1365.5,569.1 1366.0,569.1 1366.5,569.1 1367.0,569.1 1367.5,569.1 1368.0,569.1 1368.5,569.2 1369.0,569.2 1369.5,569.2 1370.0,569.2 1370.5,569.2 1371.0,569.2 1371.5,569.2 1372.0,569.3 1372.5,569.3 1373.0,569.3 1373.5,569.3 1374.0,569.3 1374.5,569.3 1375.0,569.3 1375.5,569.4 1376.0,569.4 1376.5,569.4 1377.0,569.4 1377.5,569.4 1378.0,569.4 1378.5,569.4 1379.0,569.5 1379.5,569.5 1380.0,569.5 1380.5,569.5 1381.0,569.5 1381.5,569.5 1382.0,569.5 1382.5,569.6 1383.0,569.6 1383.5,569.6 1384.0,569.6 1384.5,569.6 1385.0,569.6 1385.5,569.6 1386.0,569.6 1386.5,569.7 1387.0,569.7 1387.5,569.7 1388.0,569.7 1388.5,569.7 1389.0,569.7 1389.5,569.7 1390.0,569.7 1390.5,569.8 1391.0,569.8 1391.5,569.8 1392.0,569.8 1392.5,569.8 1393.0,569.8 1393.5,569.8 1394.0,569.8 1394.5,569.8 1395.0,569.9 1395.5,569.9 1396.0,569.9 1396.5,569.9 1397.0,569.9 1397.5,569.9 1398.0,569.9 1398.5,569.9 1399.0,570.0 1399.5,570.0 1400.0,570.0 1400.5,570.0 1401.0,570.0 1401.5,570.0 1402.0,570.0 1402.5,570.0 1403.0,570.0 1403.5,570.0 1404.0,570.1 1404.5,570.1 1405.0,570.1 1405.5,570.1 1406.0,570.1 1406.5,570.1 1407.0,570.1 1407.5,570.1 1408.0,570.1 1408.5,570.1 1409.0,570.2 1409.5,570.2 1410.0,570.2 1410.5,570.2 1411.0,570.2 1411.5,570.2 1412.0,570.2 1412.5,570.2 1413.0,570.2 1413.5,570.2 1414.0,570.3 1414.5,570.3 1415.0,570.3 1415.5,570.3 1416.0,570.3 1416.5,570.3 1417.0,570.3 1417.5,570.3 1418.0,570.3 1418.5,570.3 1419.0,570.4 1419.5,570.4 1420.0,570.4 1420.5,570.4 1421.0,570.4 1421.5,570.4 1422.0,570.4 1422.5,570.4 1423.0,570.4 1423.5,570.4 1424.0,570.4 1424.5,570.4 1425.0,570.5 1425.5,570.5 1426.0,570.5 1426.5,570.5 1427.0,570.5 1427.5,570.5 1428.0,570.5 1428.5,570.5 1429.0,570.5 1429.5,570.5 1430.0,570.5 1430.5,570.5 1431.0,570.6 1431.5,570.6 1432.0,570.6 1432.5,570.6 1433.0,570.6 1433.5,570.6 1434.0,570.6 1434.5,570.6 1435.0,570.6 1435.5,570.6 1436.0,570.6 1436.5,570.6 1437.0,570.7 1437.5,570.7 1438.0,570.7 1438.5,570.7 1439.0,570.7 1439.5,570.7 1440.0,570.7 1440.5,570.7 1441.0,570.7 1441.5,570.7 1442.0,570.7 1442.5,570.7 1443.0,570.7 1443.5,570.8 1444.0,570.8 1444.5,570.8 1445.0,570.8 1445.5,570.8 1446.0,570.8 1446.5,570.8 1447.0,570.8 1447.5,570.8 1448.0,570.8 1448.5,570.8 1449.0,570.8 1449.5,570.8 1450.0,570.8 1450.5,570.9 1451.0,570.9 1451.5,570.9 1452.0,570.9 1452.5,570.9 1453.0,570.9 1453.5,570.9 1454.0,570.9 1454.5,570.9 1455.0,570.9 1455.5,570.9 1456.0,570.9 1456.5,570.9 1457.0,570.9 1457.5,570.9 1458.0,571.0 1458.5,571.0 1459.0,571.0 1459.5,571.0 1460.0,571.0 1460.5,571.0 1461.0,571.0 1461.5,571.0 1462.0,571.0 1462.5,571.0 1463.0,571.0 1463.5,571.0 1464.0,571.0 1464.5,571.0 1465.0,571.0 1465.5,571.1 1466.0,571.1 1466.5,571.1 1467.0,571.1 1467.5,571.1 1468.0,571.1 1468.5,571.1 1469.0,571.1 1469.5,571.1 1470.0,571.1 1470.5,571.1 1471.0,571.1 1471.5,571.1 1472.0,571.1 1472.5,571.1 1473.0,571.1 1473.5,571.1 1474.0,571.2 1474.5,571.2 1475.0,571.2 1475.5,571.2 1476.0,571.2 1476.5,571.2 1477.0,571.2 1477.5,571.2 1478.0,571.2 1478.5,571.2 1479.0,571.2 1479.5,571.2 1480.0,571.2 1480.5,571.2 1481.0,571.2 1481.5,571.2 1482.0,571.2 1482.5,571.3 1483.0,571.3 1483.5,571.3 1484.0,571.3 1484.5,571.3 1485.0,571.3 1485.5,571.3 1486.0,571.3 1486.5,571.3 1487.0,571.3 1487.5,571.3 1488.0,571.3 1488.5,571.3 1489.0,571.3 1489.5,571.3 1490.0,571.3 1490.5,571.3 1491.0,571.3 1491.5,571.3 1492.0,571.4 1492.5,571.4 1493.0,571.4 1493.5,571.4 1494.0,571.4 1494.5,571.4 1495.0,571.4 1495.5,571.4 1496.0,571.4 1496.5,571.4 1497.0,571.4 1497.5,571.4 1498.0,571.4 1498.5,571.4 1499.0,571.4 1499.5,571.4 1500.0,571.4 1500.5,571.4 1501.0,571.4 1501.5,571.4 1502.0,571.5 1502.5,571.5 1503.0,571.5 1503.5,571.5 1504.0,571.5 1504.5,571.5 1505.0,571.5 1505.5,571.5 1506.0,571.5 1506.5,571.5 1507.0,571.5 1507.5,571.5 1508.0,571.5 1508.5,571.5 1509.0,571.5 1509.5,571.5 1510.0,571.5 1510.5,571.5 1511.0,571.5 1511.5,571.5 1512.0,571.5 1512.5,571.6 1513.0,571.6 1513.5,571.6 1514.0,571.6 1514.5,571.6 1515.0,571.6 1515.5,571.6 1516.0,571.6 1516.5,571.6 1517.0,571.6 1517.5,571.6 1518.0,571.6 1518.5,571.6 1519.0,571.6 1519.5,571.6 1520.0,571.6 1520.5,571.6 1521.0,571.6 1521.5,571.6 1522.0,571.6 1522.5,571.6 1523.0,571.6 1523.5,571.6 1524.0,571.7 1524.5,571.7 1525.0,571.7 1525.5,571.7 1526.0,571.7 1526.5,571.7 1527.0,571.7 1527.5,571.7 1528.0,571.7 1528.5,571.7 1529.0,571.7 1529.5,571.7 1530.0,571.7 1530.5,571.7 1531.0,571.7 1531.5,571.7 1532.0,571.7 1532.5,571.7 1533.0,571.7"/><polyline fill="none" stroke="#D040D0" stroke-width="1.6" stroke-linejoin="round" points="883.5,681.0 884.0,681.0 884.5,681.0 885.0,679.9 885.5,679.9 886.0,679.9 886.5,679.9 887.0,679.9 887.5,679.9 888.0,679.9 888.5,679.9 889.0,679.9 889.5,679.9 890.0,679.9 890.5,679.9 891.0,679.9 891.5,679.9 892.0,679.9 892.5,679.9 893.0,679.9 893.5,679.9 894.0,679.9 894.5,679.9 895.0,679.9 895.5,679.9 896.0,679.9 896.5,679.9 897.0,679.9 897.5,679.9 898.0,679.9 898.5,679.9 899.0,679.9 899.5,679.9 900.0,679.9 900.5,679.9 901.0,679.9 901.5,679.9 902.0,679.9 902.5,679.9 903.0,679.9 903.5,679.9 904.0,679.9 904.5,679.9 905.0,679.9 905.5,679.9 906.0,679.9 906.5,679.9 907.0,679.9 907.5,679.9 908.0,679.9 908.5,679.9 909.0,679.9 909.5,679.9 910.0,679.9 910.5,679.9 911.0,679.9 911.5,679.9 912.0,679.9 912.5,679.9 913.0,679.9 913.5,679.9 914.0,679.9 914.5,679.9 915.0,679.9 915.5,679.9 916.0,679.9 916.5,679.9 917.0,679.9 917.5,679.9 918.0,679.9 918.5,679.9 919.0,679.9 919.5,679.9 920.0,679.9 920.5,679.9 921.0,679.9 921.5,679.9 922.0,679.9 922.5,679.9 923.0,679.9 923.5,679.9 924.0,679.9 924.5,679.9 925.0,679.9 925.5,679.9 926.0,679.9 926.5,679.9 927.0,679.9 927.5,679.9 928.0,679.9 928.5,679.9 929.0,679.9 929.5,679.9 930.0,679.9 930.5,679.9 931.0,679.9 931.5,679.9 932.0,679.9 932.5,679.9 933.0,679.9 933.5,679.9 934.0,679.9 934.5,679.9 935.0,679.9 935.5,679.9 936.0,679.9 936.5,679.8 937.0,679.8 937.5,679.8 938.0,679.8 938.5,679.8 939.0,679.8 939.5,679.8 940.0,679.8 940.5,679.8 941.0,679.8 941.5,679.8 942.0,679.8 942.5,679.8 943.0,679.8 943.5,679.8 944.0,679.8 944.5,679.8 945.0,679.8 945.5,679.8 946.0,679.8 946.5,679.8 947.0,679.8 947.5,679.8 948.0,679.8 948.5,679.8 949.0,679.8 949.5,679.8 950.0,679.8 950.5,679.8 951.0,679.8 951.5,679.8 952.0,679.8 952.5,679.8 953.0,679.8 953.5,679.8 954.0,679.8 954.5,679.8 955.0,679.8 955.5,679.8 956.0,679.8 956.5,679.8 957.0,679.8 957.5,679.8 958.0,679.8 958.5,679.8 959.0,679.8 959.5,679.8 960.0,679.7 960.5,679.7 961.0,679.7 961.5,679.7 962.0,679.7 962.5,679.7 963.0,679.7 963.5,679.7 964.0,679.7 964.5,679.7 965.0,679.7 965.5,679.7 966.0,679.7 966.5,679.7 967.0,679.7 967.5,679.7 968.0,679.7 968.5,679.7 969.0,679.7 969.5,679.7 970.0,679.7 970.5,679.7 971.0,679.7 971.5,679.7 972.0,679.7 972.5,679.7 973.0,679.7 973.5,679.7 974.0,679.7 974.5,679.7 975.0,679.7 975.5,679.7 976.0,679.6 976.5,679.6 977.0,679.6 977.5,679.6 978.0,679.6 978.5,679.6 979.0,679.6 979.5,679.6 980.0,679.6 980.5,679.6 981.0,679.6 981.5,679.6 982.0,679.6 982.5,679.6 983.0,679.6 983.5,679.6 984.0,679.6 984.5,679.6 985.0,679.6 985.5,679.6 986.0,679.6 986.5,679.6 987.0,679.6 987.5,679.6 988.0,679.6 988.5,679.6 989.0,679.5 989.5,679.5 990.0,679.5 990.5,679.5 991.0,679.5 991.5,679.5 992.0,679.5 992.5,679.5 993.0,679.5 993.5,679.5 994.0,679.5 994.5,679.5 995.0,679.5 995.5,679.5 996.0,679.5 996.5,679.5 997.0,679.5 997.5,679.5 998.0,679.5 998.5,679.5 999.0,679.5 999.5,679.4 1000.0,679.4 1000.5,679.4 1001.0,679.4 1001.5,679.4 1002.0,679.4 1002.5,679.4 1003.0,679.4 1003.5,679.4 1004.0,679.4 1004.5,679.4 1005.0,679.4 1005.5,679.4 1006.0,679.4 1006.5,679.4 1007.0,679.4 1007.5,679.4 1008.0,679.4 1008.5,679.3 1009.0,679.3 1009.5,679.3 1010.0,679.3 1010.5,679.3 1011.0,679.3 1011.5,679.3 1012.0,679.3 1012.5,679.3 1013.0,679.3 1013.5,679.3 1014.0,679.3 1014.5,679.3 1015.0,679.3 1015.5,679.3 1016.0,679.2 1016.5,679.2 1017.0,679.2 1017.5,679.2 1018.0,679.2 1018.5,679.2 1019.0,679.2 1019.5,679.2 1020.0,679.2 1020.5,679.2 1021.0,679.2 1021.5,679.2 1022.0,679.2 1022.5,679.2 1023.0,679.1 1023.5,679.1 1024.0,679.1 1024.5,679.1 1025.0,679.1 1025.5,679.1 1026.0,679.1 1026.5,679.1 1027.0,679.1 1027.5,679.1 1028.0,679.1 1028.5,679.1 1029.0,679.1 1029.5,679.0 1030.0,679.0 1030.5,679.0 1031.0,679.0 1031.5,679.0 1032.0,679.0 1032.5,679.0 1033.0,679.0 1033.5,679.0 1034.0,679.0 1034.5,679.0 1035.0,678.9 1035.5,678.9 1036.0,678.9 1036.5,678.9 1037.0,678.9 1037.5,678.9 1038.0,678.9 1038.5,678.9 1039.0,678.9 1039.5,678.9 1040.0,678.8 1040.5,678.8 1041.0,678.8 1041.5,678.8 1042.0,678.8 1042.5,678.8 1043.0,678.8 1043.5,678.8 1044.0,678.8 1044.5,678.7 1045.0,678.7 1045.5,678.7 1046.0,678.7 1046.5,678.7 1047.0,678.7 1047.5,678.7 1048.0,678.7 1048.5,678.7 1049.0,678.6 1049.5,678.6 1050.0,678.6 1050.5,678.6 1051.0,678.6 1051.5,678.6 1052.0,678.6 1052.5,678.6 1053.0,678.5 1053.5,678.5 1054.0,678.5 1054.5,678.5 1055.0,678.5 1055.5,678.5 1056.0,678.5 1056.5,678.4 1057.0,678.4 1057.5,678.4 1058.0,678.4 1058.5,678.4 1059.0,678.4 1059.5,678.4 1060.0,678.3 1060.5,678.3 1061.0,678.3 1061.5,678.3 1062.0,678.3 1062.5,678.3 1063.0,678.2 1063.5,678.2 1064.0,678.2 1064.5,678.2 1065.0,678.2 1065.5,678.2 1066.0,678.2 1066.5,678.1 1067.0,678.1 1067.5,678.1 1068.0,678.1 1068.5,678.1 1069.0,678.0 1069.5,678.0 1070.0,678.0 1070.5,678.0 1071.0,678.0 1071.5,678.0 1072.0,677.9 1072.5,677.9 1073.0,677.9 1073.5,677.9 1074.0,677.9 1074.5,677.8 1075.0,677.8 1075.5,677.8 1076.0,677.8 1076.5,677.8 1077.0,677.7 1077.5,677.7 1078.0,677.7 1078.5,677.7 1079.0,677.6 1079.5,677.6 1080.0,677.6 1080.5,677.6 1081.0,677.6 1081.5,677.5 1082.0,677.5 1082.5,677.5 1083.0,677.5 1083.5,677.4 1084.0,677.4 1084.5,677.4 1085.0,677.4 1085.5,677.3 1086.0,677.3 1086.5,677.3 1087.0,677.3 1087.5,677.2 1088.0,677.2 1088.5,677.2 1089.0,677.1 1089.5,677.1 1090.0,677.1 1090.5,677.1 1091.0,677.0 1091.5,677.0 1092.0,677.0 1092.5,676.9 1093.0,676.9 1093.5,676.9 1094.0,676.8 1094.5,676.8 1095.0,676.8 1095.5,676.8 1096.0,676.7 1096.5,676.7 1097.0,676.7 1097.5,676.6 1098.0,676.6 1098.5,676.6 1099.0,676.5 1099.5,676.5 1100.0,676.4 1100.5,676.4 1101.0,676.4 1101.5,676.3 1102.0,676.3 1102.5,676.3 1103.0,676.2 1103.5,676.2 1104.0,676.1 1104.5,676.1 1105.0,676.1 1105.5,676.0 1106.0,676.0 1106.5,675.9 1107.0,675.9 1107.5,675.8 1108.0,675.8 1108.5,675.8 1109.0,675.7 1109.5,675.7 1110.0,675.6 1110.5,675.6 1111.0,675.5 1111.5,675.5 1112.0,675.4 1112.5,675.4 1113.0,675.3 1113.5,675.3 1114.0,675.2 1114.5,675.2 1115.0,675.1 1115.5,675.1 1116.0,675.0 1116.5,674.9 1117.0,674.9 1117.5,674.8 1118.0,674.8 1118.5,674.7 1119.0,674.7 1119.5,674.6 1120.0,674.5 1120.5,674.5 1121.0,674.4 1121.5,674.3 1122.0,674.3 1122.5,674.2 1123.0,674.1 1123.5,674.1 1124.0,674.0 1124.5,673.9 1125.0,673.9 1125.5,673.8 1126.0,673.7 1126.5,673.6 1127.0,673.6 1127.5,673.5 1128.0,673.4 1128.5,673.3 1129.0,673.3 1129.5,673.2 1130.0,673.1 1130.5,673.0 1131.0,672.9 1131.5,672.8 1132.0,672.7 1132.5,672.7 1133.0,672.6 1133.5,672.5 1134.0,672.4 1134.5,672.3 1135.0,672.2 1135.5,672.1 1136.0,672.0 1136.5,671.9 1137.0,671.8 1137.5,671.7 1138.0,671.6 1138.5,671.4 1139.0,671.3 1139.5,671.2 1140.0,671.1 1140.5,671.0 1141.0,670.9 1141.5,670.8 1142.0,670.6 1142.5,670.5 1143.0,670.4 1143.5,670.2 1144.0,670.1 1144.5,670.0 1145.0,669.8 1145.5,669.7 1146.0,669.6 1146.5,669.4 1147.0,669.3 1147.5,669.1 1148.0,669.0 1148.5,668.8 1149.0,668.7 1149.5,668.5 1150.0,668.3 1150.5,668.2 1151.0,668.0 1151.5,667.8 1152.0,667.6 1152.5,667.5 1153.0,667.3 1153.5,667.1 1154.0,666.9 1154.5,666.7 1155.0,666.5 1155.5,666.3 1156.0,666.1 1156.5,665.9 1157.0,665.7 1157.5,665.5 1158.0,665.2 1158.5,665.0 1159.0,664.8 1159.5,664.6 1160.0,664.3 1160.5,664.1 1161.0,663.8 1161.5,663.6 1162.0,663.3 1162.5,663.1 1163.0,662.8 1163.5,662.5 1164.0,662.2 1164.5,661.9 1165.0,661.7 1165.5,661.4 1166.0,661.1 1166.5,660.8 1167.0,660.4 1167.5,660.1 1168.0,659.8 1168.5,659.5 1169.0,659.1 1169.5,658.8 1170.0,658.4 1170.5,658.1 1171.0,657.7 1171.5,657.3 1172.0,656.9 1172.5,656.5 1173.0,656.1 1173.5,655.7 1174.0,655.3 1174.5,654.9 1175.0,654.5 1175.5,654.0 1176.0,653.6 1176.5,653.1 1177.0,652.7 1177.5,652.2 1178.0,651.7 1178.5,651.2 1179.0,650.7 1179.5,650.2 1180.0,649.7 1180.5,649.2 1181.0,648.6 1181.5,648.1 1182.0,647.5 1182.5,647.0 1183.0,646.4 1183.5,645.8 1184.0,645.2 1184.5,644.7 1185.0,644.0 1185.5,643.4 1186.0,642.8 1186.5,642.2 1187.0,641.5 1187.5,640.9 1188.0,640.2 1188.5,639.6 1189.0,638.9 1189.5,638.3 1190.0,637.6 1190.5,636.9 1191.0,636.2 1191.5,635.5 1192.0,634.8 1192.5,634.1 1193.0,633.4 1193.5,632.7 1194.0,632.0 1194.5,631.3 1195.0,630.6 1195.5,629.9 1196.0,629.2 1196.5,628.6 1197.0,627.9 1197.5,627.2 1198.0,626.5 1198.5,625.9 1199.0,625.2 1199.5,624.6 1200.0,624.0 1200.5,623.4 1201.0,622.8 1201.5,622.2 1202.0,621.7 1202.5,621.1 1203.0,620.6 1203.5,620.1 1204.0,619.7 1204.5,619.3 1205.0,618.8 1205.5,618.5 1206.0,618.1 1206.5,617.8 1207.0,617.5 1207.5,617.3 1208.0,617.0 1208.5,616.9 1209.0,616.7 1209.5,616.6 1210.0,616.5 1210.5,616.5 1211.0,616.4 1211.5,616.5 1212.0,616.5 1212.5,616.6 1213.0,616.8 1213.5,616.9 1214.0,617.1 1214.5,617.4 1215.0,617.6 1215.5,617.9 1216.0,618.3 1216.5,618.6 1217.0,619.0 1217.5,619.5 1218.0,619.9 1218.5,620.4 1219.0,620.9 1219.5,621.4 1220.0,621.9 1220.5,622.5 1221.0,623.1 1221.5,623.7 1222.0,624.3 1222.5,624.9 1223.0,625.5 1223.5,626.2 1224.0,626.8 1224.5,627.5 1225.0,628.2 1225.5,628.9 1226.0,629.6 1226.5,630.3 1227.0,631.0 1227.5,631.7 1228.0,632.4 1228.5,633.1 1229.0,633.8 1229.5,634.5 1230.0,635.1 1230.5,635.8 1231.0,636.5 1231.5,637.2 1232.0,637.9 1232.5,638.6 1233.0,639.2 1233.5,639.9 1234.0,640.6 1234.5,641.2 1235.0,641.9 1235.5,642.5 1236.0,643.1 1236.5,643.7 1237.0,644.3 1237.5,644.9 1238.0,645.5 1238.5,646.1 1239.0,646.7 1239.5,647.3 1240.0,647.8 1240.5,648.4 1241.0,648.9 1241.5,649.4 1242.0,650.0 1242.5,650.5 1243.0,651.0 1243.5,651.5 1244.0,652.0 1244.5,652.4 1245.0,652.9 1245.5,653.4 1246.0,653.8 1246.5,654.3 1247.0,654.7 1247.5,655.1 1248.0,655.5 1248.5,655.9 1249.0,656.3 1249.5,656.7 1250.0,657.1 1250.5,657.5 1251.0,657.9 1251.5,658.2 1252.0,658.6 1252.5,659.0 1253.0,659.3 1253.5,659.6 1254.0,660.0 1254.5,660.3 1255.0,660.6 1255.5,660.9 1256.0,661.2 1256.5,661.5 1257.0,661.8 1257.5,662.1 1258.0,662.4 1258.5,662.7 1259.0,662.9 1259.5,663.2 1260.0,663.5 1260.5,663.7 1261.0,664.0 1261.5,664.2 1262.0,664.5 1262.5,664.7 1263.0,664.9 1263.5,665.2 1264.0,665.4 1264.5,665.6 1265.0,665.8 1265.5,666.0 1266.0,666.2 1266.5,666.4 1267.0,666.6 1267.5,666.8 1268.0,667.0 1268.5,667.2 1269.0,667.4 1269.5,667.6 1270.0,667.8 1270.5,667.9 1271.0,668.1 1271.5,668.3 1272.0,668.5 1272.5,668.6 1273.0,668.8 1273.5,668.9 1274.0,669.1 1274.5,669.2 1275.0,669.4 1275.5,669.5 1276.0,669.7 1276.5,669.8 1277.0,670.0 1277.5,670.1 1278.0,670.2 1278.5,670.4 1279.0,670.5 1279.5,670.6 1280.0,670.7 1280.5,670.9 1281.0,671.0 1281.5,671.1 1282.0,671.2 1282.5,671.3 1283.0,671.4 1283.5,671.6 1284.0,671.7 1284.5,671.8 1285.0,671.9 1285.5,672.0 1286.0,672.1 1286.5,672.2 1287.0,672.3 1287.5,672.4 1288.0,672.5 1288.5,672.6 1289.0,672.7 1289.5,672.8 1290.0,672.8 1290.5,672.9 1291.0,673.0 1291.5,673.1 1292.0,673.2 1292.5,673.3 1293.0,673.4 1293.5,673.4 1294.0,673.5 1294.5,673.6 1295.0,673.7 1295.5,673.7 1296.0,673.8 1296.5,673.9 1297.0,674.0 1297.5,674.0 1298.0,674.1 1298.5,674.2 1299.0,674.2 1299.5,674.3 1300.0,674.4 1300.5,674.4 1301.0,674.5 1301.5,674.6 1302.0,674.6 1302.5,674.7 1303.0,674.8 1303.5,674.8 1304.0,674.9 1304.5,674.9 1305.0,675.0 1305.5,675.1 1306.0,675.1 1306.5,675.2 1307.0,675.2 1307.5,675.3 1308.0,675.3 1308.5,675.4 1309.0,675.4 1309.5,675.5 1310.0,675.5 1310.5,675.6 1311.0,675.6 1311.5,675.7 1312.0,675.7 1312.5,675.8 1313.0,675.8 1313.5,675.9 1314.0,675.9 1314.5,676.0 1315.0,676.0 1315.5,676.0 1316.0,676.1 1316.5,676.1 1317.0,676.2 1317.5,676.2 1318.0,676.2 1318.5,676.3 1319.0,676.3 1319.5,676.4 1320.0,676.4 1320.5,676.4 1321.0,676.5 1321.5,676.5 1322.0,676.6 1322.5,676.6 1323.0,676.6 1323.5,676.7 1324.0,676.7 1324.5,676.7 1325.0,676.8 1325.5,676.8 1326.0,676.8 1326.5,676.9 1327.0,676.9 1327.5,676.9 1328.0,677.0 1328.5,677.0 1329.0,677.0 1329.5,677.1 1330.0,677.1 1330.5,677.1 1331.0,677.1 1331.5,677.2 1332.0,677.2 1332.5,677.2 1333.0,677.3 1333.5,677.3 1334.0,677.3 1334.5,677.3 1335.0,677.4 1335.5,677.4 1336.0,677.4 1336.5,677.5 1337.0,677.5 1337.5,677.5 1338.0,677.5 1338.5,677.6 1339.0,677.6 1339.5,677.6 1340.0,677.6 1340.5,677.7 1341.0,677.7 1341.5,677.7 1342.0,677.7 1342.5,677.7 1343.0,677.8 1343.5,677.8 1344.0,677.8 1344.5,677.8 1345.0,677.9 1345.5,677.9 1346.0,677.9 1346.5,677.9 1347.0,677.9 1347.5,678.0 1348.0,678.0 1348.5,678.0 1349.0,678.0 1349.5,678.0 1350.0,678.1 1350.5,678.1 1351.0,678.1 1351.5,678.1 1352.0,678.1 1352.5,678.2 1353.0,678.2 1353.5,678.2 1354.0,678.2 1354.5,678.2 1355.0,678.3 1355.5,678.3 1356.0,678.3 1356.5,678.3 1357.0,678.3 1357.5,678.3 1358.0,678.4 1358.5,678.4 1359.0,678.4 1359.5,678.4 1360.0,678.4 1360.5,678.4 1361.0,678.5 1361.5,678.5 1362.0,678.5 1362.5,678.5 1363.0,678.5 1363.5,678.5 1364.0,678.5 1364.5,678.6 1365.0,678.6 1365.5,678.6 1366.0,678.6 1366.5,678.6 1367.0,678.6 1367.5,678.6 1368.0,678.7 1368.5,678.7 1369.0,678.7 1369.5,678.7 1370.0,678.7 1370.5,678.7 1371.0,678.7 1371.5,678.8 1372.0,678.8 1372.5,678.8 1373.0,678.8 1373.5,678.8 1374.0,678.8 1374.5,678.8 1375.0,678.8 1375.5,678.9 1376.0,678.9 1376.5,678.9 1377.0,678.9 1377.5,678.9 1378.0,678.9 1378.5,678.9 1379.0,678.9 1379.5,679.0 1380.0,679.0 1380.5,679.0 1381.0,679.0 1381.5,679.0 1382.0,679.0 1382.5,679.0 1383.0,679.0 1383.5,679.0 1384.0,679.1 1384.5,679.1 1385.0,679.1 1385.5,679.1 1386.0,679.1 1386.5,679.1 1387.0,679.1 1387.5,679.1 1388.0,679.1 1388.5,679.1 1389.0,679.2 1389.5,679.2 1390.0,679.2 1390.5,679.2 1391.0,679.2 1391.5,679.2 1392.0,679.2 1392.5,679.2 1393.0,679.2 1393.5,679.2 1394.0,679.2 1394.5,679.3 1395.0,679.3 1395.5,679.3 1396.0,679.3 1396.5,679.3 1397.0,679.3 1397.5,679.3 1398.0,679.3 1398.5,679.3 1399.0,679.3 1399.5,679.3 1400.0,679.3 1400.5,679.4 1401.0,679.4 1401.5,679.4 1402.0,679.4 1402.5,679.4 1403.0,679.4 1403.5,679.4 1404.0,679.4 1404.5,679.4 1405.0,679.4 1405.5,679.4 1406.0,679.4 1406.5,679.5 1407.0,679.5 1407.5,679.5 1408.0,679.5 1408.5,679.5 1409.0,679.5 1409.5,679.5 1410.0,679.5 1410.5,679.5 1411.0,679.5 1411.5,679.5 1412.0,679.5 1412.5,679.5 1413.0,679.5 1413.5,679.5 1414.0,679.6 1414.5,679.6 1415.0,679.6 1415.5,679.6 1416.0,679.6 1416.5,679.6 1417.0,679.6 1417.5,679.6 1418.0,679.6 1418.5,679.6 1419.0,679.6 1419.5,679.6 1420.0,679.6 1420.5,679.6 1421.0,679.6 1421.5,679.7 1422.0,679.7 1422.5,679.7 1423.0,679.7 1423.5,679.7 1424.0,679.7 1424.5,679.7 1425.0,679.7 1425.5,679.7 1426.0,679.7 1426.5,679.7 1427.0,679.7 1427.5,679.7 1428.0,679.7 1428.5,679.7 1429.0,679.7 1429.5,679.7 1430.0,679.7 1430.5,679.8 1431.0,679.8 1431.5,679.8 1432.0,679.8 1432.5,679.8 1433.0,679.8 1433.5,679.8 1434.0,679.8 1434.5,679.8 1435.0,679.8 1435.5,679.8 1436.0,679.8 1436.5,679.8 1437.0,679.8 1437.5,679.8 1438.0,679.8 1438.5,679.8 1439.0,679.8 1439.5,679.8 1440.0,679.8 1440.5,679.9 1441.0,679.9 1441.5,679.9 1442.0,679.9 1442.5,679.9 1443.0,679.9 1443.5,679.9 1444.0,679.9 1444.5,679.9 1445.0,679.9 1445.5,679.9 1446.0,679.9 1446.5,679.9 1447.0,679.9 1447.5,679.9 1448.0,679.9 1448.5,679.9 1449.0,679.9 1449.5,679.9 1450.0,679.9 1450.5,679.9 1451.0,679.9 1451.5,679.9 1452.0,680.0 1452.5,680.0 1453.0,680.0 1453.5,680.0 1454.0,680.0 1454.5,680.0 1455.0,680.0 1455.5,680.0 1456.0,680.0 1456.5,680.0 1457.0,680.0 1457.5,680.0 1458.0,680.0 1458.5,680.0 1459.0,680.0 1459.5,680.0 1460.0,680.0 1460.5,680.0 1461.0,680.0 1461.5,680.0 1462.0,680.0 1462.5,680.0 1463.0,680.0 1463.5,680.0 1464.0,680.0 1464.5,680.0 1465.0,680.1 1465.5,680.1 1466.0,680.1 1466.5,680.1 1467.0,680.1 1467.5,680.1 1468.0,680.1 1468.5,680.1 1469.0,680.1 1469.5,680.1 1470.0,680.1 1470.5,680.1 1471.0,680.1 1471.5,680.1 1472.0,680.1 1472.5,680.1 1473.0,680.1 1473.5,680.1 1474.0,680.1 1474.5,680.1 1475.0,680.1 1475.5,680.1 1476.0,680.1 1476.5,680.1 1477.0,680.1 1477.5,680.1 1478.0,680.1 1478.5,680.1 1479.0,680.1 1479.5,680.1 1480.0,680.1 1480.5,680.2 1481.0,680.2 1481.5,680.2 1482.0,680.2 1482.5,680.2 1483.0,680.2 1483.5,680.2 1484.0,680.2 1484.5,680.2 1485.0,680.2 1485.5,680.2 1486.0,680.2 1486.5,680.2 1487.0,680.2 1487.5,680.2 1488.0,680.2 1488.5,680.2 1489.0,680.2 1489.5,680.2 1490.0,680.2 1490.5,680.2 1491.0,680.2 1491.5,680.2 1492.0,680.2 1492.5,680.2 1493.0,680.2 1493.5,680.2 1494.0,680.2 1494.5,680.2 1495.0,680.2 1495.5,680.2 1496.0,680.2 1496.5,680.2 1497.0,680.2 1497.5,680.2 1498.0,680.2 1498.5,680.2 1499.0,680.2 1499.5,680.3 1500.0,680.3 1500.5,680.3 1501.0,680.3 1501.5,680.3 1502.0,680.3 1502.5,680.3 1503.0,680.3 1503.5,680.3 1504.0,680.3 1504.5,680.3 1505.0,680.3 1505.5,680.3 1506.0,680.3 1506.5,680.3 1507.0,680.3 1507.5,680.3 1508.0,680.3 1508.5,680.3 1509.0,680.3 1509.5,680.3 1510.0,680.3 1510.5,680.3 1511.0,680.3 1511.5,680.3 1512.0,680.3 1512.5,680.3 1513.0,680.3 1513.5,680.3 1514.0,680.3 1514.5,680.3 1515.0,680.3 1515.5,680.3 1516.0,680.3 1516.5,680.3 1517.0,680.3 1517.5,680.3 1518.0,680.3 1518.5,680.3 1519.0,680.3 1519.5,680.3 1520.0,680.3 1520.5,680.3 1521.0,680.3 1521.5,680.3 1522.0,680.3 1522.5,680.4 1523.0,680.4 1523.5,680.4 1524.0,680.4 1524.5,680.4 1525.0,680.4 1525.5,680.4 1526.0,680.4 1526.5,680.4 1527.0,680.4 1527.5,680.4 1528.0,680.4 1528.5,680.4 1529.0,680.4 1529.5,680.4 1530.0,680.4 1530.5,680.4 1531.0,680.4 1531.5,680.4 1532.0,680.4 1532.5,680.4 1533.0,680.4"/><rect x="883.5" y="183.5" width="651" height="88.5" fill="none" stroke="#BEBEBE" stroke-width="1.6"/><rect x="883.5" y="285.5" width="651" height="89" fill="none" stroke="#BEBEBE" stroke-width="1.6"/><rect x="883.5" y="388.0" width="651" height="88.5" fill="none" stroke="#BEBEBE" stroke-width="1.6"/><rect x="883.5" y="490.0" width="651" height="88.5" fill="none" stroke="#BEBEBE" stroke-width="1.6"/><rect x="883.5" y="592.0" width="651" height="88.5" fill="none" stroke="#BEBEBE" stroke-width="1.6"/><text x="872.5" y="190.8" font-family="'Liberation Sans',sans-serif" font-size="18.5" fill="#E02828" text-anchor="end" font-weight="normal" textLength="12" lengthAdjust="spacingAndGlyphs" >14</text><text x="872.5" y="203.0" font-family="'Liberation Sans',sans-serif" font-size="18.5" fill="#E02828" text-anchor="end" font-weight="normal" textLength="12" lengthAdjust="spacingAndGlyphs" >12</text><text x="872.5" y="215.20000000000002" font-family="'Liberation Sans',sans-serif" font-size="18.5" fill="#E02828" text-anchor="end" font-weight="normal" textLength="12" lengthAdjust="spacingAndGlyphs" >10</text><text x="872.5" y="227.4" font-family="'Liberation Sans',sans-serif" font-size="18.5" fill="#E02828" text-anchor="end" font-weight="normal" textLength="6.5" lengthAdjust="spacingAndGlyphs" >8</text><text x="872.5" y="239.60000000000002" font-family="'Liberation Sans',sans-serif" font-size="18.5" fill="#E02828" text-anchor="end" font-weight="normal" textLength="6.5" lengthAdjust="spacingAndGlyphs" >6</text><text x="872.5" y="251.8" font-family="'Liberation Sans',sans-serif" font-size="18.5" fill="#E02828" text-anchor="end" font-weight="normal" textLength="6.5" lengthAdjust="spacingAndGlyphs" >4</text><text x="872.5" y="264.0" font-family="'Liberation Sans',sans-serif" font-size="18.5" fill="#E02828" text-anchor="end" font-weight="normal" textLength="6.5" lengthAdjust="spacingAndGlyphs" >2</text><text x="872.5" y="276.2" font-family="'Liberation Sans',sans-serif" font-size="18.5" fill="#E02828" text-anchor="end" font-weight="normal" textLength="6.5" lengthAdjust="spacingAndGlyphs" >0</text><text x="872" y="290.5" font-family="'Liberation Sans',sans-serif" font-size="14" fill="#28C828" text-anchor="end" font-weight="normal" textLength="14" lengthAdjust="spacingAndGlyphs" >10</text><text x="872" y="312.6" font-family="'Liberation Sans',sans-serif" font-size="14" fill="#28C828" text-anchor="end" font-weight="normal" textLength="7" lengthAdjust="spacingAndGlyphs" >5</text><text x="872" y="335" font-family="'Liberation Sans',sans-serif" font-size="14" fill="#28C828" text-anchor="end" font-weight="normal" textLength="7" lengthAdjust="spacingAndGlyphs" >0</text><text x="872" y="357.4" font-family="'Liberation Sans',sans-serif" font-size="14" fill="#28C828" text-anchor="end" font-weight="normal" textLength="11" lengthAdjust="spacingAndGlyphs" >-5</text><text x="872" y="378" font-family="'Liberation Sans',sans-serif" font-size="14" fill="#28C828" text-anchor="end" font-weight="normal" textLength="18" lengthAdjust="spacingAndGlyphs" >-10</text><text x="872" y="394.5" font-family="'Liberation Sans',sans-serif" font-size="14" fill="#E4E460" text-anchor="end" font-weight="normal" textLength="29" lengthAdjust="spacingAndGlyphs" >40dB</text><text x="872" y="411.3" font-family="'Liberation Sans',sans-serif" font-size="14" fill="#E4E460" text-anchor="end" font-weight="normal" textLength="29" lengthAdjust="spacingAndGlyphs" >20dB</text><text x="872" y="428.6" font-family="'Liberation Sans',sans-serif" font-size="14" fill="#E4E460" text-anchor="end" font-weight="normal" textLength="22" lengthAdjust="spacingAndGlyphs" >0dB</text><text x="872" y="446" font-family="'Liberation Sans',sans-serif" font-size="14" fill="#E4E460" text-anchor="end" font-weight="normal" textLength="33" lengthAdjust="spacingAndGlyphs" >-20dB</text><text x="872" y="463.4" font-family="'Liberation Sans',sans-serif" font-size="14" fill="#E4E460" text-anchor="end" font-weight="normal" textLength="33" lengthAdjust="spacingAndGlyphs" >-40dB</text><text x="872" y="480" font-family="'Liberation Sans',sans-serif" font-size="14" fill="#E4E460" text-anchor="end" font-weight="normal" textLength="33" lengthAdjust="spacingAndGlyphs" >-60dB</text><text x="872" y="495" font-family="'Liberation Sans',sans-serif" font-size="14" fill="#2020B8" text-anchor="end" font-weight="normal" textLength="28" lengthAdjust="spacingAndGlyphs" >100°</text><text x="872" y="517.7" font-family="'Liberation Sans',sans-serif" font-size="14" fill="#2020B8" text-anchor="end" font-weight="normal" textLength="21" lengthAdjust="spacingAndGlyphs" >50°</text><text x="872" y="539.9" font-family="'Liberation Sans',sans-serif" font-size="14" fill="#2020B8" text-anchor="end" font-weight="normal" textLength="14" lengthAdjust="spacingAndGlyphs" >0°</text><text x="872" y="562.1" font-family="'Liberation Sans',sans-serif" font-size="14" fill="#2020B8" text-anchor="end" font-weight="normal" textLength="25" lengthAdjust="spacingAndGlyphs" >-50°</text><text x="872" y="583" font-family="'Liberation Sans',sans-serif" font-size="14" fill="#2020B8" text-anchor="end" font-weight="normal" textLength="32" lengthAdjust="spacingAndGlyphs" >-100°</text><text x="872" y="597.5" font-family="'Liberation Sans',sans-serif" font-size="14" fill="#C840C8" text-anchor="end" font-weight="normal" textLength="34" lengthAdjust="spacingAndGlyphs" >800µs</text><text x="872" y="619.6" font-family="'Liberation Sans',sans-serif" font-size="14" fill="#C840C8" text-anchor="end" font-weight="normal" textLength="34" lengthAdjust="spacingAndGlyphs" >600µs</text><text x="872" y="642" font-family="'Liberation Sans',sans-serif" font-size="14" fill="#C840C8" text-anchor="end" font-weight="normal" textLength="34" lengthAdjust="spacingAndGlyphs" >400µs</text><text x="872" y="664.3" font-family="'Liberation Sans',sans-serif" font-size="14" fill="#C840C8" text-anchor="end" font-weight="normal" textLength="34" lengthAdjust="spacingAndGlyphs" >200µs</text><text x="872" y="685" font-family="'Liberation Sans',sans-serif" font-size="14" fill="#C840C8" text-anchor="end" font-weight="normal" textLength="14" lengthAdjust="spacingAndGlyphs" >0s</text><text transform="translate(851,228) rotate(-90)" font-family="'Liberation Sans',sans-serif" font-size="14" fill="#E02828" text-anchor="middle" textLength="28" lengthAdjust="spacingAndGlyphs">Real</text><text transform="translate(848,330) rotate(-90)" font-family="'Liberation Sans',sans-serif" font-size="14" fill="#28C828" text-anchor="middle" textLength="29" lengthAdjust="spacingAndGlyphs">Imag</text><text transform="translate(832,432.5) rotate(-90)" font-family="'Liberation Sans',sans-serif" font-size="14" fill="#E4E460" text-anchor="middle" textLength="63" lengthAdjust="spacingAndGlyphs">Magnitude</text><text transform="translate(833,535) rotate(-90)" font-family="'Liberation Sans',sans-serif" font-size="14" fill="#2020B8" text-anchor="middle" textLength="37" lengthAdjust="spacingAndGlyphs">Phase</text><text transform="translate(831,636) rotate(-90)" font-family="'Liberation Sans',sans-serif" font-size="14" fill="#C840C8" text-anchor="middle" textLength="67" lengthAdjust="spacingAndGlyphs">GroupDelay</text><text x="884.3" y="699" font-family="'Liberation Sans',sans-serif" font-size="14.5" fill="#D4D4D4" text-anchor="middle" font-weight="normal" textLength="23" lengthAdjust="spacingAndGlyphs" >0Hz</text><text x="992.8" y="699" font-family="'Liberation Sans',sans-serif" font-size="14.5" fill="#D4D4D4" text-anchor="middle" font-weight="normal" textLength="30" lengthAdjust="spacingAndGlyphs" >1kHz</text><text x="1101.3" y="699" font-family="'Liberation Sans',sans-serif" font-size="14.5" fill="#D4D4D4" text-anchor="middle" font-weight="normal" textLength="30" lengthAdjust="spacingAndGlyphs" >2kHz</text><text x="1209.8" y="699" font-family="'Liberation Sans',sans-serif" font-size="14.5" fill="#D4D4D4" text-anchor="middle" font-weight="normal" textLength="30" lengthAdjust="spacingAndGlyphs" >3kHz</text><text x="1318.3" y="699" font-family="'Liberation Sans',sans-serif" font-size="14.5" fill="#D4D4D4" text-anchor="middle" font-weight="normal" textLength="30" lengthAdjust="spacingAndGlyphs" >4kHz</text><text x="1426.8" y="699" font-family="'Liberation Sans',sans-serif" font-size="14.5" fill="#D4D4D4" text-anchor="middle" font-weight="normal" textLength="30" lengthAdjust="spacingAndGlyphs" >5kHz</text><text x="1535.3" y="699" font-family="'Liberation Sans',sans-serif" font-size="14.5" fill="#D4D4D4" text-anchor="middle" font-weight="normal" textLength="30" lengthAdjust="spacingAndGlyphs" >6kHz</text><text x="1208.5" y="722" font-family="'Liberation Sans',sans-serif" font-size="15" fill="#D4D4D4" text-anchor="middle" font-weight="normal" textLength="61" lengthAdjust="spacingAndGlyphs" >Frequency</text></svg></body></html>
